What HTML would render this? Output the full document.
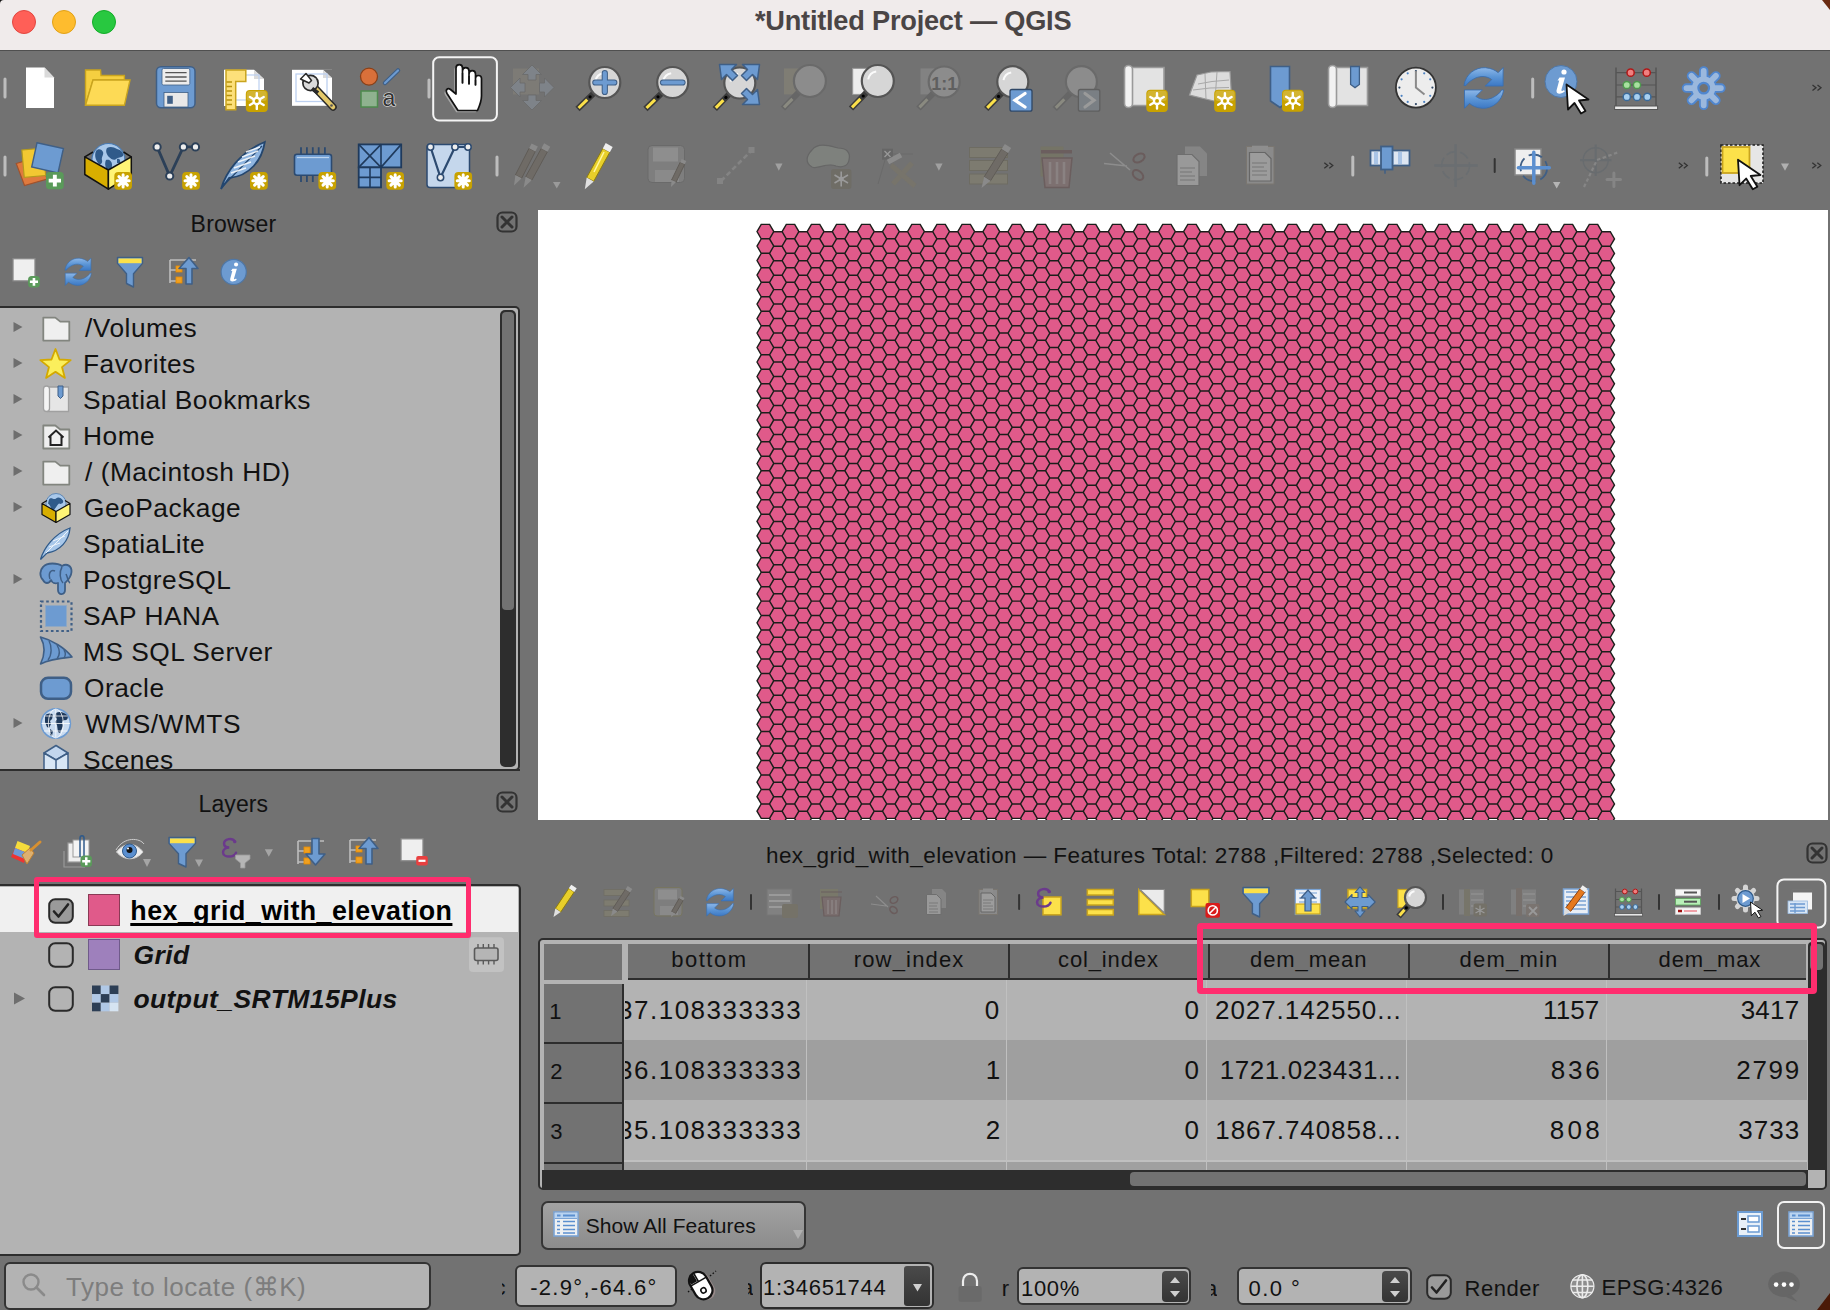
<!DOCTYPE html>
<html><head><meta charset="utf-8"><title>QGIS</title>
<style>
html,body{margin:0;padding:0}
body{width:1830px;height:1310px;position:relative;overflow:hidden;background:#727272;font-family:"Liberation Sans", sans-serif}
.abs{position:absolute}
.t{position:absolute;white-space:pre;line-height:1;font-family:"Liberation Sans", sans-serif}
svg{overflow:visible}
</style></head><body>
<div class="abs" style="left:0px;top:0px;width:1830px;height:50px;background:#F0EBEB"></div>
<div class="abs" style="left:0px;top:50px;width:1830px;height:1px;background:#4F4F4F"></div>
<div class="abs" style="left:12px;top:10px;width:22px;height:22px;border-radius:50%;background:#FF5F57;border:1px solid #E2463F"></div>
<div class="abs" style="left:52px;top:10px;width:22px;height:22px;border-radius:50%;background:#FEBC2E;border:1px solid #E1A116"></div>
<div class="abs" style="left:92px;top:10px;width:22px;height:22px;border-radius:50%;background:#28C840;border:1px solid #12AC28"></div>
<div class="t" style="left:754.90px;top:6.80px;font-size:27.2px;font-weight:bold;font-style:normal;color:#4A4545;letter-spacing:-0.222px;">*Untitled Project — QGIS</div>
<div class="t" style="left:190.60px;top:213.00px;font-size:23px;font-weight:normal;font-style:normal;color:#111;letter-spacing:0.217px;">Browser</div>
<svg class="abs" style="left:496px;top:211px" width="22" height="22" viewBox="0 0 22 22"><rect x="1.5" y="1.5" width="19" height="19" rx="5" fill="none" stroke="#333" stroke-width="2.2"/><path d="M6 6L16 16M16 6L6 16" stroke="#333" stroke-width="3" stroke-linecap="round"/></svg>
<div class="abs" style="left:0px;top:306px;width:520px;height:465px;background:#B3B3B3;border:2px solid #2D2D2D;border-left:none;border-radius:0 5px 5px 0;box-sizing:border-box"></div>
<div class="abs" style="left:500px;top:310px;width:16px;height:457px;background:#2D2D2D;border-radius:5px"></div>
<div class="abs" style="left:502px;top:312px;width:12px;height:298px;background:#727272;border-radius:4px"></div>
<div class="abs" style="left:0;top:308px;width:498px;height:461px;overflow:hidden">
<div class="t" style="left:85.00px;top:6.70px;font-size:26.3px;font-weight:normal;font-style:normal;color:#111;letter-spacing:0.512px;">/Volumes</div>
<svg class="abs" style="left:12px;top:13.199999999999989px" width="12" height="12"><path d="M1.5 1L10.5 6L1.5 11Z" fill="#6E6E6E"/></svg>
<div class="t" style="left:83.00px;top:42.70px;font-size:26.3px;font-weight:normal;font-style:normal;color:#111;letter-spacing:0.512px;">Favorites</div>
<svg class="abs" style="left:12px;top:49.19999999999999px" width="12" height="12"><path d="M1.5 1L10.5 6L1.5 11Z" fill="#6E6E6E"/></svg>
<div class="t" style="left:83.00px;top:78.70px;font-size:26.3px;font-weight:normal;font-style:normal;color:#111;letter-spacing:0.512px;">Spatial Bookmarks</div>
<svg class="abs" style="left:12px;top:85.19999999999999px" width="12" height="12"><path d="M1.5 1L10.5 6L1.5 11Z" fill="#6E6E6E"/></svg>
<div class="t" style="left:83.00px;top:114.70px;font-size:26.3px;font-weight:normal;font-style:normal;color:#111;letter-spacing:0.512px;">Home</div>
<svg class="abs" style="left:12px;top:121.19999999999999px" width="12" height="12"><path d="M1.5 1L10.5 6L1.5 11Z" fill="#6E6E6E"/></svg>
<div class="t" style="left:85.00px;top:150.70px;font-size:26.3px;font-weight:normal;font-style:normal;color:#111;letter-spacing:0.512px;">/ (Macintosh HD)</div>
<svg class="abs" style="left:12px;top:157.2px" width="12" height="12"><path d="M1.5 1L10.5 6L1.5 11Z" fill="#6E6E6E"/></svg>
<div class="t" style="left:84.00px;top:186.70px;font-size:26.3px;font-weight:normal;font-style:normal;color:#111;letter-spacing:0.512px;">GeoPackage</div>
<svg class="abs" style="left:12px;top:193.20000000000005px" width="12" height="12"><path d="M1.5 1L10.5 6L1.5 11Z" fill="#6E6E6E"/></svg>
<div class="t" style="left:83.00px;top:222.70px;font-size:26.3px;font-weight:normal;font-style:normal;color:#111;letter-spacing:0.512px;">SpatiaLite</div>
<div class="t" style="left:83.00px;top:258.70px;font-size:26.3px;font-weight:normal;font-style:normal;color:#111;letter-spacing:0.512px;">PostgreSQL</div>
<svg class="abs" style="left:12px;top:265.20000000000005px" width="12" height="12"><path d="M1.5 1L10.5 6L1.5 11Z" fill="#6E6E6E"/></svg>
<div class="t" style="left:83.00px;top:294.70px;font-size:26.3px;font-weight:normal;font-style:normal;color:#111;letter-spacing:0.512px;">SAP HANA</div>
<div class="t" style="left:83.00px;top:330.70px;font-size:26.3px;font-weight:normal;font-style:normal;color:#111;letter-spacing:0.512px;">MS SQL Server</div>
<div class="t" style="left:84.00px;top:366.70px;font-size:26.3px;font-weight:normal;font-style:normal;color:#111;letter-spacing:0.512px;">Oracle</div>
<div class="t" style="left:85.00px;top:402.70px;font-size:26.3px;font-weight:normal;font-style:normal;color:#111;letter-spacing:0.512px;">WMS/WMTS</div>
<svg class="abs" style="left:12px;top:409.20000000000005px" width="12" height="12"><path d="M1.5 1L10.5 6L1.5 11Z" fill="#6E6E6E"/></svg>
<div class="t" style="left:83.00px;top:438.70px;font-size:26.3px;font-weight:normal;font-style:normal;color:#111;letter-spacing:0.512px;">Scenes</div>
</div>
<div class="abs" style="left:0px;top:769px;width:520px;height:2px;background:#2D2D2D"></div>
<div class="t" style="left:198.60px;top:793.00px;font-size:23px;font-weight:normal;font-style:normal;color:#111;letter-spacing:0.080px;">Layers</div>
<svg class="abs" style="left:496px;top:791px" width="22" height="22" viewBox="0 0 22 22"><rect x="1.5" y="1.5" width="19" height="19" rx="5" fill="none" stroke="#333" stroke-width="2.2"/><path d="M6 6L16 16M16 6L6 16" stroke="#333" stroke-width="3" stroke-linecap="round"/></svg>
<div class="abs" style="left:0px;top:884px;width:521px;height:372px;background:#B3B3B3;border:2px solid #2D2D2D;border-left:none;border-radius:0 5px 5px 0;box-sizing:border-box"></div>
<div class="abs" style="left:0px;top:887px;width:518px;height:45px;background:#F0F0F0"></div>
<svg class="abs" style="left:48px;top:898px" width="26" height="26" viewBox="0 0 26 26"><rect x="1.2" y="1.2" width="23.6" height="23.6" rx="6" fill="#9a9a9a" stroke="#2a2a2a" stroke-width="2"/><path d="M6 13.5L10.5 18.5L20 6.5" fill="none" stroke="#222" stroke-width="2.6" stroke-linecap="round" stroke-linejoin="round"/></svg>
<svg class="abs" style="left:48px;top:942px" width="26" height="26" viewBox="0 0 26 26"><rect x="1.2" y="1.2" width="23.6" height="23.6" rx="6" fill="none" stroke="#2a2a2a" stroke-width="2"/></svg>
<svg class="abs" style="left:48px;top:986px" width="26" height="26" viewBox="0 0 26 26"><rect x="1.2" y="1.2" width="23.6" height="23.6" rx="6" fill="none" stroke="#2a2a2a" stroke-width="2"/></svg>
<div class="abs" style="left:88px;top:894px;width:32px;height:32px;background:#E05A8A;border:1px solid #8a3a55;box-sizing:border-box"></div>
<div class="abs" style="left:88px;top:939px;width:32px;height:31px;background:#9E80BC;border:1px solid #6f5a8a;box-sizing:border-box"></div>
<div class="t" style="left:130.30px;top:897.50px;font-size:26.8px;font-weight:bold;font-style:normal;color:#000;letter-spacing:0.473px;text-decoration:underline;text-underline-offset:3px;text-decoration-thickness:3px;text-decoration-skip-ink:none">hex_grid_with_elevation</div>
<div class="t" style="left:133.40px;top:941.50px;font-size:26.5px;font-weight:bold;font-style:italic;color:#111;letter-spacing:0.433px;">Grid</div>
<div class="t" style="left:133.40px;top:985.50px;font-size:26.5px;font-weight:bold;font-style:italic;color:#111;letter-spacing:0.425px;">output_SRTM15Plus</div>
<svg class="abs" style="left:13px;top:992px" width="13" height="13"><path d="M1 0.5L12 6.5L1 12.5Z" fill="#6E6E6E"/></svg>
<div class="abs" style="left:4px;top:1262px;width:427px;height:48px;background:#B3B3B3;border:2px solid #333;border-radius:6px;box-sizing:border-box"></div>
<svg class="abs" style="left:21px;top:1272px" width="26" height="26" viewBox="0 0 26 26"><circle cx="10" cy="10" r="7.5" fill="none" stroke="#8a8a8a" stroke-width="2.4"/><path d="M15.5 15.5L23 23" stroke="#8a8a8a" stroke-width="2.6" stroke-linecap="round"/></svg>
<div class="t" style="left:66.00px;top:1274.00px;font-size:26px;font-weight:normal;font-style:normal;color:#7D7D7D;letter-spacing:0.556px;">Type to locate (⌘K)</div>
<div class="abs" style="left:538px;top:210px;width:1290px;height:610px;background:#fff"></div>
<svg class="abs" style="left:0;top:0" width="1830" height="1310"><defs><clipPath id="mc"><rect x="538" y="210" width="1290" height="610"/></clipPath></defs><path clip-path="url(#mc)" d="M757 231.6l4.2-7.2h8.4l4.2 7.2l-4.2 7.2h-8.4zM757 246.1l4.2-7.2h8.4l4.2 7.2l-4.2 7.2h-8.4zM757 260.6l4.2-7.2h8.4l4.2 7.2l-4.2 7.2h-8.4zM757 275.1l4.2-7.2h8.4l4.2 7.2l-4.2 7.2h-8.4zM757 289.6l4.2-7.2h8.4l4.2 7.2l-4.2 7.2h-8.4zM757 304.1l4.2-7.2h8.4l4.2 7.2l-4.2 7.2h-8.4zM757 318.6l4.2-7.2h8.4l4.2 7.2l-4.2 7.2h-8.4zM757 333.1l4.2-7.2h8.4l4.2 7.2l-4.2 7.2h-8.4zM757 347.6l4.2-7.2h8.4l4.2 7.2l-4.2 7.2h-8.4zM757 362l4.2-7.2h8.4l4.2 7.2l-4.2 7.2h-8.4zM757 376.5l4.2-7.2h8.4l4.2 7.2l-4.2 7.2h-8.4zM757 391l4.2-7.2h8.4l4.2 7.2l-4.2 7.2h-8.4zM757 405.5l4.2-7.2h8.4l4.2 7.2l-4.2 7.2h-8.4zM757 420l4.2-7.2h8.4l4.2 7.2l-4.2 7.2h-8.4zM757 434.5l4.2-7.2h8.4l4.2 7.2l-4.2 7.2h-8.4zM757 449l4.2-7.2h8.4l4.2 7.2l-4.2 7.2h-8.4zM757 463.5l4.2-7.2h8.4l4.2 7.2l-4.2 7.2h-8.4zM757 478l4.2-7.2h8.4l4.2 7.2l-4.2 7.2h-8.4zM757 492.4l4.2-7.2h8.4l4.2 7.2l-4.2 7.2h-8.4zM757 506.9l4.2-7.2h8.4l4.2 7.2l-4.2 7.2h-8.4zM757 521.4l4.2-7.2h8.4l4.2 7.2l-4.2 7.2h-8.4zM757 535.9l4.2-7.2h8.4l4.2 7.2l-4.2 7.2h-8.4zM757 550.4l4.2-7.2h8.4l4.2 7.2l-4.2 7.2h-8.4zM757 564.9l4.2-7.2h8.4l4.2 7.2l-4.2 7.2h-8.4zM757 579.4l4.2-7.2h8.4l4.2 7.2l-4.2 7.2h-8.4zM757 593.9l4.2-7.2h8.4l4.2 7.2l-4.2 7.2h-8.4zM757 608.3l4.2-7.2h8.4l4.2 7.2l-4.2 7.2h-8.4zM757 622.8l4.2-7.2h8.4l4.2 7.2l-4.2 7.2h-8.4zM757 637.3l4.2-7.2h8.4l4.2 7.2l-4.2 7.2h-8.4zM757 651.8l4.2-7.2h8.4l4.2 7.2l-4.2 7.2h-8.4zM757 666.3l4.2-7.2h8.4l4.2 7.2l-4.2 7.2h-8.4zM757 680.8l4.2-7.2h8.4l4.2 7.2l-4.2 7.2h-8.4zM757 695.3l4.2-7.2h8.4l4.2 7.2l-4.2 7.2h-8.4zM757 709.8l4.2-7.2h8.4l4.2 7.2l-4.2 7.2h-8.4zM757 724.3l4.2-7.2h8.4l4.2 7.2l-4.2 7.2h-8.4zM757 738.7l4.2-7.2h8.4l4.2 7.2l-4.2 7.2h-8.4zM757 753.2l4.2-7.2h8.4l4.2 7.2l-4.2 7.2h-8.4zM757 767.7l4.2-7.2h8.4l4.2 7.2l-4.2 7.2h-8.4zM757 782.2l4.2-7.2h8.4l4.2 7.2l-4.2 7.2h-8.4zM757 796.7l4.2-7.2h8.4l4.2 7.2l-4.2 7.2h-8.4zM757 811.2l4.2-7.2h8.4l4.2 7.2l-4.2 7.2h-8.4zM769.5 238.9l4.2-7.2h8.4l4.2 7.2l-4.2 7.2h-8.4zM769.5 253.4l4.2-7.2h8.4l4.2 7.2l-4.2 7.2h-8.4zM769.5 267.9l4.2-7.2h8.4l4.2 7.2l-4.2 7.2h-8.4zM769.5 282.4l4.2-7.2h8.4l4.2 7.2l-4.2 7.2h-8.4zM769.5 296.8l4.2-7.2h8.4l4.2 7.2l-4.2 7.2h-8.4zM769.5 311.3l4.2-7.2h8.4l4.2 7.2l-4.2 7.2h-8.4zM769.5 325.8l4.2-7.2h8.4l4.2 7.2l-4.2 7.2h-8.4zM769.5 340.3l4.2-7.2h8.4l4.2 7.2l-4.2 7.2h-8.4zM769.5 354.8l4.2-7.2h8.4l4.2 7.2l-4.2 7.2h-8.4zM769.5 369.3l4.2-7.2h8.4l4.2 7.2l-4.2 7.2h-8.4zM769.5 383.8l4.2-7.2h8.4l4.2 7.2l-4.2 7.2h-8.4zM769.5 398.3l4.2-7.2h8.4l4.2 7.2l-4.2 7.2h-8.4zM769.5 412.8l4.2-7.2h8.4l4.2 7.2l-4.2 7.2h-8.4zM769.5 427.2l4.2-7.2h8.4l4.2 7.2l-4.2 7.2h-8.4zM769.5 441.7l4.2-7.2h8.4l4.2 7.2l-4.2 7.2h-8.4zM769.5 456.2l4.2-7.2h8.4l4.2 7.2l-4.2 7.2h-8.4zM769.5 470.7l4.2-7.2h8.4l4.2 7.2l-4.2 7.2h-8.4zM769.5 485.2l4.2-7.2h8.4l4.2 7.2l-4.2 7.2h-8.4zM769.5 499.7l4.2-7.2h8.4l4.2 7.2l-4.2 7.2h-8.4zM769.5 514.2l4.2-7.2h8.4l4.2 7.2l-4.2 7.2h-8.4zM769.5 528.7l4.2-7.2h8.4l4.2 7.2l-4.2 7.2h-8.4zM769.5 543.1l4.2-7.2h8.4l4.2 7.2l-4.2 7.2h-8.4zM769.5 557.6l4.2-7.2h8.4l4.2 7.2l-4.2 7.2h-8.4zM769.5 572.1l4.2-7.2h8.4l4.2 7.2l-4.2 7.2h-8.4zM769.5 586.6l4.2-7.2h8.4l4.2 7.2l-4.2 7.2h-8.4zM769.5 601.1l4.2-7.2h8.4l4.2 7.2l-4.2 7.2h-8.4zM769.5 615.6l4.2-7.2h8.4l4.2 7.2l-4.2 7.2h-8.4zM769.5 630.1l4.2-7.2h8.4l4.2 7.2l-4.2 7.2h-8.4zM769.5 644.6l4.2-7.2h8.4l4.2 7.2l-4.2 7.2h-8.4zM769.5 659.1l4.2-7.2h8.4l4.2 7.2l-4.2 7.2h-8.4zM769.5 673.5l4.2-7.2h8.4l4.2 7.2l-4.2 7.2h-8.4zM769.5 688l4.2-7.2h8.4l4.2 7.2l-4.2 7.2h-8.4zM769.5 702.5l4.2-7.2h8.4l4.2 7.2l-4.2 7.2h-8.4zM769.5 717l4.2-7.2h8.4l4.2 7.2l-4.2 7.2h-8.4zM769.5 731.5l4.2-7.2h8.4l4.2 7.2l-4.2 7.2h-8.4zM769.5 746l4.2-7.2h8.4l4.2 7.2l-4.2 7.2h-8.4zM769.5 760.5l4.2-7.2h8.4l4.2 7.2l-4.2 7.2h-8.4zM769.5 775l4.2-7.2h8.4l4.2 7.2l-4.2 7.2h-8.4zM769.5 789.5l4.2-7.2h8.4l4.2 7.2l-4.2 7.2h-8.4zM769.5 803.9l4.2-7.2h8.4l4.2 7.2l-4.2 7.2h-8.4zM769.5 818.4l4.2-7.2h8.4l4.2 7.2l-4.2 7.2h-8.4zM782.1 231.6l4.2-7.2h8.4l4.2 7.2l-4.2 7.2h-8.4zM782.1 246.1l4.2-7.2h8.4l4.2 7.2l-4.2 7.2h-8.4zM782.1 260.6l4.2-7.2h8.4l4.2 7.2l-4.2 7.2h-8.4zM782.1 275.1l4.2-7.2h8.4l4.2 7.2l-4.2 7.2h-8.4zM782.1 289.6l4.2-7.2h8.4l4.2 7.2l-4.2 7.2h-8.4zM782.1 304.1l4.2-7.2h8.4l4.2 7.2l-4.2 7.2h-8.4zM782.1 318.6l4.2-7.2h8.4l4.2 7.2l-4.2 7.2h-8.4zM782.1 333.1l4.2-7.2h8.4l4.2 7.2l-4.2 7.2h-8.4zM782.1 347.6l4.2-7.2h8.4l4.2 7.2l-4.2 7.2h-8.4zM782.1 362l4.2-7.2h8.4l4.2 7.2l-4.2 7.2h-8.4zM782.1 376.5l4.2-7.2h8.4l4.2 7.2l-4.2 7.2h-8.4zM782.1 391l4.2-7.2h8.4l4.2 7.2l-4.2 7.2h-8.4zM782.1 405.5l4.2-7.2h8.4l4.2 7.2l-4.2 7.2h-8.4zM782.1 420l4.2-7.2h8.4l4.2 7.2l-4.2 7.2h-8.4zM782.1 434.5l4.2-7.2h8.4l4.2 7.2l-4.2 7.2h-8.4zM782.1 449l4.2-7.2h8.4l4.2 7.2l-4.2 7.2h-8.4zM782.1 463.5l4.2-7.2h8.4l4.2 7.2l-4.2 7.2h-8.4zM782.1 478l4.2-7.2h8.4l4.2 7.2l-4.2 7.2h-8.4zM782.1 492.4l4.2-7.2h8.4l4.2 7.2l-4.2 7.2h-8.4zM782.1 506.9l4.2-7.2h8.4l4.2 7.2l-4.2 7.2h-8.4zM782.1 521.4l4.2-7.2h8.4l4.2 7.2l-4.2 7.2h-8.4zM782.1 535.9l4.2-7.2h8.4l4.2 7.2l-4.2 7.2h-8.4zM782.1 550.4l4.2-7.2h8.4l4.2 7.2l-4.2 7.2h-8.4zM782.1 564.9l4.2-7.2h8.4l4.2 7.2l-4.2 7.2h-8.4zM782.1 579.4l4.2-7.2h8.4l4.2 7.2l-4.2 7.2h-8.4zM782.1 593.9l4.2-7.2h8.4l4.2 7.2l-4.2 7.2h-8.4zM782.1 608.3l4.2-7.2h8.4l4.2 7.2l-4.2 7.2h-8.4zM782.1 622.8l4.2-7.2h8.4l4.2 7.2l-4.2 7.2h-8.4zM782.1 637.3l4.2-7.2h8.4l4.2 7.2l-4.2 7.2h-8.4zM782.1 651.8l4.2-7.2h8.4l4.2 7.2l-4.2 7.2h-8.4zM782.1 666.3l4.2-7.2h8.4l4.2 7.2l-4.2 7.2h-8.4zM782.1 680.8l4.2-7.2h8.4l4.2 7.2l-4.2 7.2h-8.4zM782.1 695.3l4.2-7.2h8.4l4.2 7.2l-4.2 7.2h-8.4zM782.1 709.8l4.2-7.2h8.4l4.2 7.2l-4.2 7.2h-8.4zM782.1 724.3l4.2-7.2h8.4l4.2 7.2l-4.2 7.2h-8.4zM782.1 738.7l4.2-7.2h8.4l4.2 7.2l-4.2 7.2h-8.4zM782.1 753.2l4.2-7.2h8.4l4.2 7.2l-4.2 7.2h-8.4zM782.1 767.7l4.2-7.2h8.4l4.2 7.2l-4.2 7.2h-8.4zM782.1 782.2l4.2-7.2h8.4l4.2 7.2l-4.2 7.2h-8.4zM782.1 796.7l4.2-7.2h8.4l4.2 7.2l-4.2 7.2h-8.4zM782.1 811.2l4.2-7.2h8.4l4.2 7.2l-4.2 7.2h-8.4zM794.6 238.9l4.2-7.2h8.4l4.2 7.2l-4.2 7.2h-8.4zM794.6 253.4l4.2-7.2h8.4l4.2 7.2l-4.2 7.2h-8.4zM794.6 267.9l4.2-7.2h8.4l4.2 7.2l-4.2 7.2h-8.4zM794.6 282.4l4.2-7.2h8.4l4.2 7.2l-4.2 7.2h-8.4zM794.6 296.8l4.2-7.2h8.4l4.2 7.2l-4.2 7.2h-8.4zM794.6 311.3l4.2-7.2h8.4l4.2 7.2l-4.2 7.2h-8.4zM794.6 325.8l4.2-7.2h8.4l4.2 7.2l-4.2 7.2h-8.4zM794.6 340.3l4.2-7.2h8.4l4.2 7.2l-4.2 7.2h-8.4zM794.6 354.8l4.2-7.2h8.4l4.2 7.2l-4.2 7.2h-8.4zM794.6 369.3l4.2-7.2h8.4l4.2 7.2l-4.2 7.2h-8.4zM794.6 383.8l4.2-7.2h8.4l4.2 7.2l-4.2 7.2h-8.4zM794.6 398.3l4.2-7.2h8.4l4.2 7.2l-4.2 7.2h-8.4zM794.6 412.8l4.2-7.2h8.4l4.2 7.2l-4.2 7.2h-8.4zM794.6 427.2l4.2-7.2h8.4l4.2 7.2l-4.2 7.2h-8.4zM794.6 441.7l4.2-7.2h8.4l4.2 7.2l-4.2 7.2h-8.4zM794.6 456.2l4.2-7.2h8.4l4.2 7.2l-4.2 7.2h-8.4zM794.6 470.7l4.2-7.2h8.4l4.2 7.2l-4.2 7.2h-8.4zM794.6 485.2l4.2-7.2h8.4l4.2 7.2l-4.2 7.2h-8.4zM794.6 499.7l4.2-7.2h8.4l4.2 7.2l-4.2 7.2h-8.4zM794.6 514.2l4.2-7.2h8.4l4.2 7.2l-4.2 7.2h-8.4zM794.6 528.7l4.2-7.2h8.4l4.2 7.2l-4.2 7.2h-8.4zM794.6 543.1l4.2-7.2h8.4l4.2 7.2l-4.2 7.2h-8.4zM794.6 557.6l4.2-7.2h8.4l4.2 7.2l-4.2 7.2h-8.4zM794.6 572.1l4.2-7.2h8.4l4.2 7.2l-4.2 7.2h-8.4zM794.6 586.6l4.2-7.2h8.4l4.2 7.2l-4.2 7.2h-8.4zM794.6 601.1l4.2-7.2h8.4l4.2 7.2l-4.2 7.2h-8.4zM794.6 615.6l4.2-7.2h8.4l4.2 7.2l-4.2 7.2h-8.4zM794.6 630.1l4.2-7.2h8.4l4.2 7.2l-4.2 7.2h-8.4zM794.6 644.6l4.2-7.2h8.4l4.2 7.2l-4.2 7.2h-8.4zM794.6 659.1l4.2-7.2h8.4l4.2 7.2l-4.2 7.2h-8.4zM794.6 673.5l4.2-7.2h8.4l4.2 7.2l-4.2 7.2h-8.4zM794.6 688l4.2-7.2h8.4l4.2 7.2l-4.2 7.2h-8.4zM794.6 702.5l4.2-7.2h8.4l4.2 7.2l-4.2 7.2h-8.4zM794.6 717l4.2-7.2h8.4l4.2 7.2l-4.2 7.2h-8.4zM794.6 731.5l4.2-7.2h8.4l4.2 7.2l-4.2 7.2h-8.4zM794.6 746l4.2-7.2h8.4l4.2 7.2l-4.2 7.2h-8.4zM794.6 760.5l4.2-7.2h8.4l4.2 7.2l-4.2 7.2h-8.4zM794.6 775l4.2-7.2h8.4l4.2 7.2l-4.2 7.2h-8.4zM794.6 789.5l4.2-7.2h8.4l4.2 7.2l-4.2 7.2h-8.4zM794.6 803.9l4.2-7.2h8.4l4.2 7.2l-4.2 7.2h-8.4zM794.6 818.4l4.2-7.2h8.4l4.2 7.2l-4.2 7.2h-8.4zM807.2 231.6l4.2-7.2h8.4l4.2 7.2l-4.2 7.2h-8.4zM807.2 246.1l4.2-7.2h8.4l4.2 7.2l-4.2 7.2h-8.4zM807.2 260.6l4.2-7.2h8.4l4.2 7.2l-4.2 7.2h-8.4zM807.2 275.1l4.2-7.2h8.4l4.2 7.2l-4.2 7.2h-8.4zM807.2 289.6l4.2-7.2h8.4l4.2 7.2l-4.2 7.2h-8.4zM807.2 304.1l4.2-7.2h8.4l4.2 7.2l-4.2 7.2h-8.4zM807.2 318.6l4.2-7.2h8.4l4.2 7.2l-4.2 7.2h-8.4zM807.2 333.1l4.2-7.2h8.4l4.2 7.2l-4.2 7.2h-8.4zM807.2 347.6l4.2-7.2h8.4l4.2 7.2l-4.2 7.2h-8.4zM807.2 362l4.2-7.2h8.4l4.2 7.2l-4.2 7.2h-8.4zM807.2 376.5l4.2-7.2h8.4l4.2 7.2l-4.2 7.2h-8.4zM807.2 391l4.2-7.2h8.4l4.2 7.2l-4.2 7.2h-8.4zM807.2 405.5l4.2-7.2h8.4l4.2 7.2l-4.2 7.2h-8.4zM807.2 420l4.2-7.2h8.4l4.2 7.2l-4.2 7.2h-8.4zM807.2 434.5l4.2-7.2h8.4l4.2 7.2l-4.2 7.2h-8.4zM807.2 449l4.2-7.2h8.4l4.2 7.2l-4.2 7.2h-8.4zM807.2 463.5l4.2-7.2h8.4l4.2 7.2l-4.2 7.2h-8.4zM807.2 478l4.2-7.2h8.4l4.2 7.2l-4.2 7.2h-8.4zM807.2 492.4l4.2-7.2h8.4l4.2 7.2l-4.2 7.2h-8.4zM807.2 506.9l4.2-7.2h8.4l4.2 7.2l-4.2 7.2h-8.4zM807.2 521.4l4.2-7.2h8.4l4.2 7.2l-4.2 7.2h-8.4zM807.2 535.9l4.2-7.2h8.4l4.2 7.2l-4.2 7.2h-8.4zM807.2 550.4l4.2-7.2h8.4l4.2 7.2l-4.2 7.2h-8.4zM807.2 564.9l4.2-7.2h8.4l4.2 7.2l-4.2 7.2h-8.4zM807.2 579.4l4.2-7.2h8.4l4.2 7.2l-4.2 7.2h-8.4zM807.2 593.9l4.2-7.2h8.4l4.2 7.2l-4.2 7.2h-8.4zM807.2 608.3l4.2-7.2h8.4l4.2 7.2l-4.2 7.2h-8.4zM807.2 622.8l4.2-7.2h8.4l4.2 7.2l-4.2 7.2h-8.4zM807.2 637.3l4.2-7.2h8.4l4.2 7.2l-4.2 7.2h-8.4zM807.2 651.8l4.2-7.2h8.4l4.2 7.2l-4.2 7.2h-8.4zM807.2 666.3l4.2-7.2h8.4l4.2 7.2l-4.2 7.2h-8.4zM807.2 680.8l4.2-7.2h8.4l4.2 7.2l-4.2 7.2h-8.4zM807.2 695.3l4.2-7.2h8.4l4.2 7.2l-4.2 7.2h-8.4zM807.2 709.8l4.2-7.2h8.4l4.2 7.2l-4.2 7.2h-8.4zM807.2 724.3l4.2-7.2h8.4l4.2 7.2l-4.2 7.2h-8.4zM807.2 738.7l4.2-7.2h8.4l4.2 7.2l-4.2 7.2h-8.4zM807.2 753.2l4.2-7.2h8.4l4.2 7.2l-4.2 7.2h-8.4zM807.2 767.7l4.2-7.2h8.4l4.2 7.2l-4.2 7.2h-8.4zM807.2 782.2l4.2-7.2h8.4l4.2 7.2l-4.2 7.2h-8.4zM807.2 796.7l4.2-7.2h8.4l4.2 7.2l-4.2 7.2h-8.4zM807.2 811.2l4.2-7.2h8.4l4.2 7.2l-4.2 7.2h-8.4zM819.7 238.9l4.2-7.2h8.4l4.2 7.2l-4.2 7.2h-8.4zM819.7 253.4l4.2-7.2h8.4l4.2 7.2l-4.2 7.2h-8.4zM819.7 267.9l4.2-7.2h8.4l4.2 7.2l-4.2 7.2h-8.4zM819.7 282.4l4.2-7.2h8.4l4.2 7.2l-4.2 7.2h-8.4zM819.7 296.8l4.2-7.2h8.4l4.2 7.2l-4.2 7.2h-8.4zM819.7 311.3l4.2-7.2h8.4l4.2 7.2l-4.2 7.2h-8.4zM819.7 325.8l4.2-7.2h8.4l4.2 7.2l-4.2 7.2h-8.4zM819.7 340.3l4.2-7.2h8.4l4.2 7.2l-4.2 7.2h-8.4zM819.7 354.8l4.2-7.2h8.4l4.2 7.2l-4.2 7.2h-8.4zM819.7 369.3l4.2-7.2h8.4l4.2 7.2l-4.2 7.2h-8.4zM819.7 383.8l4.2-7.2h8.4l4.2 7.2l-4.2 7.2h-8.4zM819.7 398.3l4.2-7.2h8.4l4.2 7.2l-4.2 7.2h-8.4zM819.7 412.8l4.2-7.2h8.4l4.2 7.2l-4.2 7.2h-8.4zM819.7 427.2l4.2-7.2h8.4l4.2 7.2l-4.2 7.2h-8.4zM819.7 441.7l4.2-7.2h8.4l4.2 7.2l-4.2 7.2h-8.4zM819.7 456.2l4.2-7.2h8.4l4.2 7.2l-4.2 7.2h-8.4zM819.7 470.7l4.2-7.2h8.4l4.2 7.2l-4.2 7.2h-8.4zM819.7 485.2l4.2-7.2h8.4l4.2 7.2l-4.2 7.2h-8.4zM819.7 499.7l4.2-7.2h8.4l4.2 7.2l-4.2 7.2h-8.4zM819.7 514.2l4.2-7.2h8.4l4.2 7.2l-4.2 7.2h-8.4zM819.7 528.7l4.2-7.2h8.4l4.2 7.2l-4.2 7.2h-8.4zM819.7 543.1l4.2-7.2h8.4l4.2 7.2l-4.2 7.2h-8.4zM819.7 557.6l4.2-7.2h8.4l4.2 7.2l-4.2 7.2h-8.4zM819.7 572.1l4.2-7.2h8.4l4.2 7.2l-4.2 7.2h-8.4zM819.7 586.6l4.2-7.2h8.4l4.2 7.2l-4.2 7.2h-8.4zM819.7 601.1l4.2-7.2h8.4l4.2 7.2l-4.2 7.2h-8.4zM819.7 615.6l4.2-7.2h8.4l4.2 7.2l-4.2 7.2h-8.4zM819.7 630.1l4.2-7.2h8.4l4.2 7.2l-4.2 7.2h-8.4zM819.7 644.6l4.2-7.2h8.4l4.2 7.2l-4.2 7.2h-8.4zM819.7 659.1l4.2-7.2h8.4l4.2 7.2l-4.2 7.2h-8.4zM819.7 673.5l4.2-7.2h8.4l4.2 7.2l-4.2 7.2h-8.4zM819.7 688l4.2-7.2h8.4l4.2 7.2l-4.2 7.2h-8.4zM819.7 702.5l4.2-7.2h8.4l4.2 7.2l-4.2 7.2h-8.4zM819.7 717l4.2-7.2h8.4l4.2 7.2l-4.2 7.2h-8.4zM819.7 731.5l4.2-7.2h8.4l4.2 7.2l-4.2 7.2h-8.4zM819.7 746l4.2-7.2h8.4l4.2 7.2l-4.2 7.2h-8.4zM819.7 760.5l4.2-7.2h8.4l4.2 7.2l-4.2 7.2h-8.4zM819.7 775l4.2-7.2h8.4l4.2 7.2l-4.2 7.2h-8.4zM819.7 789.5l4.2-7.2h8.4l4.2 7.2l-4.2 7.2h-8.4zM819.7 803.9l4.2-7.2h8.4l4.2 7.2l-4.2 7.2h-8.4zM819.7 818.4l4.2-7.2h8.4l4.2 7.2l-4.2 7.2h-8.4zM832.3 231.6l4.2-7.2h8.4l4.2 7.2l-4.2 7.2h-8.4zM832.3 246.1l4.2-7.2h8.4l4.2 7.2l-4.2 7.2h-8.4zM832.3 260.6l4.2-7.2h8.4l4.2 7.2l-4.2 7.2h-8.4zM832.3 275.1l4.2-7.2h8.4l4.2 7.2l-4.2 7.2h-8.4zM832.3 289.6l4.2-7.2h8.4l4.2 7.2l-4.2 7.2h-8.4zM832.3 304.1l4.2-7.2h8.4l4.2 7.2l-4.2 7.2h-8.4zM832.3 318.6l4.2-7.2h8.4l4.2 7.2l-4.2 7.2h-8.4zM832.3 333.1l4.2-7.2h8.4l4.2 7.2l-4.2 7.2h-8.4zM832.3 347.6l4.2-7.2h8.4l4.2 7.2l-4.2 7.2h-8.4zM832.3 362l4.2-7.2h8.4l4.2 7.2l-4.2 7.2h-8.4zM832.3 376.5l4.2-7.2h8.4l4.2 7.2l-4.2 7.2h-8.4zM832.3 391l4.2-7.2h8.4l4.2 7.2l-4.2 7.2h-8.4zM832.3 405.5l4.2-7.2h8.4l4.2 7.2l-4.2 7.2h-8.4zM832.3 420l4.2-7.2h8.4l4.2 7.2l-4.2 7.2h-8.4zM832.3 434.5l4.2-7.2h8.4l4.2 7.2l-4.2 7.2h-8.4zM832.3 449l4.2-7.2h8.4l4.2 7.2l-4.2 7.2h-8.4zM832.3 463.5l4.2-7.2h8.4l4.2 7.2l-4.2 7.2h-8.4zM832.3 478l4.2-7.2h8.4l4.2 7.2l-4.2 7.2h-8.4zM832.3 492.4l4.2-7.2h8.4l4.2 7.2l-4.2 7.2h-8.4zM832.3 506.9l4.2-7.2h8.4l4.2 7.2l-4.2 7.2h-8.4zM832.3 521.4l4.2-7.2h8.4l4.2 7.2l-4.2 7.2h-8.4zM832.3 535.9l4.2-7.2h8.4l4.2 7.2l-4.2 7.2h-8.4zM832.3 550.4l4.2-7.2h8.4l4.2 7.2l-4.2 7.2h-8.4zM832.3 564.9l4.2-7.2h8.4l4.2 7.2l-4.2 7.2h-8.4zM832.3 579.4l4.2-7.2h8.4l4.2 7.2l-4.2 7.2h-8.4zM832.3 593.9l4.2-7.2h8.4l4.2 7.2l-4.2 7.2h-8.4zM832.3 608.3l4.2-7.2h8.4l4.2 7.2l-4.2 7.2h-8.4zM832.3 622.8l4.2-7.2h8.4l4.2 7.2l-4.2 7.2h-8.4zM832.3 637.3l4.2-7.2h8.4l4.2 7.2l-4.2 7.2h-8.4zM832.3 651.8l4.2-7.2h8.4l4.2 7.2l-4.2 7.2h-8.4zM832.3 666.3l4.2-7.2h8.4l4.2 7.2l-4.2 7.2h-8.4zM832.3 680.8l4.2-7.2h8.4l4.2 7.2l-4.2 7.2h-8.4zM832.3 695.3l4.2-7.2h8.4l4.2 7.2l-4.2 7.2h-8.4zM832.3 709.8l4.2-7.2h8.4l4.2 7.2l-4.2 7.2h-8.4zM832.3 724.3l4.2-7.2h8.4l4.2 7.2l-4.2 7.2h-8.4zM832.3 738.7l4.2-7.2h8.4l4.2 7.2l-4.2 7.2h-8.4zM832.3 753.2l4.2-7.2h8.4l4.2 7.2l-4.2 7.2h-8.4zM832.3 767.7l4.2-7.2h8.4l4.2 7.2l-4.2 7.2h-8.4zM832.3 782.2l4.2-7.2h8.4l4.2 7.2l-4.2 7.2h-8.4zM832.3 796.7l4.2-7.2h8.4l4.2 7.2l-4.2 7.2h-8.4zM832.3 811.2l4.2-7.2h8.4l4.2 7.2l-4.2 7.2h-8.4zM844.8 238.9l4.2-7.2h8.4l4.2 7.2l-4.2 7.2h-8.4zM844.8 253.4l4.2-7.2h8.4l4.2 7.2l-4.2 7.2h-8.4zM844.8 267.9l4.2-7.2h8.4l4.2 7.2l-4.2 7.2h-8.4zM844.8 282.4l4.2-7.2h8.4l4.2 7.2l-4.2 7.2h-8.4zM844.8 296.8l4.2-7.2h8.4l4.2 7.2l-4.2 7.2h-8.4zM844.8 311.3l4.2-7.2h8.4l4.2 7.2l-4.2 7.2h-8.4zM844.8 325.8l4.2-7.2h8.4l4.2 7.2l-4.2 7.2h-8.4zM844.8 340.3l4.2-7.2h8.4l4.2 7.2l-4.2 7.2h-8.4zM844.8 354.8l4.2-7.2h8.4l4.2 7.2l-4.2 7.2h-8.4zM844.8 369.3l4.2-7.2h8.4l4.2 7.2l-4.2 7.2h-8.4zM844.8 383.8l4.2-7.2h8.4l4.2 7.2l-4.2 7.2h-8.4zM844.8 398.3l4.2-7.2h8.4l4.2 7.2l-4.2 7.2h-8.4zM844.8 412.8l4.2-7.2h8.4l4.2 7.2l-4.2 7.2h-8.4zM844.8 427.2l4.2-7.2h8.4l4.2 7.2l-4.2 7.2h-8.4zM844.8 441.7l4.2-7.2h8.4l4.2 7.2l-4.2 7.2h-8.4zM844.8 456.2l4.2-7.2h8.4l4.2 7.2l-4.2 7.2h-8.4zM844.8 470.7l4.2-7.2h8.4l4.2 7.2l-4.2 7.2h-8.4zM844.8 485.2l4.2-7.2h8.4l4.2 7.2l-4.2 7.2h-8.4zM844.8 499.7l4.2-7.2h8.4l4.2 7.2l-4.2 7.2h-8.4zM844.8 514.2l4.2-7.2h8.4l4.2 7.2l-4.2 7.2h-8.4zM844.8 528.7l4.2-7.2h8.4l4.2 7.2l-4.2 7.2h-8.4zM844.8 543.1l4.2-7.2h8.4l4.2 7.2l-4.2 7.2h-8.4zM844.8 557.6l4.2-7.2h8.4l4.2 7.2l-4.2 7.2h-8.4zM844.8 572.1l4.2-7.2h8.4l4.2 7.2l-4.2 7.2h-8.4zM844.8 586.6l4.2-7.2h8.4l4.2 7.2l-4.2 7.2h-8.4zM844.8 601.1l4.2-7.2h8.4l4.2 7.2l-4.2 7.2h-8.4zM844.8 615.6l4.2-7.2h8.4l4.2 7.2l-4.2 7.2h-8.4zM844.8 630.1l4.2-7.2h8.4l4.2 7.2l-4.2 7.2h-8.4zM844.8 644.6l4.2-7.2h8.4l4.2 7.2l-4.2 7.2h-8.4zM844.8 659.1l4.2-7.2h8.4l4.2 7.2l-4.2 7.2h-8.4zM844.8 673.5l4.2-7.2h8.4l4.2 7.2l-4.2 7.2h-8.4zM844.8 688l4.2-7.2h8.4l4.2 7.2l-4.2 7.2h-8.4zM844.8 702.5l4.2-7.2h8.4l4.2 7.2l-4.2 7.2h-8.4zM844.8 717l4.2-7.2h8.4l4.2 7.2l-4.2 7.2h-8.4zM844.8 731.5l4.2-7.2h8.4l4.2 7.2l-4.2 7.2h-8.4zM844.8 746l4.2-7.2h8.4l4.2 7.2l-4.2 7.2h-8.4zM844.8 760.5l4.2-7.2h8.4l4.2 7.2l-4.2 7.2h-8.4zM844.8 775l4.2-7.2h8.4l4.2 7.2l-4.2 7.2h-8.4zM844.8 789.5l4.2-7.2h8.4l4.2 7.2l-4.2 7.2h-8.4zM844.8 803.9l4.2-7.2h8.4l4.2 7.2l-4.2 7.2h-8.4zM844.8 818.4l4.2-7.2h8.4l4.2 7.2l-4.2 7.2h-8.4zM857.4 231.6l4.2-7.2h8.4l4.2 7.2l-4.2 7.2h-8.4zM857.4 246.1l4.2-7.2h8.4l4.2 7.2l-4.2 7.2h-8.4zM857.4 260.6l4.2-7.2h8.4l4.2 7.2l-4.2 7.2h-8.4zM857.4 275.1l4.2-7.2h8.4l4.2 7.2l-4.2 7.2h-8.4zM857.4 289.6l4.2-7.2h8.4l4.2 7.2l-4.2 7.2h-8.4zM857.4 304.1l4.2-7.2h8.4l4.2 7.2l-4.2 7.2h-8.4zM857.4 318.6l4.2-7.2h8.4l4.2 7.2l-4.2 7.2h-8.4zM857.4 333.1l4.2-7.2h8.4l4.2 7.2l-4.2 7.2h-8.4zM857.4 347.6l4.2-7.2h8.4l4.2 7.2l-4.2 7.2h-8.4zM857.4 362l4.2-7.2h8.4l4.2 7.2l-4.2 7.2h-8.4zM857.4 376.5l4.2-7.2h8.4l4.2 7.2l-4.2 7.2h-8.4zM857.4 391l4.2-7.2h8.4l4.2 7.2l-4.2 7.2h-8.4zM857.4 405.5l4.2-7.2h8.4l4.2 7.2l-4.2 7.2h-8.4zM857.4 420l4.2-7.2h8.4l4.2 7.2l-4.2 7.2h-8.4zM857.4 434.5l4.2-7.2h8.4l4.2 7.2l-4.2 7.2h-8.4zM857.4 449l4.2-7.2h8.4l4.2 7.2l-4.2 7.2h-8.4zM857.4 463.5l4.2-7.2h8.4l4.2 7.2l-4.2 7.2h-8.4zM857.4 478l4.2-7.2h8.4l4.2 7.2l-4.2 7.2h-8.4zM857.4 492.4l4.2-7.2h8.4l4.2 7.2l-4.2 7.2h-8.4zM857.4 506.9l4.2-7.2h8.4l4.2 7.2l-4.2 7.2h-8.4zM857.4 521.4l4.2-7.2h8.4l4.2 7.2l-4.2 7.2h-8.4zM857.4 535.9l4.2-7.2h8.4l4.2 7.2l-4.2 7.2h-8.4zM857.4 550.4l4.2-7.2h8.4l4.2 7.2l-4.2 7.2h-8.4zM857.4 564.9l4.2-7.2h8.4l4.2 7.2l-4.2 7.2h-8.4zM857.4 579.4l4.2-7.2h8.4l4.2 7.2l-4.2 7.2h-8.4zM857.4 593.9l4.2-7.2h8.4l4.2 7.2l-4.2 7.2h-8.4zM857.4 608.3l4.2-7.2h8.4l4.2 7.2l-4.2 7.2h-8.4zM857.4 622.8l4.2-7.2h8.4l4.2 7.2l-4.2 7.2h-8.4zM857.4 637.3l4.2-7.2h8.4l4.2 7.2l-4.2 7.2h-8.4zM857.4 651.8l4.2-7.2h8.4l4.2 7.2l-4.2 7.2h-8.4zM857.4 666.3l4.2-7.2h8.4l4.2 7.2l-4.2 7.2h-8.4zM857.4 680.8l4.2-7.2h8.4l4.2 7.2l-4.2 7.2h-8.4zM857.4 695.3l4.2-7.2h8.4l4.2 7.2l-4.2 7.2h-8.4zM857.4 709.8l4.2-7.2h8.4l4.2 7.2l-4.2 7.2h-8.4zM857.4 724.3l4.2-7.2h8.4l4.2 7.2l-4.2 7.2h-8.4zM857.4 738.7l4.2-7.2h8.4l4.2 7.2l-4.2 7.2h-8.4zM857.4 753.2l4.2-7.2h8.4l4.2 7.2l-4.2 7.2h-8.4zM857.4 767.7l4.2-7.2h8.4l4.2 7.2l-4.2 7.2h-8.4zM857.4 782.2l4.2-7.2h8.4l4.2 7.2l-4.2 7.2h-8.4zM857.4 796.7l4.2-7.2h8.4l4.2 7.2l-4.2 7.2h-8.4zM857.4 811.2l4.2-7.2h8.4l4.2 7.2l-4.2 7.2h-8.4zM869.9 238.9l4.2-7.2h8.4l4.2 7.2l-4.2 7.2h-8.4zM869.9 253.4l4.2-7.2h8.4l4.2 7.2l-4.2 7.2h-8.4zM869.9 267.9l4.2-7.2h8.4l4.2 7.2l-4.2 7.2h-8.4zM869.9 282.4l4.2-7.2h8.4l4.2 7.2l-4.2 7.2h-8.4zM869.9 296.8l4.2-7.2h8.4l4.2 7.2l-4.2 7.2h-8.4zM869.9 311.3l4.2-7.2h8.4l4.2 7.2l-4.2 7.2h-8.4zM869.9 325.8l4.2-7.2h8.4l4.2 7.2l-4.2 7.2h-8.4zM869.9 340.3l4.2-7.2h8.4l4.2 7.2l-4.2 7.2h-8.4zM869.9 354.8l4.2-7.2h8.4l4.2 7.2l-4.2 7.2h-8.4zM869.9 369.3l4.2-7.2h8.4l4.2 7.2l-4.2 7.2h-8.4zM869.9 383.8l4.2-7.2h8.4l4.2 7.2l-4.2 7.2h-8.4zM869.9 398.3l4.2-7.2h8.4l4.2 7.2l-4.2 7.2h-8.4zM869.9 412.8l4.2-7.2h8.4l4.2 7.2l-4.2 7.2h-8.4zM869.9 427.2l4.2-7.2h8.4l4.2 7.2l-4.2 7.2h-8.4zM869.9 441.7l4.2-7.2h8.4l4.2 7.2l-4.2 7.2h-8.4zM869.9 456.2l4.2-7.2h8.4l4.2 7.2l-4.2 7.2h-8.4zM869.9 470.7l4.2-7.2h8.4l4.2 7.2l-4.2 7.2h-8.4zM869.9 485.2l4.2-7.2h8.4l4.2 7.2l-4.2 7.2h-8.4zM869.9 499.7l4.2-7.2h8.4l4.2 7.2l-4.2 7.2h-8.4zM869.9 514.2l4.2-7.2h8.4l4.2 7.2l-4.2 7.2h-8.4zM869.9 528.7l4.2-7.2h8.4l4.2 7.2l-4.2 7.2h-8.4zM869.9 543.1l4.2-7.2h8.4l4.2 7.2l-4.2 7.2h-8.4zM869.9 557.6l4.2-7.2h8.4l4.2 7.2l-4.2 7.2h-8.4zM869.9 572.1l4.2-7.2h8.4l4.2 7.2l-4.2 7.2h-8.4zM869.9 586.6l4.2-7.2h8.4l4.2 7.2l-4.2 7.2h-8.4zM869.9 601.1l4.2-7.2h8.4l4.2 7.2l-4.2 7.2h-8.4zM869.9 615.6l4.2-7.2h8.4l4.2 7.2l-4.2 7.2h-8.4zM869.9 630.1l4.2-7.2h8.4l4.2 7.2l-4.2 7.2h-8.4zM869.9 644.6l4.2-7.2h8.4l4.2 7.2l-4.2 7.2h-8.4zM869.9 659.1l4.2-7.2h8.4l4.2 7.2l-4.2 7.2h-8.4zM869.9 673.5l4.2-7.2h8.4l4.2 7.2l-4.2 7.2h-8.4zM869.9 688l4.2-7.2h8.4l4.2 7.2l-4.2 7.2h-8.4zM869.9 702.5l4.2-7.2h8.4l4.2 7.2l-4.2 7.2h-8.4zM869.9 717l4.2-7.2h8.4l4.2 7.2l-4.2 7.2h-8.4zM869.9 731.5l4.2-7.2h8.4l4.2 7.2l-4.2 7.2h-8.4zM869.9 746l4.2-7.2h8.4l4.2 7.2l-4.2 7.2h-8.4zM869.9 760.5l4.2-7.2h8.4l4.2 7.2l-4.2 7.2h-8.4zM869.9 775l4.2-7.2h8.4l4.2 7.2l-4.2 7.2h-8.4zM869.9 789.5l4.2-7.2h8.4l4.2 7.2l-4.2 7.2h-8.4zM869.9 803.9l4.2-7.2h8.4l4.2 7.2l-4.2 7.2h-8.4zM869.9 818.4l4.2-7.2h8.4l4.2 7.2l-4.2 7.2h-8.4zM882.5 231.6l4.2-7.2h8.4l4.2 7.2l-4.2 7.2h-8.4zM882.5 246.1l4.2-7.2h8.4l4.2 7.2l-4.2 7.2h-8.4zM882.5 260.6l4.2-7.2h8.4l4.2 7.2l-4.2 7.2h-8.4zM882.5 275.1l4.2-7.2h8.4l4.2 7.2l-4.2 7.2h-8.4zM882.5 289.6l4.2-7.2h8.4l4.2 7.2l-4.2 7.2h-8.4zM882.5 304.1l4.2-7.2h8.4l4.2 7.2l-4.2 7.2h-8.4zM882.5 318.6l4.2-7.2h8.4l4.2 7.2l-4.2 7.2h-8.4zM882.5 333.1l4.2-7.2h8.4l4.2 7.2l-4.2 7.2h-8.4zM882.5 347.6l4.2-7.2h8.4l4.2 7.2l-4.2 7.2h-8.4zM882.5 362l4.2-7.2h8.4l4.2 7.2l-4.2 7.2h-8.4zM882.5 376.5l4.2-7.2h8.4l4.2 7.2l-4.2 7.2h-8.4zM882.5 391l4.2-7.2h8.4l4.2 7.2l-4.2 7.2h-8.4zM882.5 405.5l4.2-7.2h8.4l4.2 7.2l-4.2 7.2h-8.4zM882.5 420l4.2-7.2h8.4l4.2 7.2l-4.2 7.2h-8.4zM882.5 434.5l4.2-7.2h8.4l4.2 7.2l-4.2 7.2h-8.4zM882.5 449l4.2-7.2h8.4l4.2 7.2l-4.2 7.2h-8.4zM882.5 463.5l4.2-7.2h8.4l4.2 7.2l-4.2 7.2h-8.4zM882.5 478l4.2-7.2h8.4l4.2 7.2l-4.2 7.2h-8.4zM882.5 492.4l4.2-7.2h8.4l4.2 7.2l-4.2 7.2h-8.4zM882.5 506.9l4.2-7.2h8.4l4.2 7.2l-4.2 7.2h-8.4zM882.5 521.4l4.2-7.2h8.4l4.2 7.2l-4.2 7.2h-8.4zM882.5 535.9l4.2-7.2h8.4l4.2 7.2l-4.2 7.2h-8.4zM882.5 550.4l4.2-7.2h8.4l4.2 7.2l-4.2 7.2h-8.4zM882.5 564.9l4.2-7.2h8.4l4.2 7.2l-4.2 7.2h-8.4zM882.5 579.4l4.2-7.2h8.4l4.2 7.2l-4.2 7.2h-8.4zM882.5 593.9l4.2-7.2h8.4l4.2 7.2l-4.2 7.2h-8.4zM882.5 608.3l4.2-7.2h8.4l4.2 7.2l-4.2 7.2h-8.4zM882.5 622.8l4.2-7.2h8.4l4.2 7.2l-4.2 7.2h-8.4zM882.5 637.3l4.2-7.2h8.4l4.2 7.2l-4.2 7.2h-8.4zM882.5 651.8l4.2-7.2h8.4l4.2 7.2l-4.2 7.2h-8.4zM882.5 666.3l4.2-7.2h8.4l4.2 7.2l-4.2 7.2h-8.4zM882.5 680.8l4.2-7.2h8.4l4.2 7.2l-4.2 7.2h-8.4zM882.5 695.3l4.2-7.2h8.4l4.2 7.2l-4.2 7.2h-8.4zM882.5 709.8l4.2-7.2h8.4l4.2 7.2l-4.2 7.2h-8.4zM882.5 724.3l4.2-7.2h8.4l4.2 7.2l-4.2 7.2h-8.4zM882.5 738.7l4.2-7.2h8.4l4.2 7.2l-4.2 7.2h-8.4zM882.5 753.2l4.2-7.2h8.4l4.2 7.2l-4.2 7.2h-8.4zM882.5 767.7l4.2-7.2h8.4l4.2 7.2l-4.2 7.2h-8.4zM882.5 782.2l4.2-7.2h8.4l4.2 7.2l-4.2 7.2h-8.4zM882.5 796.7l4.2-7.2h8.4l4.2 7.2l-4.2 7.2h-8.4zM882.5 811.2l4.2-7.2h8.4l4.2 7.2l-4.2 7.2h-8.4zM895 238.9l4.2-7.2h8.4l4.2 7.2l-4.2 7.2h-8.4zM895 253.4l4.2-7.2h8.4l4.2 7.2l-4.2 7.2h-8.4zM895 267.9l4.2-7.2h8.4l4.2 7.2l-4.2 7.2h-8.4zM895 282.4l4.2-7.2h8.4l4.2 7.2l-4.2 7.2h-8.4zM895 296.8l4.2-7.2h8.4l4.2 7.2l-4.2 7.2h-8.4zM895 311.3l4.2-7.2h8.4l4.2 7.2l-4.2 7.2h-8.4zM895 325.8l4.2-7.2h8.4l4.2 7.2l-4.2 7.2h-8.4zM895 340.3l4.2-7.2h8.4l4.2 7.2l-4.2 7.2h-8.4zM895 354.8l4.2-7.2h8.4l4.2 7.2l-4.2 7.2h-8.4zM895 369.3l4.2-7.2h8.4l4.2 7.2l-4.2 7.2h-8.4zM895 383.8l4.2-7.2h8.4l4.2 7.2l-4.2 7.2h-8.4zM895 398.3l4.2-7.2h8.4l4.2 7.2l-4.2 7.2h-8.4zM895 412.8l4.2-7.2h8.4l4.2 7.2l-4.2 7.2h-8.4zM895 427.2l4.2-7.2h8.4l4.2 7.2l-4.2 7.2h-8.4zM895 441.7l4.2-7.2h8.4l4.2 7.2l-4.2 7.2h-8.4zM895 456.2l4.2-7.2h8.4l4.2 7.2l-4.2 7.2h-8.4zM895 470.7l4.2-7.2h8.4l4.2 7.2l-4.2 7.2h-8.4zM895 485.2l4.2-7.2h8.4l4.2 7.2l-4.2 7.2h-8.4zM895 499.7l4.2-7.2h8.4l4.2 7.2l-4.2 7.2h-8.4zM895 514.2l4.2-7.2h8.4l4.2 7.2l-4.2 7.2h-8.4zM895 528.7l4.2-7.2h8.4l4.2 7.2l-4.2 7.2h-8.4zM895 543.1l4.2-7.2h8.4l4.2 7.2l-4.2 7.2h-8.4zM895 557.6l4.2-7.2h8.4l4.2 7.2l-4.2 7.2h-8.4zM895 572.1l4.2-7.2h8.4l4.2 7.2l-4.2 7.2h-8.4zM895 586.6l4.2-7.2h8.4l4.2 7.2l-4.2 7.2h-8.4zM895 601.1l4.2-7.2h8.4l4.2 7.2l-4.2 7.2h-8.4zM895 615.6l4.2-7.2h8.4l4.2 7.2l-4.2 7.2h-8.4zM895 630.1l4.2-7.2h8.4l4.2 7.2l-4.2 7.2h-8.4zM895 644.6l4.2-7.2h8.4l4.2 7.2l-4.2 7.2h-8.4zM895 659.1l4.2-7.2h8.4l4.2 7.2l-4.2 7.2h-8.4zM895 673.5l4.2-7.2h8.4l4.2 7.2l-4.2 7.2h-8.4zM895 688l4.2-7.2h8.4l4.2 7.2l-4.2 7.2h-8.4zM895 702.5l4.2-7.2h8.4l4.2 7.2l-4.2 7.2h-8.4zM895 717l4.2-7.2h8.4l4.2 7.2l-4.2 7.2h-8.4zM895 731.5l4.2-7.2h8.4l4.2 7.2l-4.2 7.2h-8.4zM895 746l4.2-7.2h8.4l4.2 7.2l-4.2 7.2h-8.4zM895 760.5l4.2-7.2h8.4l4.2 7.2l-4.2 7.2h-8.4zM895 775l4.2-7.2h8.4l4.2 7.2l-4.2 7.2h-8.4zM895 789.5l4.2-7.2h8.4l4.2 7.2l-4.2 7.2h-8.4zM895 803.9l4.2-7.2h8.4l4.2 7.2l-4.2 7.2h-8.4zM895 818.4l4.2-7.2h8.4l4.2 7.2l-4.2 7.2h-8.4zM907.6 231.6l4.2-7.2h8.4l4.2 7.2l-4.2 7.2h-8.4zM907.6 246.1l4.2-7.2h8.4l4.2 7.2l-4.2 7.2h-8.4zM907.6 260.6l4.2-7.2h8.4l4.2 7.2l-4.2 7.2h-8.4zM907.6 275.1l4.2-7.2h8.4l4.2 7.2l-4.2 7.2h-8.4zM907.6 289.6l4.2-7.2h8.4l4.2 7.2l-4.2 7.2h-8.4zM907.6 304.1l4.2-7.2h8.4l4.2 7.2l-4.2 7.2h-8.4zM907.6 318.6l4.2-7.2h8.4l4.2 7.2l-4.2 7.2h-8.4zM907.6 333.1l4.2-7.2h8.4l4.2 7.2l-4.2 7.2h-8.4zM907.6 347.6l4.2-7.2h8.4l4.2 7.2l-4.2 7.2h-8.4zM907.6 362l4.2-7.2h8.4l4.2 7.2l-4.2 7.2h-8.4zM907.6 376.5l4.2-7.2h8.4l4.2 7.2l-4.2 7.2h-8.4zM907.6 391l4.2-7.2h8.4l4.2 7.2l-4.2 7.2h-8.4zM907.6 405.5l4.2-7.2h8.4l4.2 7.2l-4.2 7.2h-8.4zM907.6 420l4.2-7.2h8.4l4.2 7.2l-4.2 7.2h-8.4zM907.6 434.5l4.2-7.2h8.4l4.2 7.2l-4.2 7.2h-8.4zM907.6 449l4.2-7.2h8.4l4.2 7.2l-4.2 7.2h-8.4zM907.6 463.5l4.2-7.2h8.4l4.2 7.2l-4.2 7.2h-8.4zM907.6 478l4.2-7.2h8.4l4.2 7.2l-4.2 7.2h-8.4zM907.6 492.4l4.2-7.2h8.4l4.2 7.2l-4.2 7.2h-8.4zM907.6 506.9l4.2-7.2h8.4l4.2 7.2l-4.2 7.2h-8.4zM907.6 521.4l4.2-7.2h8.4l4.2 7.2l-4.2 7.2h-8.4zM907.6 535.9l4.2-7.2h8.4l4.2 7.2l-4.2 7.2h-8.4zM907.6 550.4l4.2-7.2h8.4l4.2 7.2l-4.2 7.2h-8.4zM907.6 564.9l4.2-7.2h8.4l4.2 7.2l-4.2 7.2h-8.4zM907.6 579.4l4.2-7.2h8.4l4.2 7.2l-4.2 7.2h-8.4zM907.6 593.9l4.2-7.2h8.4l4.2 7.2l-4.2 7.2h-8.4zM907.6 608.3l4.2-7.2h8.4l4.2 7.2l-4.2 7.2h-8.4zM907.6 622.8l4.2-7.2h8.4l4.2 7.2l-4.2 7.2h-8.4zM907.6 637.3l4.2-7.2h8.4l4.2 7.2l-4.2 7.2h-8.4zM907.6 651.8l4.2-7.2h8.4l4.2 7.2l-4.2 7.2h-8.4zM907.6 666.3l4.2-7.2h8.4l4.2 7.2l-4.2 7.2h-8.4zM907.6 680.8l4.2-7.2h8.4l4.2 7.2l-4.2 7.2h-8.4zM907.6 695.3l4.2-7.2h8.4l4.2 7.2l-4.2 7.2h-8.4zM907.6 709.8l4.2-7.2h8.4l4.2 7.2l-4.2 7.2h-8.4zM907.6 724.3l4.2-7.2h8.4l4.2 7.2l-4.2 7.2h-8.4zM907.6 738.7l4.2-7.2h8.4l4.2 7.2l-4.2 7.2h-8.4zM907.6 753.2l4.2-7.2h8.4l4.2 7.2l-4.2 7.2h-8.4zM907.6 767.7l4.2-7.2h8.4l4.2 7.2l-4.2 7.2h-8.4zM907.6 782.2l4.2-7.2h8.4l4.2 7.2l-4.2 7.2h-8.4zM907.6 796.7l4.2-7.2h8.4l4.2 7.2l-4.2 7.2h-8.4zM907.6 811.2l4.2-7.2h8.4l4.2 7.2l-4.2 7.2h-8.4zM920.1 238.9l4.2-7.2h8.4l4.2 7.2l-4.2 7.2h-8.4zM920.1 253.4l4.2-7.2h8.4l4.2 7.2l-4.2 7.2h-8.4zM920.1 267.9l4.2-7.2h8.4l4.2 7.2l-4.2 7.2h-8.4zM920.1 282.4l4.2-7.2h8.4l4.2 7.2l-4.2 7.2h-8.4zM920.1 296.8l4.2-7.2h8.4l4.2 7.2l-4.2 7.2h-8.4zM920.1 311.3l4.2-7.2h8.4l4.2 7.2l-4.2 7.2h-8.4zM920.1 325.8l4.2-7.2h8.4l4.2 7.2l-4.2 7.2h-8.4zM920.1 340.3l4.2-7.2h8.4l4.2 7.2l-4.2 7.2h-8.4zM920.1 354.8l4.2-7.2h8.4l4.2 7.2l-4.2 7.2h-8.4zM920.1 369.3l4.2-7.2h8.4l4.2 7.2l-4.2 7.2h-8.4zM920.1 383.8l4.2-7.2h8.4l4.2 7.2l-4.2 7.2h-8.4zM920.1 398.3l4.2-7.2h8.4l4.2 7.2l-4.2 7.2h-8.4zM920.1 412.8l4.2-7.2h8.4l4.2 7.2l-4.2 7.2h-8.4zM920.1 427.2l4.2-7.2h8.4l4.2 7.2l-4.2 7.2h-8.4zM920.1 441.7l4.2-7.2h8.4l4.2 7.2l-4.2 7.2h-8.4zM920.1 456.2l4.2-7.2h8.4l4.2 7.2l-4.2 7.2h-8.4zM920.1 470.7l4.2-7.2h8.4l4.2 7.2l-4.2 7.2h-8.4zM920.1 485.2l4.2-7.2h8.4l4.2 7.2l-4.2 7.2h-8.4zM920.1 499.7l4.2-7.2h8.4l4.2 7.2l-4.2 7.2h-8.4zM920.1 514.2l4.2-7.2h8.4l4.2 7.2l-4.2 7.2h-8.4zM920.1 528.7l4.2-7.2h8.4l4.2 7.2l-4.2 7.2h-8.4zM920.1 543.1l4.2-7.2h8.4l4.2 7.2l-4.2 7.2h-8.4zM920.1 557.6l4.2-7.2h8.4l4.2 7.2l-4.2 7.2h-8.4zM920.1 572.1l4.2-7.2h8.4l4.2 7.2l-4.2 7.2h-8.4zM920.1 586.6l4.2-7.2h8.4l4.2 7.2l-4.2 7.2h-8.4zM920.1 601.1l4.2-7.2h8.4l4.2 7.2l-4.2 7.2h-8.4zM920.1 615.6l4.2-7.2h8.4l4.2 7.2l-4.2 7.2h-8.4zM920.1 630.1l4.2-7.2h8.4l4.2 7.2l-4.2 7.2h-8.4zM920.1 644.6l4.2-7.2h8.4l4.2 7.2l-4.2 7.2h-8.4zM920.1 659.1l4.2-7.2h8.4l4.2 7.2l-4.2 7.2h-8.4zM920.1 673.5l4.2-7.2h8.4l4.2 7.2l-4.2 7.2h-8.4zM920.1 688l4.2-7.2h8.4l4.2 7.2l-4.2 7.2h-8.4zM920.1 702.5l4.2-7.2h8.4l4.2 7.2l-4.2 7.2h-8.4zM920.1 717l4.2-7.2h8.4l4.2 7.2l-4.2 7.2h-8.4zM920.1 731.5l4.2-7.2h8.4l4.2 7.2l-4.2 7.2h-8.4zM920.1 746l4.2-7.2h8.4l4.2 7.2l-4.2 7.2h-8.4zM920.1 760.5l4.2-7.2h8.4l4.2 7.2l-4.2 7.2h-8.4zM920.1 775l4.2-7.2h8.4l4.2 7.2l-4.2 7.2h-8.4zM920.1 789.5l4.2-7.2h8.4l4.2 7.2l-4.2 7.2h-8.4zM920.1 803.9l4.2-7.2h8.4l4.2 7.2l-4.2 7.2h-8.4zM920.1 818.4l4.2-7.2h8.4l4.2 7.2l-4.2 7.2h-8.4zM932.7 231.6l4.2-7.2h8.4l4.2 7.2l-4.2 7.2h-8.4zM932.7 246.1l4.2-7.2h8.4l4.2 7.2l-4.2 7.2h-8.4zM932.7 260.6l4.2-7.2h8.4l4.2 7.2l-4.2 7.2h-8.4zM932.7 275.1l4.2-7.2h8.4l4.2 7.2l-4.2 7.2h-8.4zM932.7 289.6l4.2-7.2h8.4l4.2 7.2l-4.2 7.2h-8.4zM932.7 304.1l4.2-7.2h8.4l4.2 7.2l-4.2 7.2h-8.4zM932.7 318.6l4.2-7.2h8.4l4.2 7.2l-4.2 7.2h-8.4zM932.7 333.1l4.2-7.2h8.4l4.2 7.2l-4.2 7.2h-8.4zM932.7 347.6l4.2-7.2h8.4l4.2 7.2l-4.2 7.2h-8.4zM932.7 362l4.2-7.2h8.4l4.2 7.2l-4.2 7.2h-8.4zM932.7 376.5l4.2-7.2h8.4l4.2 7.2l-4.2 7.2h-8.4zM932.7 391l4.2-7.2h8.4l4.2 7.2l-4.2 7.2h-8.4zM932.7 405.5l4.2-7.2h8.4l4.2 7.2l-4.2 7.2h-8.4zM932.7 420l4.2-7.2h8.4l4.2 7.2l-4.2 7.2h-8.4zM932.7 434.5l4.2-7.2h8.4l4.2 7.2l-4.2 7.2h-8.4zM932.7 449l4.2-7.2h8.4l4.2 7.2l-4.2 7.2h-8.4zM932.7 463.5l4.2-7.2h8.4l4.2 7.2l-4.2 7.2h-8.4zM932.7 478l4.2-7.2h8.4l4.2 7.2l-4.2 7.2h-8.4zM932.7 492.4l4.2-7.2h8.4l4.2 7.2l-4.2 7.2h-8.4zM932.7 506.9l4.2-7.2h8.4l4.2 7.2l-4.2 7.2h-8.4zM932.7 521.4l4.2-7.2h8.4l4.2 7.2l-4.2 7.2h-8.4zM932.7 535.9l4.2-7.2h8.4l4.2 7.2l-4.2 7.2h-8.4zM932.7 550.4l4.2-7.2h8.4l4.2 7.2l-4.2 7.2h-8.4zM932.7 564.9l4.2-7.2h8.4l4.2 7.2l-4.2 7.2h-8.4zM932.7 579.4l4.2-7.2h8.4l4.2 7.2l-4.2 7.2h-8.4zM932.7 593.9l4.2-7.2h8.4l4.2 7.2l-4.2 7.2h-8.4zM932.7 608.3l4.2-7.2h8.4l4.2 7.2l-4.2 7.2h-8.4zM932.7 622.8l4.2-7.2h8.4l4.2 7.2l-4.2 7.2h-8.4zM932.7 637.3l4.2-7.2h8.4l4.2 7.2l-4.2 7.2h-8.4zM932.7 651.8l4.2-7.2h8.4l4.2 7.2l-4.2 7.2h-8.4zM932.7 666.3l4.2-7.2h8.4l4.2 7.2l-4.2 7.2h-8.4zM932.7 680.8l4.2-7.2h8.4l4.2 7.2l-4.2 7.2h-8.4zM932.7 695.3l4.2-7.2h8.4l4.2 7.2l-4.2 7.2h-8.4zM932.7 709.8l4.2-7.2h8.4l4.2 7.2l-4.2 7.2h-8.4zM932.7 724.3l4.2-7.2h8.4l4.2 7.2l-4.2 7.2h-8.4zM932.7 738.7l4.2-7.2h8.4l4.2 7.2l-4.2 7.2h-8.4zM932.7 753.2l4.2-7.2h8.4l4.2 7.2l-4.2 7.2h-8.4zM932.7 767.7l4.2-7.2h8.4l4.2 7.2l-4.2 7.2h-8.4zM932.7 782.2l4.2-7.2h8.4l4.2 7.2l-4.2 7.2h-8.4zM932.7 796.7l4.2-7.2h8.4l4.2 7.2l-4.2 7.2h-8.4zM932.7 811.2l4.2-7.2h8.4l4.2 7.2l-4.2 7.2h-8.4zM945.2 238.9l4.2-7.2h8.4l4.2 7.2l-4.2 7.2h-8.4zM945.2 253.4l4.2-7.2h8.4l4.2 7.2l-4.2 7.2h-8.4zM945.2 267.9l4.2-7.2h8.4l4.2 7.2l-4.2 7.2h-8.4zM945.2 282.4l4.2-7.2h8.4l4.2 7.2l-4.2 7.2h-8.4zM945.2 296.8l4.2-7.2h8.4l4.2 7.2l-4.2 7.2h-8.4zM945.2 311.3l4.2-7.2h8.4l4.2 7.2l-4.2 7.2h-8.4zM945.2 325.8l4.2-7.2h8.4l4.2 7.2l-4.2 7.2h-8.4zM945.2 340.3l4.2-7.2h8.4l4.2 7.2l-4.2 7.2h-8.4zM945.2 354.8l4.2-7.2h8.4l4.2 7.2l-4.2 7.2h-8.4zM945.2 369.3l4.2-7.2h8.4l4.2 7.2l-4.2 7.2h-8.4zM945.2 383.8l4.2-7.2h8.4l4.2 7.2l-4.2 7.2h-8.4zM945.2 398.3l4.2-7.2h8.4l4.2 7.2l-4.2 7.2h-8.4zM945.2 412.8l4.2-7.2h8.4l4.2 7.2l-4.2 7.2h-8.4zM945.2 427.2l4.2-7.2h8.4l4.2 7.2l-4.2 7.2h-8.4zM945.2 441.7l4.2-7.2h8.4l4.2 7.2l-4.2 7.2h-8.4zM945.2 456.2l4.2-7.2h8.4l4.2 7.2l-4.2 7.2h-8.4zM945.2 470.7l4.2-7.2h8.4l4.2 7.2l-4.2 7.2h-8.4zM945.2 485.2l4.2-7.2h8.4l4.2 7.2l-4.2 7.2h-8.4zM945.2 499.7l4.2-7.2h8.4l4.2 7.2l-4.2 7.2h-8.4zM945.2 514.2l4.2-7.2h8.4l4.2 7.2l-4.2 7.2h-8.4zM945.2 528.7l4.2-7.2h8.4l4.2 7.2l-4.2 7.2h-8.4zM945.2 543.1l4.2-7.2h8.4l4.2 7.2l-4.2 7.2h-8.4zM945.2 557.6l4.2-7.2h8.4l4.2 7.2l-4.2 7.2h-8.4zM945.2 572.1l4.2-7.2h8.4l4.2 7.2l-4.2 7.2h-8.4zM945.2 586.6l4.2-7.2h8.4l4.2 7.2l-4.2 7.2h-8.4zM945.2 601.1l4.2-7.2h8.4l4.2 7.2l-4.2 7.2h-8.4zM945.2 615.6l4.2-7.2h8.4l4.2 7.2l-4.2 7.2h-8.4zM945.2 630.1l4.2-7.2h8.4l4.2 7.2l-4.2 7.2h-8.4zM945.2 644.6l4.2-7.2h8.4l4.2 7.2l-4.2 7.2h-8.4zM945.2 659.1l4.2-7.2h8.4l4.2 7.2l-4.2 7.2h-8.4zM945.2 673.5l4.2-7.2h8.4l4.2 7.2l-4.2 7.2h-8.4zM945.2 688l4.2-7.2h8.4l4.2 7.2l-4.2 7.2h-8.4zM945.2 702.5l4.2-7.2h8.4l4.2 7.2l-4.2 7.2h-8.4zM945.2 717l4.2-7.2h8.4l4.2 7.2l-4.2 7.2h-8.4zM945.2 731.5l4.2-7.2h8.4l4.2 7.2l-4.2 7.2h-8.4zM945.2 746l4.2-7.2h8.4l4.2 7.2l-4.2 7.2h-8.4zM945.2 760.5l4.2-7.2h8.4l4.2 7.2l-4.2 7.2h-8.4zM945.2 775l4.2-7.2h8.4l4.2 7.2l-4.2 7.2h-8.4zM945.2 789.5l4.2-7.2h8.4l4.2 7.2l-4.2 7.2h-8.4zM945.2 803.9l4.2-7.2h8.4l4.2 7.2l-4.2 7.2h-8.4zM945.2 818.4l4.2-7.2h8.4l4.2 7.2l-4.2 7.2h-8.4zM957.8 231.6l4.2-7.2h8.4l4.2 7.2l-4.2 7.2h-8.4zM957.8 246.1l4.2-7.2h8.4l4.2 7.2l-4.2 7.2h-8.4zM957.8 260.6l4.2-7.2h8.4l4.2 7.2l-4.2 7.2h-8.4zM957.8 275.1l4.2-7.2h8.4l4.2 7.2l-4.2 7.2h-8.4zM957.8 289.6l4.2-7.2h8.4l4.2 7.2l-4.2 7.2h-8.4zM957.8 304.1l4.2-7.2h8.4l4.2 7.2l-4.2 7.2h-8.4zM957.8 318.6l4.2-7.2h8.4l4.2 7.2l-4.2 7.2h-8.4zM957.8 333.1l4.2-7.2h8.4l4.2 7.2l-4.2 7.2h-8.4zM957.8 347.6l4.2-7.2h8.4l4.2 7.2l-4.2 7.2h-8.4zM957.8 362l4.2-7.2h8.4l4.2 7.2l-4.2 7.2h-8.4zM957.8 376.5l4.2-7.2h8.4l4.2 7.2l-4.2 7.2h-8.4zM957.8 391l4.2-7.2h8.4l4.2 7.2l-4.2 7.2h-8.4zM957.8 405.5l4.2-7.2h8.4l4.2 7.2l-4.2 7.2h-8.4zM957.8 420l4.2-7.2h8.4l4.2 7.2l-4.2 7.2h-8.4zM957.8 434.5l4.2-7.2h8.4l4.2 7.2l-4.2 7.2h-8.4zM957.8 449l4.2-7.2h8.4l4.2 7.2l-4.2 7.2h-8.4zM957.8 463.5l4.2-7.2h8.4l4.2 7.2l-4.2 7.2h-8.4zM957.8 478l4.2-7.2h8.4l4.2 7.2l-4.2 7.2h-8.4zM957.8 492.4l4.2-7.2h8.4l4.2 7.2l-4.2 7.2h-8.4zM957.8 506.9l4.2-7.2h8.4l4.2 7.2l-4.2 7.2h-8.4zM957.8 521.4l4.2-7.2h8.4l4.2 7.2l-4.2 7.2h-8.4zM957.8 535.9l4.2-7.2h8.4l4.2 7.2l-4.2 7.2h-8.4zM957.8 550.4l4.2-7.2h8.4l4.2 7.2l-4.2 7.2h-8.4zM957.8 564.9l4.2-7.2h8.4l4.2 7.2l-4.2 7.2h-8.4zM957.8 579.4l4.2-7.2h8.4l4.2 7.2l-4.2 7.2h-8.4zM957.8 593.9l4.2-7.2h8.4l4.2 7.2l-4.2 7.2h-8.4zM957.8 608.3l4.2-7.2h8.4l4.2 7.2l-4.2 7.2h-8.4zM957.8 622.8l4.2-7.2h8.4l4.2 7.2l-4.2 7.2h-8.4zM957.8 637.3l4.2-7.2h8.4l4.2 7.2l-4.2 7.2h-8.4zM957.8 651.8l4.2-7.2h8.4l4.2 7.2l-4.2 7.2h-8.4zM957.8 666.3l4.2-7.2h8.4l4.2 7.2l-4.2 7.2h-8.4zM957.8 680.8l4.2-7.2h8.4l4.2 7.2l-4.2 7.2h-8.4zM957.8 695.3l4.2-7.2h8.4l4.2 7.2l-4.2 7.2h-8.4zM957.8 709.8l4.2-7.2h8.4l4.2 7.2l-4.2 7.2h-8.4zM957.8 724.3l4.2-7.2h8.4l4.2 7.2l-4.2 7.2h-8.4zM957.8 738.7l4.2-7.2h8.4l4.2 7.2l-4.2 7.2h-8.4zM957.8 753.2l4.2-7.2h8.4l4.2 7.2l-4.2 7.2h-8.4zM957.8 767.7l4.2-7.2h8.4l4.2 7.2l-4.2 7.2h-8.4zM957.8 782.2l4.2-7.2h8.4l4.2 7.2l-4.2 7.2h-8.4zM957.8 796.7l4.2-7.2h8.4l4.2 7.2l-4.2 7.2h-8.4zM957.8 811.2l4.2-7.2h8.4l4.2 7.2l-4.2 7.2h-8.4zM970.3 238.9l4.2-7.2h8.4l4.2 7.2l-4.2 7.2h-8.4zM970.3 253.4l4.2-7.2h8.4l4.2 7.2l-4.2 7.2h-8.4zM970.3 267.9l4.2-7.2h8.4l4.2 7.2l-4.2 7.2h-8.4zM970.3 282.4l4.2-7.2h8.4l4.2 7.2l-4.2 7.2h-8.4zM970.3 296.8l4.2-7.2h8.4l4.2 7.2l-4.2 7.2h-8.4zM970.3 311.3l4.2-7.2h8.4l4.2 7.2l-4.2 7.2h-8.4zM970.3 325.8l4.2-7.2h8.4l4.2 7.2l-4.2 7.2h-8.4zM970.3 340.3l4.2-7.2h8.4l4.2 7.2l-4.2 7.2h-8.4zM970.3 354.8l4.2-7.2h8.4l4.2 7.2l-4.2 7.2h-8.4zM970.3 369.3l4.2-7.2h8.4l4.2 7.2l-4.2 7.2h-8.4zM970.3 383.8l4.2-7.2h8.4l4.2 7.2l-4.2 7.2h-8.4zM970.3 398.3l4.2-7.2h8.4l4.2 7.2l-4.2 7.2h-8.4zM970.3 412.8l4.2-7.2h8.4l4.2 7.2l-4.2 7.2h-8.4zM970.3 427.2l4.2-7.2h8.4l4.2 7.2l-4.2 7.2h-8.4zM970.3 441.7l4.2-7.2h8.4l4.2 7.2l-4.2 7.2h-8.4zM970.3 456.2l4.2-7.2h8.4l4.2 7.2l-4.2 7.2h-8.4zM970.3 470.7l4.2-7.2h8.4l4.2 7.2l-4.2 7.2h-8.4zM970.3 485.2l4.2-7.2h8.4l4.2 7.2l-4.2 7.2h-8.4zM970.3 499.7l4.2-7.2h8.4l4.2 7.2l-4.2 7.2h-8.4zM970.3 514.2l4.2-7.2h8.4l4.2 7.2l-4.2 7.2h-8.4zM970.3 528.7l4.2-7.2h8.4l4.2 7.2l-4.2 7.2h-8.4zM970.3 543.1l4.2-7.2h8.4l4.2 7.2l-4.2 7.2h-8.4zM970.3 557.6l4.2-7.2h8.4l4.2 7.2l-4.2 7.2h-8.4zM970.3 572.1l4.2-7.2h8.4l4.2 7.2l-4.2 7.2h-8.4zM970.3 586.6l4.2-7.2h8.4l4.2 7.2l-4.2 7.2h-8.4zM970.3 601.1l4.2-7.2h8.4l4.2 7.2l-4.2 7.2h-8.4zM970.3 615.6l4.2-7.2h8.4l4.2 7.2l-4.2 7.2h-8.4zM970.3 630.1l4.2-7.2h8.4l4.2 7.2l-4.2 7.2h-8.4zM970.3 644.6l4.2-7.2h8.4l4.2 7.2l-4.2 7.2h-8.4zM970.3 659.1l4.2-7.2h8.4l4.2 7.2l-4.2 7.2h-8.4zM970.3 673.5l4.2-7.2h8.4l4.2 7.2l-4.2 7.2h-8.4zM970.3 688l4.2-7.2h8.4l4.2 7.2l-4.2 7.2h-8.4zM970.3 702.5l4.2-7.2h8.4l4.2 7.2l-4.2 7.2h-8.4zM970.3 717l4.2-7.2h8.4l4.2 7.2l-4.2 7.2h-8.4zM970.3 731.5l4.2-7.2h8.4l4.2 7.2l-4.2 7.2h-8.4zM970.3 746l4.2-7.2h8.4l4.2 7.2l-4.2 7.2h-8.4zM970.3 760.5l4.2-7.2h8.4l4.2 7.2l-4.2 7.2h-8.4zM970.3 775l4.2-7.2h8.4l4.2 7.2l-4.2 7.2h-8.4zM970.3 789.5l4.2-7.2h8.4l4.2 7.2l-4.2 7.2h-8.4zM970.3 803.9l4.2-7.2h8.4l4.2 7.2l-4.2 7.2h-8.4zM970.3 818.4l4.2-7.2h8.4l4.2 7.2l-4.2 7.2h-8.4zM982.9 231.6l4.2-7.2h8.4l4.2 7.2l-4.2 7.2h-8.4zM982.9 246.1l4.2-7.2h8.4l4.2 7.2l-4.2 7.2h-8.4zM982.9 260.6l4.2-7.2h8.4l4.2 7.2l-4.2 7.2h-8.4zM982.9 275.1l4.2-7.2h8.4l4.2 7.2l-4.2 7.2h-8.4zM982.9 289.6l4.2-7.2h8.4l4.2 7.2l-4.2 7.2h-8.4zM982.9 304.1l4.2-7.2h8.4l4.2 7.2l-4.2 7.2h-8.4zM982.9 318.6l4.2-7.2h8.4l4.2 7.2l-4.2 7.2h-8.4zM982.9 333.1l4.2-7.2h8.4l4.2 7.2l-4.2 7.2h-8.4zM982.9 347.6l4.2-7.2h8.4l4.2 7.2l-4.2 7.2h-8.4zM982.9 362l4.2-7.2h8.4l4.2 7.2l-4.2 7.2h-8.4zM982.9 376.5l4.2-7.2h8.4l4.2 7.2l-4.2 7.2h-8.4zM982.9 391l4.2-7.2h8.4l4.2 7.2l-4.2 7.2h-8.4zM982.9 405.5l4.2-7.2h8.4l4.2 7.2l-4.2 7.2h-8.4zM982.9 420l4.2-7.2h8.4l4.2 7.2l-4.2 7.2h-8.4zM982.9 434.5l4.2-7.2h8.4l4.2 7.2l-4.2 7.2h-8.4zM982.9 449l4.2-7.2h8.4l4.2 7.2l-4.2 7.2h-8.4zM982.9 463.5l4.2-7.2h8.4l4.2 7.2l-4.2 7.2h-8.4zM982.9 478l4.2-7.2h8.4l4.2 7.2l-4.2 7.2h-8.4zM982.9 492.4l4.2-7.2h8.4l4.2 7.2l-4.2 7.2h-8.4zM982.9 506.9l4.2-7.2h8.4l4.2 7.2l-4.2 7.2h-8.4zM982.9 521.4l4.2-7.2h8.4l4.2 7.2l-4.2 7.2h-8.4zM982.9 535.9l4.2-7.2h8.4l4.2 7.2l-4.2 7.2h-8.4zM982.9 550.4l4.2-7.2h8.4l4.2 7.2l-4.2 7.2h-8.4zM982.9 564.9l4.2-7.2h8.4l4.2 7.2l-4.2 7.2h-8.4zM982.9 579.4l4.2-7.2h8.4l4.2 7.2l-4.2 7.2h-8.4zM982.9 593.9l4.2-7.2h8.4l4.2 7.2l-4.2 7.2h-8.4zM982.9 608.3l4.2-7.2h8.4l4.2 7.2l-4.2 7.2h-8.4zM982.9 622.8l4.2-7.2h8.4l4.2 7.2l-4.2 7.2h-8.4zM982.9 637.3l4.2-7.2h8.4l4.2 7.2l-4.2 7.2h-8.4zM982.9 651.8l4.2-7.2h8.4l4.2 7.2l-4.2 7.2h-8.4zM982.9 666.3l4.2-7.2h8.4l4.2 7.2l-4.2 7.2h-8.4zM982.9 680.8l4.2-7.2h8.4l4.2 7.2l-4.2 7.2h-8.4zM982.9 695.3l4.2-7.2h8.4l4.2 7.2l-4.2 7.2h-8.4zM982.9 709.8l4.2-7.2h8.4l4.2 7.2l-4.2 7.2h-8.4zM982.9 724.3l4.2-7.2h8.4l4.2 7.2l-4.2 7.2h-8.4zM982.9 738.7l4.2-7.2h8.4l4.2 7.2l-4.2 7.2h-8.4zM982.9 753.2l4.2-7.2h8.4l4.2 7.2l-4.2 7.2h-8.4zM982.9 767.7l4.2-7.2h8.4l4.2 7.2l-4.2 7.2h-8.4zM982.9 782.2l4.2-7.2h8.4l4.2 7.2l-4.2 7.2h-8.4zM982.9 796.7l4.2-7.2h8.4l4.2 7.2l-4.2 7.2h-8.4zM982.9 811.2l4.2-7.2h8.4l4.2 7.2l-4.2 7.2h-8.4zM995.4 238.9l4.2-7.2h8.4l4.2 7.2l-4.2 7.2h-8.4zM995.4 253.4l4.2-7.2h8.4l4.2 7.2l-4.2 7.2h-8.4zM995.4 267.9l4.2-7.2h8.4l4.2 7.2l-4.2 7.2h-8.4zM995.4 282.4l4.2-7.2h8.4l4.2 7.2l-4.2 7.2h-8.4zM995.4 296.8l4.2-7.2h8.4l4.2 7.2l-4.2 7.2h-8.4zM995.4 311.3l4.2-7.2h8.4l4.2 7.2l-4.2 7.2h-8.4zM995.4 325.8l4.2-7.2h8.4l4.2 7.2l-4.2 7.2h-8.4zM995.4 340.3l4.2-7.2h8.4l4.2 7.2l-4.2 7.2h-8.4zM995.4 354.8l4.2-7.2h8.4l4.2 7.2l-4.2 7.2h-8.4zM995.4 369.3l4.2-7.2h8.4l4.2 7.2l-4.2 7.2h-8.4zM995.4 383.8l4.2-7.2h8.4l4.2 7.2l-4.2 7.2h-8.4zM995.4 398.3l4.2-7.2h8.4l4.2 7.2l-4.2 7.2h-8.4zM995.4 412.8l4.2-7.2h8.4l4.2 7.2l-4.2 7.2h-8.4zM995.4 427.2l4.2-7.2h8.4l4.2 7.2l-4.2 7.2h-8.4zM995.4 441.7l4.2-7.2h8.4l4.2 7.2l-4.2 7.2h-8.4zM995.4 456.2l4.2-7.2h8.4l4.2 7.2l-4.2 7.2h-8.4zM995.4 470.7l4.2-7.2h8.4l4.2 7.2l-4.2 7.2h-8.4zM995.4 485.2l4.2-7.2h8.4l4.2 7.2l-4.2 7.2h-8.4zM995.4 499.7l4.2-7.2h8.4l4.2 7.2l-4.2 7.2h-8.4zM995.4 514.2l4.2-7.2h8.4l4.2 7.2l-4.2 7.2h-8.4zM995.4 528.7l4.2-7.2h8.4l4.2 7.2l-4.2 7.2h-8.4zM995.4 543.1l4.2-7.2h8.4l4.2 7.2l-4.2 7.2h-8.4zM995.4 557.6l4.2-7.2h8.4l4.2 7.2l-4.2 7.2h-8.4zM995.4 572.1l4.2-7.2h8.4l4.2 7.2l-4.2 7.2h-8.4zM995.4 586.6l4.2-7.2h8.4l4.2 7.2l-4.2 7.2h-8.4zM995.4 601.1l4.2-7.2h8.4l4.2 7.2l-4.2 7.2h-8.4zM995.4 615.6l4.2-7.2h8.4l4.2 7.2l-4.2 7.2h-8.4zM995.4 630.1l4.2-7.2h8.4l4.2 7.2l-4.2 7.2h-8.4zM995.4 644.6l4.2-7.2h8.4l4.2 7.2l-4.2 7.2h-8.4zM995.4 659.1l4.2-7.2h8.4l4.2 7.2l-4.2 7.2h-8.4zM995.4 673.5l4.2-7.2h8.4l4.2 7.2l-4.2 7.2h-8.4zM995.4 688l4.2-7.2h8.4l4.2 7.2l-4.2 7.2h-8.4zM995.4 702.5l4.2-7.2h8.4l4.2 7.2l-4.2 7.2h-8.4zM995.4 717l4.2-7.2h8.4l4.2 7.2l-4.2 7.2h-8.4zM995.4 731.5l4.2-7.2h8.4l4.2 7.2l-4.2 7.2h-8.4zM995.4 746l4.2-7.2h8.4l4.2 7.2l-4.2 7.2h-8.4zM995.4 760.5l4.2-7.2h8.4l4.2 7.2l-4.2 7.2h-8.4zM995.4 775l4.2-7.2h8.4l4.2 7.2l-4.2 7.2h-8.4zM995.4 789.5l4.2-7.2h8.4l4.2 7.2l-4.2 7.2h-8.4zM995.4 803.9l4.2-7.2h8.4l4.2 7.2l-4.2 7.2h-8.4zM995.4 818.4l4.2-7.2h8.4l4.2 7.2l-4.2 7.2h-8.4zM1008 231.6l4.2-7.2h8.4l4.2 7.2l-4.2 7.2h-8.4zM1008 246.1l4.2-7.2h8.4l4.2 7.2l-4.2 7.2h-8.4zM1008 260.6l4.2-7.2h8.4l4.2 7.2l-4.2 7.2h-8.4zM1008 275.1l4.2-7.2h8.4l4.2 7.2l-4.2 7.2h-8.4zM1008 289.6l4.2-7.2h8.4l4.2 7.2l-4.2 7.2h-8.4zM1008 304.1l4.2-7.2h8.4l4.2 7.2l-4.2 7.2h-8.4zM1008 318.6l4.2-7.2h8.4l4.2 7.2l-4.2 7.2h-8.4zM1008 333.1l4.2-7.2h8.4l4.2 7.2l-4.2 7.2h-8.4zM1008 347.6l4.2-7.2h8.4l4.2 7.2l-4.2 7.2h-8.4zM1008 362l4.2-7.2h8.4l4.2 7.2l-4.2 7.2h-8.4zM1008 376.5l4.2-7.2h8.4l4.2 7.2l-4.2 7.2h-8.4zM1008 391l4.2-7.2h8.4l4.2 7.2l-4.2 7.2h-8.4zM1008 405.5l4.2-7.2h8.4l4.2 7.2l-4.2 7.2h-8.4zM1008 420l4.2-7.2h8.4l4.2 7.2l-4.2 7.2h-8.4zM1008 434.5l4.2-7.2h8.4l4.2 7.2l-4.2 7.2h-8.4zM1008 449l4.2-7.2h8.4l4.2 7.2l-4.2 7.2h-8.4zM1008 463.5l4.2-7.2h8.4l4.2 7.2l-4.2 7.2h-8.4zM1008 478l4.2-7.2h8.4l4.2 7.2l-4.2 7.2h-8.4zM1008 492.4l4.2-7.2h8.4l4.2 7.2l-4.2 7.2h-8.4zM1008 506.9l4.2-7.2h8.4l4.2 7.2l-4.2 7.2h-8.4zM1008 521.4l4.2-7.2h8.4l4.2 7.2l-4.2 7.2h-8.4zM1008 535.9l4.2-7.2h8.4l4.2 7.2l-4.2 7.2h-8.4zM1008 550.4l4.2-7.2h8.4l4.2 7.2l-4.2 7.2h-8.4zM1008 564.9l4.2-7.2h8.4l4.2 7.2l-4.2 7.2h-8.4zM1008 579.4l4.2-7.2h8.4l4.2 7.2l-4.2 7.2h-8.4zM1008 593.9l4.2-7.2h8.4l4.2 7.2l-4.2 7.2h-8.4zM1008 608.3l4.2-7.2h8.4l4.2 7.2l-4.2 7.2h-8.4zM1008 622.8l4.2-7.2h8.4l4.2 7.2l-4.2 7.2h-8.4zM1008 637.3l4.2-7.2h8.4l4.2 7.2l-4.2 7.2h-8.4zM1008 651.8l4.2-7.2h8.4l4.2 7.2l-4.2 7.2h-8.4zM1008 666.3l4.2-7.2h8.4l4.2 7.2l-4.2 7.2h-8.4zM1008 680.8l4.2-7.2h8.4l4.2 7.2l-4.2 7.2h-8.4zM1008 695.3l4.2-7.2h8.4l4.2 7.2l-4.2 7.2h-8.4zM1008 709.8l4.2-7.2h8.4l4.2 7.2l-4.2 7.2h-8.4zM1008 724.3l4.2-7.2h8.4l4.2 7.2l-4.2 7.2h-8.4zM1008 738.7l4.2-7.2h8.4l4.2 7.2l-4.2 7.2h-8.4zM1008 753.2l4.2-7.2h8.4l4.2 7.2l-4.2 7.2h-8.4zM1008 767.7l4.2-7.2h8.4l4.2 7.2l-4.2 7.2h-8.4zM1008 782.2l4.2-7.2h8.4l4.2 7.2l-4.2 7.2h-8.4zM1008 796.7l4.2-7.2h8.4l4.2 7.2l-4.2 7.2h-8.4zM1008 811.2l4.2-7.2h8.4l4.2 7.2l-4.2 7.2h-8.4zM1020.5 238.9l4.2-7.2h8.4l4.2 7.2l-4.2 7.2h-8.4zM1020.5 253.4l4.2-7.2h8.4l4.2 7.2l-4.2 7.2h-8.4zM1020.5 267.9l4.2-7.2h8.4l4.2 7.2l-4.2 7.2h-8.4zM1020.5 282.4l4.2-7.2h8.4l4.2 7.2l-4.2 7.2h-8.4zM1020.5 296.8l4.2-7.2h8.4l4.2 7.2l-4.2 7.2h-8.4zM1020.5 311.3l4.2-7.2h8.4l4.2 7.2l-4.2 7.2h-8.4zM1020.5 325.8l4.2-7.2h8.4l4.2 7.2l-4.2 7.2h-8.4zM1020.5 340.3l4.2-7.2h8.4l4.2 7.2l-4.2 7.2h-8.4zM1020.5 354.8l4.2-7.2h8.4l4.2 7.2l-4.2 7.2h-8.4zM1020.5 369.3l4.2-7.2h8.4l4.2 7.2l-4.2 7.2h-8.4zM1020.5 383.8l4.2-7.2h8.4l4.2 7.2l-4.2 7.2h-8.4zM1020.5 398.3l4.2-7.2h8.4l4.2 7.2l-4.2 7.2h-8.4zM1020.5 412.8l4.2-7.2h8.4l4.2 7.2l-4.2 7.2h-8.4zM1020.5 427.2l4.2-7.2h8.4l4.2 7.2l-4.2 7.2h-8.4zM1020.5 441.7l4.2-7.2h8.4l4.2 7.2l-4.2 7.2h-8.4zM1020.5 456.2l4.2-7.2h8.4l4.2 7.2l-4.2 7.2h-8.4zM1020.5 470.7l4.2-7.2h8.4l4.2 7.2l-4.2 7.2h-8.4zM1020.5 485.2l4.2-7.2h8.4l4.2 7.2l-4.2 7.2h-8.4zM1020.5 499.7l4.2-7.2h8.4l4.2 7.2l-4.2 7.2h-8.4zM1020.5 514.2l4.2-7.2h8.4l4.2 7.2l-4.2 7.2h-8.4zM1020.5 528.7l4.2-7.2h8.4l4.2 7.2l-4.2 7.2h-8.4zM1020.5 543.1l4.2-7.2h8.4l4.2 7.2l-4.2 7.2h-8.4zM1020.5 557.6l4.2-7.2h8.4l4.2 7.2l-4.2 7.2h-8.4zM1020.5 572.1l4.2-7.2h8.4l4.2 7.2l-4.2 7.2h-8.4zM1020.5 586.6l4.2-7.2h8.4l4.2 7.2l-4.2 7.2h-8.4zM1020.5 601.1l4.2-7.2h8.4l4.2 7.2l-4.2 7.2h-8.4zM1020.5 615.6l4.2-7.2h8.4l4.2 7.2l-4.2 7.2h-8.4zM1020.5 630.1l4.2-7.2h8.4l4.2 7.2l-4.2 7.2h-8.4zM1020.5 644.6l4.2-7.2h8.4l4.2 7.2l-4.2 7.2h-8.4zM1020.5 659.1l4.2-7.2h8.4l4.2 7.2l-4.2 7.2h-8.4zM1020.5 673.5l4.2-7.2h8.4l4.2 7.2l-4.2 7.2h-8.4zM1020.5 688l4.2-7.2h8.4l4.2 7.2l-4.2 7.2h-8.4zM1020.5 702.5l4.2-7.2h8.4l4.2 7.2l-4.2 7.2h-8.4zM1020.5 717l4.2-7.2h8.4l4.2 7.2l-4.2 7.2h-8.4zM1020.5 731.5l4.2-7.2h8.4l4.2 7.2l-4.2 7.2h-8.4zM1020.5 746l4.2-7.2h8.4l4.2 7.2l-4.2 7.2h-8.4zM1020.5 760.5l4.2-7.2h8.4l4.2 7.2l-4.2 7.2h-8.4zM1020.5 775l4.2-7.2h8.4l4.2 7.2l-4.2 7.2h-8.4zM1020.5 789.5l4.2-7.2h8.4l4.2 7.2l-4.2 7.2h-8.4zM1020.5 803.9l4.2-7.2h8.4l4.2 7.2l-4.2 7.2h-8.4zM1020.5 818.4l4.2-7.2h8.4l4.2 7.2l-4.2 7.2h-8.4zM1033 231.6l4.2-7.2h8.4l4.2 7.2l-4.2 7.2h-8.4zM1033 246.1l4.2-7.2h8.4l4.2 7.2l-4.2 7.2h-8.4zM1033 260.6l4.2-7.2h8.4l4.2 7.2l-4.2 7.2h-8.4zM1033 275.1l4.2-7.2h8.4l4.2 7.2l-4.2 7.2h-8.4zM1033 289.6l4.2-7.2h8.4l4.2 7.2l-4.2 7.2h-8.4zM1033 304.1l4.2-7.2h8.4l4.2 7.2l-4.2 7.2h-8.4zM1033 318.6l4.2-7.2h8.4l4.2 7.2l-4.2 7.2h-8.4zM1033 333.1l4.2-7.2h8.4l4.2 7.2l-4.2 7.2h-8.4zM1033 347.6l4.2-7.2h8.4l4.2 7.2l-4.2 7.2h-8.4zM1033 362l4.2-7.2h8.4l4.2 7.2l-4.2 7.2h-8.4zM1033 376.5l4.2-7.2h8.4l4.2 7.2l-4.2 7.2h-8.4zM1033 391l4.2-7.2h8.4l4.2 7.2l-4.2 7.2h-8.4zM1033 405.5l4.2-7.2h8.4l4.2 7.2l-4.2 7.2h-8.4zM1033 420l4.2-7.2h8.4l4.2 7.2l-4.2 7.2h-8.4zM1033 434.5l4.2-7.2h8.4l4.2 7.2l-4.2 7.2h-8.4zM1033 449l4.2-7.2h8.4l4.2 7.2l-4.2 7.2h-8.4zM1033 463.5l4.2-7.2h8.4l4.2 7.2l-4.2 7.2h-8.4zM1033 478l4.2-7.2h8.4l4.2 7.2l-4.2 7.2h-8.4zM1033 492.4l4.2-7.2h8.4l4.2 7.2l-4.2 7.2h-8.4zM1033 506.9l4.2-7.2h8.4l4.2 7.2l-4.2 7.2h-8.4zM1033 521.4l4.2-7.2h8.4l4.2 7.2l-4.2 7.2h-8.4zM1033 535.9l4.2-7.2h8.4l4.2 7.2l-4.2 7.2h-8.4zM1033 550.4l4.2-7.2h8.4l4.2 7.2l-4.2 7.2h-8.4zM1033 564.9l4.2-7.2h8.4l4.2 7.2l-4.2 7.2h-8.4zM1033 579.4l4.2-7.2h8.4l4.2 7.2l-4.2 7.2h-8.4zM1033 593.9l4.2-7.2h8.4l4.2 7.2l-4.2 7.2h-8.4zM1033 608.3l4.2-7.2h8.4l4.2 7.2l-4.2 7.2h-8.4zM1033 622.8l4.2-7.2h8.4l4.2 7.2l-4.2 7.2h-8.4zM1033 637.3l4.2-7.2h8.4l4.2 7.2l-4.2 7.2h-8.4zM1033 651.8l4.2-7.2h8.4l4.2 7.2l-4.2 7.2h-8.4zM1033 666.3l4.2-7.2h8.4l4.2 7.2l-4.2 7.2h-8.4zM1033 680.8l4.2-7.2h8.4l4.2 7.2l-4.2 7.2h-8.4zM1033 695.3l4.2-7.2h8.4l4.2 7.2l-4.2 7.2h-8.4zM1033 709.8l4.2-7.2h8.4l4.2 7.2l-4.2 7.2h-8.4zM1033 724.3l4.2-7.2h8.4l4.2 7.2l-4.2 7.2h-8.4zM1033 738.7l4.2-7.2h8.4l4.2 7.2l-4.2 7.2h-8.4zM1033 753.2l4.2-7.2h8.4l4.2 7.2l-4.2 7.2h-8.4zM1033 767.7l4.2-7.2h8.4l4.2 7.2l-4.2 7.2h-8.4zM1033 782.2l4.2-7.2h8.4l4.2 7.2l-4.2 7.2h-8.4zM1033 796.7l4.2-7.2h8.4l4.2 7.2l-4.2 7.2h-8.4zM1033 811.2l4.2-7.2h8.4l4.2 7.2l-4.2 7.2h-8.4zM1045.6 238.9l4.2-7.2h8.4l4.2 7.2l-4.2 7.2h-8.4zM1045.6 253.4l4.2-7.2h8.4l4.2 7.2l-4.2 7.2h-8.4zM1045.6 267.9l4.2-7.2h8.4l4.2 7.2l-4.2 7.2h-8.4zM1045.6 282.4l4.2-7.2h8.4l4.2 7.2l-4.2 7.2h-8.4zM1045.6 296.8l4.2-7.2h8.4l4.2 7.2l-4.2 7.2h-8.4zM1045.6 311.3l4.2-7.2h8.4l4.2 7.2l-4.2 7.2h-8.4zM1045.6 325.8l4.2-7.2h8.4l4.2 7.2l-4.2 7.2h-8.4zM1045.6 340.3l4.2-7.2h8.4l4.2 7.2l-4.2 7.2h-8.4zM1045.6 354.8l4.2-7.2h8.4l4.2 7.2l-4.2 7.2h-8.4zM1045.6 369.3l4.2-7.2h8.4l4.2 7.2l-4.2 7.2h-8.4zM1045.6 383.8l4.2-7.2h8.4l4.2 7.2l-4.2 7.2h-8.4zM1045.6 398.3l4.2-7.2h8.4l4.2 7.2l-4.2 7.2h-8.4zM1045.6 412.8l4.2-7.2h8.4l4.2 7.2l-4.2 7.2h-8.4zM1045.6 427.2l4.2-7.2h8.4l4.2 7.2l-4.2 7.2h-8.4zM1045.6 441.7l4.2-7.2h8.4l4.2 7.2l-4.2 7.2h-8.4zM1045.6 456.2l4.2-7.2h8.4l4.2 7.2l-4.2 7.2h-8.4zM1045.6 470.7l4.2-7.2h8.4l4.2 7.2l-4.2 7.2h-8.4zM1045.6 485.2l4.2-7.2h8.4l4.2 7.2l-4.2 7.2h-8.4zM1045.6 499.7l4.2-7.2h8.4l4.2 7.2l-4.2 7.2h-8.4zM1045.6 514.2l4.2-7.2h8.4l4.2 7.2l-4.2 7.2h-8.4zM1045.6 528.7l4.2-7.2h8.4l4.2 7.2l-4.2 7.2h-8.4zM1045.6 543.1l4.2-7.2h8.4l4.2 7.2l-4.2 7.2h-8.4zM1045.6 557.6l4.2-7.2h8.4l4.2 7.2l-4.2 7.2h-8.4zM1045.6 572.1l4.2-7.2h8.4l4.2 7.2l-4.2 7.2h-8.4zM1045.6 586.6l4.2-7.2h8.4l4.2 7.2l-4.2 7.2h-8.4zM1045.6 601.1l4.2-7.2h8.4l4.2 7.2l-4.2 7.2h-8.4zM1045.6 615.6l4.2-7.2h8.4l4.2 7.2l-4.2 7.2h-8.4zM1045.6 630.1l4.2-7.2h8.4l4.2 7.2l-4.2 7.2h-8.4zM1045.6 644.6l4.2-7.2h8.4l4.2 7.2l-4.2 7.2h-8.4zM1045.6 659.1l4.2-7.2h8.4l4.2 7.2l-4.2 7.2h-8.4zM1045.6 673.5l4.2-7.2h8.4l4.2 7.2l-4.2 7.2h-8.4zM1045.6 688l4.2-7.2h8.4l4.2 7.2l-4.2 7.2h-8.4zM1045.6 702.5l4.2-7.2h8.4l4.2 7.2l-4.2 7.2h-8.4zM1045.6 717l4.2-7.2h8.4l4.2 7.2l-4.2 7.2h-8.4zM1045.6 731.5l4.2-7.2h8.4l4.2 7.2l-4.2 7.2h-8.4zM1045.6 746l4.2-7.2h8.4l4.2 7.2l-4.2 7.2h-8.4zM1045.6 760.5l4.2-7.2h8.4l4.2 7.2l-4.2 7.2h-8.4zM1045.6 775l4.2-7.2h8.4l4.2 7.2l-4.2 7.2h-8.4zM1045.6 789.5l4.2-7.2h8.4l4.2 7.2l-4.2 7.2h-8.4zM1045.6 803.9l4.2-7.2h8.4l4.2 7.2l-4.2 7.2h-8.4zM1045.6 818.4l4.2-7.2h8.4l4.2 7.2l-4.2 7.2h-8.4zM1058.1 231.6l4.2-7.2h8.4l4.2 7.2l-4.2 7.2h-8.4zM1058.1 246.1l4.2-7.2h8.4l4.2 7.2l-4.2 7.2h-8.4zM1058.1 260.6l4.2-7.2h8.4l4.2 7.2l-4.2 7.2h-8.4zM1058.1 275.1l4.2-7.2h8.4l4.2 7.2l-4.2 7.2h-8.4zM1058.1 289.6l4.2-7.2h8.4l4.2 7.2l-4.2 7.2h-8.4zM1058.1 304.1l4.2-7.2h8.4l4.2 7.2l-4.2 7.2h-8.4zM1058.1 318.6l4.2-7.2h8.4l4.2 7.2l-4.2 7.2h-8.4zM1058.1 333.1l4.2-7.2h8.4l4.2 7.2l-4.2 7.2h-8.4zM1058.1 347.6l4.2-7.2h8.4l4.2 7.2l-4.2 7.2h-8.4zM1058.1 362l4.2-7.2h8.4l4.2 7.2l-4.2 7.2h-8.4zM1058.1 376.5l4.2-7.2h8.4l4.2 7.2l-4.2 7.2h-8.4zM1058.1 391l4.2-7.2h8.4l4.2 7.2l-4.2 7.2h-8.4zM1058.1 405.5l4.2-7.2h8.4l4.2 7.2l-4.2 7.2h-8.4zM1058.1 420l4.2-7.2h8.4l4.2 7.2l-4.2 7.2h-8.4zM1058.1 434.5l4.2-7.2h8.4l4.2 7.2l-4.2 7.2h-8.4zM1058.1 449l4.2-7.2h8.4l4.2 7.2l-4.2 7.2h-8.4zM1058.1 463.5l4.2-7.2h8.4l4.2 7.2l-4.2 7.2h-8.4zM1058.1 478l4.2-7.2h8.4l4.2 7.2l-4.2 7.2h-8.4zM1058.1 492.4l4.2-7.2h8.4l4.2 7.2l-4.2 7.2h-8.4zM1058.1 506.9l4.2-7.2h8.4l4.2 7.2l-4.2 7.2h-8.4zM1058.1 521.4l4.2-7.2h8.4l4.2 7.2l-4.2 7.2h-8.4zM1058.1 535.9l4.2-7.2h8.4l4.2 7.2l-4.2 7.2h-8.4zM1058.1 550.4l4.2-7.2h8.4l4.2 7.2l-4.2 7.2h-8.4zM1058.1 564.9l4.2-7.2h8.4l4.2 7.2l-4.2 7.2h-8.4zM1058.1 579.4l4.2-7.2h8.4l4.2 7.2l-4.2 7.2h-8.4zM1058.1 593.9l4.2-7.2h8.4l4.2 7.2l-4.2 7.2h-8.4zM1058.1 608.3l4.2-7.2h8.4l4.2 7.2l-4.2 7.2h-8.4zM1058.1 622.8l4.2-7.2h8.4l4.2 7.2l-4.2 7.2h-8.4zM1058.1 637.3l4.2-7.2h8.4l4.2 7.2l-4.2 7.2h-8.4zM1058.1 651.8l4.2-7.2h8.4l4.2 7.2l-4.2 7.2h-8.4zM1058.1 666.3l4.2-7.2h8.4l4.2 7.2l-4.2 7.2h-8.4zM1058.1 680.8l4.2-7.2h8.4l4.2 7.2l-4.2 7.2h-8.4zM1058.1 695.3l4.2-7.2h8.4l4.2 7.2l-4.2 7.2h-8.4zM1058.1 709.8l4.2-7.2h8.4l4.2 7.2l-4.2 7.2h-8.4zM1058.1 724.3l4.2-7.2h8.4l4.2 7.2l-4.2 7.2h-8.4zM1058.1 738.7l4.2-7.2h8.4l4.2 7.2l-4.2 7.2h-8.4zM1058.1 753.2l4.2-7.2h8.4l4.2 7.2l-4.2 7.2h-8.4zM1058.1 767.7l4.2-7.2h8.4l4.2 7.2l-4.2 7.2h-8.4zM1058.1 782.2l4.2-7.2h8.4l4.2 7.2l-4.2 7.2h-8.4zM1058.1 796.7l4.2-7.2h8.4l4.2 7.2l-4.2 7.2h-8.4zM1058.1 811.2l4.2-7.2h8.4l4.2 7.2l-4.2 7.2h-8.4zM1070.7 238.9l4.2-7.2h8.4l4.2 7.2l-4.2 7.2h-8.4zM1070.7 253.4l4.2-7.2h8.4l4.2 7.2l-4.2 7.2h-8.4zM1070.7 267.9l4.2-7.2h8.4l4.2 7.2l-4.2 7.2h-8.4zM1070.7 282.4l4.2-7.2h8.4l4.2 7.2l-4.2 7.2h-8.4zM1070.7 296.8l4.2-7.2h8.4l4.2 7.2l-4.2 7.2h-8.4zM1070.7 311.3l4.2-7.2h8.4l4.2 7.2l-4.2 7.2h-8.4zM1070.7 325.8l4.2-7.2h8.4l4.2 7.2l-4.2 7.2h-8.4zM1070.7 340.3l4.2-7.2h8.4l4.2 7.2l-4.2 7.2h-8.4zM1070.7 354.8l4.2-7.2h8.4l4.2 7.2l-4.2 7.2h-8.4zM1070.7 369.3l4.2-7.2h8.4l4.2 7.2l-4.2 7.2h-8.4zM1070.7 383.8l4.2-7.2h8.4l4.2 7.2l-4.2 7.2h-8.4zM1070.7 398.3l4.2-7.2h8.4l4.2 7.2l-4.2 7.2h-8.4zM1070.7 412.8l4.2-7.2h8.4l4.2 7.2l-4.2 7.2h-8.4zM1070.7 427.2l4.2-7.2h8.4l4.2 7.2l-4.2 7.2h-8.4zM1070.7 441.7l4.2-7.2h8.4l4.2 7.2l-4.2 7.2h-8.4zM1070.7 456.2l4.2-7.2h8.4l4.2 7.2l-4.2 7.2h-8.4zM1070.7 470.7l4.2-7.2h8.4l4.2 7.2l-4.2 7.2h-8.4zM1070.7 485.2l4.2-7.2h8.4l4.2 7.2l-4.2 7.2h-8.4zM1070.7 499.7l4.2-7.2h8.4l4.2 7.2l-4.2 7.2h-8.4zM1070.7 514.2l4.2-7.2h8.4l4.2 7.2l-4.2 7.2h-8.4zM1070.7 528.7l4.2-7.2h8.4l4.2 7.2l-4.2 7.2h-8.4zM1070.7 543.1l4.2-7.2h8.4l4.2 7.2l-4.2 7.2h-8.4zM1070.7 557.6l4.2-7.2h8.4l4.2 7.2l-4.2 7.2h-8.4zM1070.7 572.1l4.2-7.2h8.4l4.2 7.2l-4.2 7.2h-8.4zM1070.7 586.6l4.2-7.2h8.4l4.2 7.2l-4.2 7.2h-8.4zM1070.7 601.1l4.2-7.2h8.4l4.2 7.2l-4.2 7.2h-8.4zM1070.7 615.6l4.2-7.2h8.4l4.2 7.2l-4.2 7.2h-8.4zM1070.7 630.1l4.2-7.2h8.4l4.2 7.2l-4.2 7.2h-8.4zM1070.7 644.6l4.2-7.2h8.4l4.2 7.2l-4.2 7.2h-8.4zM1070.7 659.1l4.2-7.2h8.4l4.2 7.2l-4.2 7.2h-8.4zM1070.7 673.5l4.2-7.2h8.4l4.2 7.2l-4.2 7.2h-8.4zM1070.7 688l4.2-7.2h8.4l4.2 7.2l-4.2 7.2h-8.4zM1070.7 702.5l4.2-7.2h8.4l4.2 7.2l-4.2 7.2h-8.4zM1070.7 717l4.2-7.2h8.4l4.2 7.2l-4.2 7.2h-8.4zM1070.7 731.5l4.2-7.2h8.4l4.2 7.2l-4.2 7.2h-8.4zM1070.7 746l4.2-7.2h8.4l4.2 7.2l-4.2 7.2h-8.4zM1070.7 760.5l4.2-7.2h8.4l4.2 7.2l-4.2 7.2h-8.4zM1070.7 775l4.2-7.2h8.4l4.2 7.2l-4.2 7.2h-8.4zM1070.7 789.5l4.2-7.2h8.4l4.2 7.2l-4.2 7.2h-8.4zM1070.7 803.9l4.2-7.2h8.4l4.2 7.2l-4.2 7.2h-8.4zM1070.7 818.4l4.2-7.2h8.4l4.2 7.2l-4.2 7.2h-8.4zM1083.2 231.6l4.2-7.2h8.4l4.2 7.2l-4.2 7.2h-8.4zM1083.2 246.1l4.2-7.2h8.4l4.2 7.2l-4.2 7.2h-8.4zM1083.2 260.6l4.2-7.2h8.4l4.2 7.2l-4.2 7.2h-8.4zM1083.2 275.1l4.2-7.2h8.4l4.2 7.2l-4.2 7.2h-8.4zM1083.2 289.6l4.2-7.2h8.4l4.2 7.2l-4.2 7.2h-8.4zM1083.2 304.1l4.2-7.2h8.4l4.2 7.2l-4.2 7.2h-8.4zM1083.2 318.6l4.2-7.2h8.4l4.2 7.2l-4.2 7.2h-8.4zM1083.2 333.1l4.2-7.2h8.4l4.2 7.2l-4.2 7.2h-8.4zM1083.2 347.6l4.2-7.2h8.4l4.2 7.2l-4.2 7.2h-8.4zM1083.2 362l4.2-7.2h8.4l4.2 7.2l-4.2 7.2h-8.4zM1083.2 376.5l4.2-7.2h8.4l4.2 7.2l-4.2 7.2h-8.4zM1083.2 391l4.2-7.2h8.4l4.2 7.2l-4.2 7.2h-8.4zM1083.2 405.5l4.2-7.2h8.4l4.2 7.2l-4.2 7.2h-8.4zM1083.2 420l4.2-7.2h8.4l4.2 7.2l-4.2 7.2h-8.4zM1083.2 434.5l4.2-7.2h8.4l4.2 7.2l-4.2 7.2h-8.4zM1083.2 449l4.2-7.2h8.4l4.2 7.2l-4.2 7.2h-8.4zM1083.2 463.5l4.2-7.2h8.4l4.2 7.2l-4.2 7.2h-8.4zM1083.2 478l4.2-7.2h8.4l4.2 7.2l-4.2 7.2h-8.4zM1083.2 492.4l4.2-7.2h8.4l4.2 7.2l-4.2 7.2h-8.4zM1083.2 506.9l4.2-7.2h8.4l4.2 7.2l-4.2 7.2h-8.4zM1083.2 521.4l4.2-7.2h8.4l4.2 7.2l-4.2 7.2h-8.4zM1083.2 535.9l4.2-7.2h8.4l4.2 7.2l-4.2 7.2h-8.4zM1083.2 550.4l4.2-7.2h8.4l4.2 7.2l-4.2 7.2h-8.4zM1083.2 564.9l4.2-7.2h8.4l4.2 7.2l-4.2 7.2h-8.4zM1083.2 579.4l4.2-7.2h8.4l4.2 7.2l-4.2 7.2h-8.4zM1083.2 593.9l4.2-7.2h8.4l4.2 7.2l-4.2 7.2h-8.4zM1083.2 608.3l4.2-7.2h8.4l4.2 7.2l-4.2 7.2h-8.4zM1083.2 622.8l4.2-7.2h8.4l4.2 7.2l-4.2 7.2h-8.4zM1083.2 637.3l4.2-7.2h8.4l4.2 7.2l-4.2 7.2h-8.4zM1083.2 651.8l4.2-7.2h8.4l4.2 7.2l-4.2 7.2h-8.4zM1083.2 666.3l4.2-7.2h8.4l4.2 7.2l-4.2 7.2h-8.4zM1083.2 680.8l4.2-7.2h8.4l4.2 7.2l-4.2 7.2h-8.4zM1083.2 695.3l4.2-7.2h8.4l4.2 7.2l-4.2 7.2h-8.4zM1083.2 709.8l4.2-7.2h8.4l4.2 7.2l-4.2 7.2h-8.4zM1083.2 724.3l4.2-7.2h8.4l4.2 7.2l-4.2 7.2h-8.4zM1083.2 738.7l4.2-7.2h8.4l4.2 7.2l-4.2 7.2h-8.4zM1083.2 753.2l4.2-7.2h8.4l4.2 7.2l-4.2 7.2h-8.4zM1083.2 767.7l4.2-7.2h8.4l4.2 7.2l-4.2 7.2h-8.4zM1083.2 782.2l4.2-7.2h8.4l4.2 7.2l-4.2 7.2h-8.4zM1083.2 796.7l4.2-7.2h8.4l4.2 7.2l-4.2 7.2h-8.4zM1083.2 811.2l4.2-7.2h8.4l4.2 7.2l-4.2 7.2h-8.4zM1095.8 238.9l4.2-7.2h8.4l4.2 7.2l-4.2 7.2h-8.4zM1095.8 253.4l4.2-7.2h8.4l4.2 7.2l-4.2 7.2h-8.4zM1095.8 267.9l4.2-7.2h8.4l4.2 7.2l-4.2 7.2h-8.4zM1095.8 282.4l4.2-7.2h8.4l4.2 7.2l-4.2 7.2h-8.4zM1095.8 296.8l4.2-7.2h8.4l4.2 7.2l-4.2 7.2h-8.4zM1095.8 311.3l4.2-7.2h8.4l4.2 7.2l-4.2 7.2h-8.4zM1095.8 325.8l4.2-7.2h8.4l4.2 7.2l-4.2 7.2h-8.4zM1095.8 340.3l4.2-7.2h8.4l4.2 7.2l-4.2 7.2h-8.4zM1095.8 354.8l4.2-7.2h8.4l4.2 7.2l-4.2 7.2h-8.4zM1095.8 369.3l4.2-7.2h8.4l4.2 7.2l-4.2 7.2h-8.4zM1095.8 383.8l4.2-7.2h8.4l4.2 7.2l-4.2 7.2h-8.4zM1095.8 398.3l4.2-7.2h8.4l4.2 7.2l-4.2 7.2h-8.4zM1095.8 412.8l4.2-7.2h8.4l4.2 7.2l-4.2 7.2h-8.4zM1095.8 427.2l4.2-7.2h8.4l4.2 7.2l-4.2 7.2h-8.4zM1095.8 441.7l4.2-7.2h8.4l4.2 7.2l-4.2 7.2h-8.4zM1095.8 456.2l4.2-7.2h8.4l4.2 7.2l-4.2 7.2h-8.4zM1095.8 470.7l4.2-7.2h8.4l4.2 7.2l-4.2 7.2h-8.4zM1095.8 485.2l4.2-7.2h8.4l4.2 7.2l-4.2 7.2h-8.4zM1095.8 499.7l4.2-7.2h8.4l4.2 7.2l-4.2 7.2h-8.4zM1095.8 514.2l4.2-7.2h8.4l4.2 7.2l-4.2 7.2h-8.4zM1095.8 528.7l4.2-7.2h8.4l4.2 7.2l-4.2 7.2h-8.4zM1095.8 543.1l4.2-7.2h8.4l4.2 7.2l-4.2 7.2h-8.4zM1095.8 557.6l4.2-7.2h8.4l4.2 7.2l-4.2 7.2h-8.4zM1095.8 572.1l4.2-7.2h8.4l4.2 7.2l-4.2 7.2h-8.4zM1095.8 586.6l4.2-7.2h8.4l4.2 7.2l-4.2 7.2h-8.4zM1095.8 601.1l4.2-7.2h8.4l4.2 7.2l-4.2 7.2h-8.4zM1095.8 615.6l4.2-7.2h8.4l4.2 7.2l-4.2 7.2h-8.4zM1095.8 630.1l4.2-7.2h8.4l4.2 7.2l-4.2 7.2h-8.4zM1095.8 644.6l4.2-7.2h8.4l4.2 7.2l-4.2 7.2h-8.4zM1095.8 659.1l4.2-7.2h8.4l4.2 7.2l-4.2 7.2h-8.4zM1095.8 673.5l4.2-7.2h8.4l4.2 7.2l-4.2 7.2h-8.4zM1095.8 688l4.2-7.2h8.4l4.2 7.2l-4.2 7.2h-8.4zM1095.8 702.5l4.2-7.2h8.4l4.2 7.2l-4.2 7.2h-8.4zM1095.8 717l4.2-7.2h8.4l4.2 7.2l-4.2 7.2h-8.4zM1095.8 731.5l4.2-7.2h8.4l4.2 7.2l-4.2 7.2h-8.4zM1095.8 746l4.2-7.2h8.4l4.2 7.2l-4.2 7.2h-8.4zM1095.8 760.5l4.2-7.2h8.4l4.2 7.2l-4.2 7.2h-8.4zM1095.8 775l4.2-7.2h8.4l4.2 7.2l-4.2 7.2h-8.4zM1095.8 789.5l4.2-7.2h8.4l4.2 7.2l-4.2 7.2h-8.4zM1095.8 803.9l4.2-7.2h8.4l4.2 7.2l-4.2 7.2h-8.4zM1095.8 818.4l4.2-7.2h8.4l4.2 7.2l-4.2 7.2h-8.4zM1108.3 231.6l4.2-7.2h8.4l4.2 7.2l-4.2 7.2h-8.4zM1108.3 246.1l4.2-7.2h8.4l4.2 7.2l-4.2 7.2h-8.4zM1108.3 260.6l4.2-7.2h8.4l4.2 7.2l-4.2 7.2h-8.4zM1108.3 275.1l4.2-7.2h8.4l4.2 7.2l-4.2 7.2h-8.4zM1108.3 289.6l4.2-7.2h8.4l4.2 7.2l-4.2 7.2h-8.4zM1108.3 304.1l4.2-7.2h8.4l4.2 7.2l-4.2 7.2h-8.4zM1108.3 318.6l4.2-7.2h8.4l4.2 7.2l-4.2 7.2h-8.4zM1108.3 333.1l4.2-7.2h8.4l4.2 7.2l-4.2 7.2h-8.4zM1108.3 347.6l4.2-7.2h8.4l4.2 7.2l-4.2 7.2h-8.4zM1108.3 362l4.2-7.2h8.4l4.2 7.2l-4.2 7.2h-8.4zM1108.3 376.5l4.2-7.2h8.4l4.2 7.2l-4.2 7.2h-8.4zM1108.3 391l4.2-7.2h8.4l4.2 7.2l-4.2 7.2h-8.4zM1108.3 405.5l4.2-7.2h8.4l4.2 7.2l-4.2 7.2h-8.4zM1108.3 420l4.2-7.2h8.4l4.2 7.2l-4.2 7.2h-8.4zM1108.3 434.5l4.2-7.2h8.4l4.2 7.2l-4.2 7.2h-8.4zM1108.3 449l4.2-7.2h8.4l4.2 7.2l-4.2 7.2h-8.4zM1108.3 463.5l4.2-7.2h8.4l4.2 7.2l-4.2 7.2h-8.4zM1108.3 478l4.2-7.2h8.4l4.2 7.2l-4.2 7.2h-8.4zM1108.3 492.4l4.2-7.2h8.4l4.2 7.2l-4.2 7.2h-8.4zM1108.3 506.9l4.2-7.2h8.4l4.2 7.2l-4.2 7.2h-8.4zM1108.3 521.4l4.2-7.2h8.4l4.2 7.2l-4.2 7.2h-8.4zM1108.3 535.9l4.2-7.2h8.4l4.2 7.2l-4.2 7.2h-8.4zM1108.3 550.4l4.2-7.2h8.4l4.2 7.2l-4.2 7.2h-8.4zM1108.3 564.9l4.2-7.2h8.4l4.2 7.2l-4.2 7.2h-8.4zM1108.3 579.4l4.2-7.2h8.4l4.2 7.2l-4.2 7.2h-8.4zM1108.3 593.9l4.2-7.2h8.4l4.2 7.2l-4.2 7.2h-8.4zM1108.3 608.3l4.2-7.2h8.4l4.2 7.2l-4.2 7.2h-8.4zM1108.3 622.8l4.2-7.2h8.4l4.2 7.2l-4.2 7.2h-8.4zM1108.3 637.3l4.2-7.2h8.4l4.2 7.2l-4.2 7.2h-8.4zM1108.3 651.8l4.2-7.2h8.4l4.2 7.2l-4.2 7.2h-8.4zM1108.3 666.3l4.2-7.2h8.4l4.2 7.2l-4.2 7.2h-8.4zM1108.3 680.8l4.2-7.2h8.4l4.2 7.2l-4.2 7.2h-8.4zM1108.3 695.3l4.2-7.2h8.4l4.2 7.2l-4.2 7.2h-8.4zM1108.3 709.8l4.2-7.2h8.4l4.2 7.2l-4.2 7.2h-8.4zM1108.3 724.3l4.2-7.2h8.4l4.2 7.2l-4.2 7.2h-8.4zM1108.3 738.7l4.2-7.2h8.4l4.2 7.2l-4.2 7.2h-8.4zM1108.3 753.2l4.2-7.2h8.4l4.2 7.2l-4.2 7.2h-8.4zM1108.3 767.7l4.2-7.2h8.4l4.2 7.2l-4.2 7.2h-8.4zM1108.3 782.2l4.2-7.2h8.4l4.2 7.2l-4.2 7.2h-8.4zM1108.3 796.7l4.2-7.2h8.4l4.2 7.2l-4.2 7.2h-8.4zM1108.3 811.2l4.2-7.2h8.4l4.2 7.2l-4.2 7.2h-8.4zM1120.9 238.9l4.2-7.2h8.4l4.2 7.2l-4.2 7.2h-8.4zM1120.9 253.4l4.2-7.2h8.4l4.2 7.2l-4.2 7.2h-8.4zM1120.9 267.9l4.2-7.2h8.4l4.2 7.2l-4.2 7.2h-8.4zM1120.9 282.4l4.2-7.2h8.4l4.2 7.2l-4.2 7.2h-8.4zM1120.9 296.8l4.2-7.2h8.4l4.2 7.2l-4.2 7.2h-8.4zM1120.9 311.3l4.2-7.2h8.4l4.2 7.2l-4.2 7.2h-8.4zM1120.9 325.8l4.2-7.2h8.4l4.2 7.2l-4.2 7.2h-8.4zM1120.9 340.3l4.2-7.2h8.4l4.2 7.2l-4.2 7.2h-8.4zM1120.9 354.8l4.2-7.2h8.4l4.2 7.2l-4.2 7.2h-8.4zM1120.9 369.3l4.2-7.2h8.4l4.2 7.2l-4.2 7.2h-8.4zM1120.9 383.8l4.2-7.2h8.4l4.2 7.2l-4.2 7.2h-8.4zM1120.9 398.3l4.2-7.2h8.4l4.2 7.2l-4.2 7.2h-8.4zM1120.9 412.8l4.2-7.2h8.4l4.2 7.2l-4.2 7.2h-8.4zM1120.9 427.2l4.2-7.2h8.4l4.2 7.2l-4.2 7.2h-8.4zM1120.9 441.7l4.2-7.2h8.4l4.2 7.2l-4.2 7.2h-8.4zM1120.9 456.2l4.2-7.2h8.4l4.2 7.2l-4.2 7.2h-8.4zM1120.9 470.7l4.2-7.2h8.4l4.2 7.2l-4.2 7.2h-8.4zM1120.9 485.2l4.2-7.2h8.4l4.2 7.2l-4.2 7.2h-8.4zM1120.9 499.7l4.2-7.2h8.4l4.2 7.2l-4.2 7.2h-8.4zM1120.9 514.2l4.2-7.2h8.4l4.2 7.2l-4.2 7.2h-8.4zM1120.9 528.7l4.2-7.2h8.4l4.2 7.2l-4.2 7.2h-8.4zM1120.9 543.1l4.2-7.2h8.4l4.2 7.2l-4.2 7.2h-8.4zM1120.9 557.6l4.2-7.2h8.4l4.2 7.2l-4.2 7.2h-8.4zM1120.9 572.1l4.2-7.2h8.4l4.2 7.2l-4.2 7.2h-8.4zM1120.9 586.6l4.2-7.2h8.4l4.2 7.2l-4.2 7.2h-8.4zM1120.9 601.1l4.2-7.2h8.4l4.2 7.2l-4.2 7.2h-8.4zM1120.9 615.6l4.2-7.2h8.4l4.2 7.2l-4.2 7.2h-8.4zM1120.9 630.1l4.2-7.2h8.4l4.2 7.2l-4.2 7.2h-8.4zM1120.9 644.6l4.2-7.2h8.4l4.2 7.2l-4.2 7.2h-8.4zM1120.9 659.1l4.2-7.2h8.4l4.2 7.2l-4.2 7.2h-8.4zM1120.9 673.5l4.2-7.2h8.4l4.2 7.2l-4.2 7.2h-8.4zM1120.9 688l4.2-7.2h8.4l4.2 7.2l-4.2 7.2h-8.4zM1120.9 702.5l4.2-7.2h8.4l4.2 7.2l-4.2 7.2h-8.4zM1120.9 717l4.2-7.2h8.4l4.2 7.2l-4.2 7.2h-8.4zM1120.9 731.5l4.2-7.2h8.4l4.2 7.2l-4.2 7.2h-8.4zM1120.9 746l4.2-7.2h8.4l4.2 7.2l-4.2 7.2h-8.4zM1120.9 760.5l4.2-7.2h8.4l4.2 7.2l-4.2 7.2h-8.4zM1120.9 775l4.2-7.2h8.4l4.2 7.2l-4.2 7.2h-8.4zM1120.9 789.5l4.2-7.2h8.4l4.2 7.2l-4.2 7.2h-8.4zM1120.9 803.9l4.2-7.2h8.4l4.2 7.2l-4.2 7.2h-8.4zM1120.9 818.4l4.2-7.2h8.4l4.2 7.2l-4.2 7.2h-8.4zM1133.4 231.6l4.2-7.2h8.4l4.2 7.2l-4.2 7.2h-8.4zM1133.4 246.1l4.2-7.2h8.4l4.2 7.2l-4.2 7.2h-8.4zM1133.4 260.6l4.2-7.2h8.4l4.2 7.2l-4.2 7.2h-8.4zM1133.4 275.1l4.2-7.2h8.4l4.2 7.2l-4.2 7.2h-8.4zM1133.4 289.6l4.2-7.2h8.4l4.2 7.2l-4.2 7.2h-8.4zM1133.4 304.1l4.2-7.2h8.4l4.2 7.2l-4.2 7.2h-8.4zM1133.4 318.6l4.2-7.2h8.4l4.2 7.2l-4.2 7.2h-8.4zM1133.4 333.1l4.2-7.2h8.4l4.2 7.2l-4.2 7.2h-8.4zM1133.4 347.6l4.2-7.2h8.4l4.2 7.2l-4.2 7.2h-8.4zM1133.4 362l4.2-7.2h8.4l4.2 7.2l-4.2 7.2h-8.4zM1133.4 376.5l4.2-7.2h8.4l4.2 7.2l-4.2 7.2h-8.4zM1133.4 391l4.2-7.2h8.4l4.2 7.2l-4.2 7.2h-8.4zM1133.4 405.5l4.2-7.2h8.4l4.2 7.2l-4.2 7.2h-8.4zM1133.4 420l4.2-7.2h8.4l4.2 7.2l-4.2 7.2h-8.4zM1133.4 434.5l4.2-7.2h8.4l4.2 7.2l-4.2 7.2h-8.4zM1133.4 449l4.2-7.2h8.4l4.2 7.2l-4.2 7.2h-8.4zM1133.4 463.5l4.2-7.2h8.4l4.2 7.2l-4.2 7.2h-8.4zM1133.4 478l4.2-7.2h8.4l4.2 7.2l-4.2 7.2h-8.4zM1133.4 492.4l4.2-7.2h8.4l4.2 7.2l-4.2 7.2h-8.4zM1133.4 506.9l4.2-7.2h8.4l4.2 7.2l-4.2 7.2h-8.4zM1133.4 521.4l4.2-7.2h8.4l4.2 7.2l-4.2 7.2h-8.4zM1133.4 535.9l4.2-7.2h8.4l4.2 7.2l-4.2 7.2h-8.4zM1133.4 550.4l4.2-7.2h8.4l4.2 7.2l-4.2 7.2h-8.4zM1133.4 564.9l4.2-7.2h8.4l4.2 7.2l-4.2 7.2h-8.4zM1133.4 579.4l4.2-7.2h8.4l4.2 7.2l-4.2 7.2h-8.4zM1133.4 593.9l4.2-7.2h8.4l4.2 7.2l-4.2 7.2h-8.4zM1133.4 608.3l4.2-7.2h8.4l4.2 7.2l-4.2 7.2h-8.4zM1133.4 622.8l4.2-7.2h8.4l4.2 7.2l-4.2 7.2h-8.4zM1133.4 637.3l4.2-7.2h8.4l4.2 7.2l-4.2 7.2h-8.4zM1133.4 651.8l4.2-7.2h8.4l4.2 7.2l-4.2 7.2h-8.4zM1133.4 666.3l4.2-7.2h8.4l4.2 7.2l-4.2 7.2h-8.4zM1133.4 680.8l4.2-7.2h8.4l4.2 7.2l-4.2 7.2h-8.4zM1133.4 695.3l4.2-7.2h8.4l4.2 7.2l-4.2 7.2h-8.4zM1133.4 709.8l4.2-7.2h8.4l4.2 7.2l-4.2 7.2h-8.4zM1133.4 724.3l4.2-7.2h8.4l4.2 7.2l-4.2 7.2h-8.4zM1133.4 738.7l4.2-7.2h8.4l4.2 7.2l-4.2 7.2h-8.4zM1133.4 753.2l4.2-7.2h8.4l4.2 7.2l-4.2 7.2h-8.4zM1133.4 767.7l4.2-7.2h8.4l4.2 7.2l-4.2 7.2h-8.4zM1133.4 782.2l4.2-7.2h8.4l4.2 7.2l-4.2 7.2h-8.4zM1133.4 796.7l4.2-7.2h8.4l4.2 7.2l-4.2 7.2h-8.4zM1133.4 811.2l4.2-7.2h8.4l4.2 7.2l-4.2 7.2h-8.4zM1146 238.9l4.2-7.2h8.4l4.2 7.2l-4.2 7.2h-8.4zM1146 253.4l4.2-7.2h8.4l4.2 7.2l-4.2 7.2h-8.4zM1146 267.9l4.2-7.2h8.4l4.2 7.2l-4.2 7.2h-8.4zM1146 282.4l4.2-7.2h8.4l4.2 7.2l-4.2 7.2h-8.4zM1146 296.8l4.2-7.2h8.4l4.2 7.2l-4.2 7.2h-8.4zM1146 311.3l4.2-7.2h8.4l4.2 7.2l-4.2 7.2h-8.4zM1146 325.8l4.2-7.2h8.4l4.2 7.2l-4.2 7.2h-8.4zM1146 340.3l4.2-7.2h8.4l4.2 7.2l-4.2 7.2h-8.4zM1146 354.8l4.2-7.2h8.4l4.2 7.2l-4.2 7.2h-8.4zM1146 369.3l4.2-7.2h8.4l4.2 7.2l-4.2 7.2h-8.4zM1146 383.8l4.2-7.2h8.4l4.2 7.2l-4.2 7.2h-8.4zM1146 398.3l4.2-7.2h8.4l4.2 7.2l-4.2 7.2h-8.4zM1146 412.8l4.2-7.2h8.4l4.2 7.2l-4.2 7.2h-8.4zM1146 427.2l4.2-7.2h8.4l4.2 7.2l-4.2 7.2h-8.4zM1146 441.7l4.2-7.2h8.4l4.2 7.2l-4.2 7.2h-8.4zM1146 456.2l4.2-7.2h8.4l4.2 7.2l-4.2 7.2h-8.4zM1146 470.7l4.2-7.2h8.4l4.2 7.2l-4.2 7.2h-8.4zM1146 485.2l4.2-7.2h8.4l4.2 7.2l-4.2 7.2h-8.4zM1146 499.7l4.2-7.2h8.4l4.2 7.2l-4.2 7.2h-8.4zM1146 514.2l4.2-7.2h8.4l4.2 7.2l-4.2 7.2h-8.4zM1146 528.7l4.2-7.2h8.4l4.2 7.2l-4.2 7.2h-8.4zM1146 543.1l4.2-7.2h8.4l4.2 7.2l-4.2 7.2h-8.4zM1146 557.6l4.2-7.2h8.4l4.2 7.2l-4.2 7.2h-8.4zM1146 572.1l4.2-7.2h8.4l4.2 7.2l-4.2 7.2h-8.4zM1146 586.6l4.2-7.2h8.4l4.2 7.2l-4.2 7.2h-8.4zM1146 601.1l4.2-7.2h8.4l4.2 7.2l-4.2 7.2h-8.4zM1146 615.6l4.2-7.2h8.4l4.2 7.2l-4.2 7.2h-8.4zM1146 630.1l4.2-7.2h8.4l4.2 7.2l-4.2 7.2h-8.4zM1146 644.6l4.2-7.2h8.4l4.2 7.2l-4.2 7.2h-8.4zM1146 659.1l4.2-7.2h8.4l4.2 7.2l-4.2 7.2h-8.4zM1146 673.5l4.2-7.2h8.4l4.2 7.2l-4.2 7.2h-8.4zM1146 688l4.2-7.2h8.4l4.2 7.2l-4.2 7.2h-8.4zM1146 702.5l4.2-7.2h8.4l4.2 7.2l-4.2 7.2h-8.4zM1146 717l4.2-7.2h8.4l4.2 7.2l-4.2 7.2h-8.4zM1146 731.5l4.2-7.2h8.4l4.2 7.2l-4.2 7.2h-8.4zM1146 746l4.2-7.2h8.4l4.2 7.2l-4.2 7.2h-8.4zM1146 760.5l4.2-7.2h8.4l4.2 7.2l-4.2 7.2h-8.4zM1146 775l4.2-7.2h8.4l4.2 7.2l-4.2 7.2h-8.4zM1146 789.5l4.2-7.2h8.4l4.2 7.2l-4.2 7.2h-8.4zM1146 803.9l4.2-7.2h8.4l4.2 7.2l-4.2 7.2h-8.4zM1146 818.4l4.2-7.2h8.4l4.2 7.2l-4.2 7.2h-8.4zM1158.5 231.6l4.2-7.2h8.4l4.2 7.2l-4.2 7.2h-8.4zM1158.5 246.1l4.2-7.2h8.4l4.2 7.2l-4.2 7.2h-8.4zM1158.5 260.6l4.2-7.2h8.4l4.2 7.2l-4.2 7.2h-8.4zM1158.5 275.1l4.2-7.2h8.4l4.2 7.2l-4.2 7.2h-8.4zM1158.5 289.6l4.2-7.2h8.4l4.2 7.2l-4.2 7.2h-8.4zM1158.5 304.1l4.2-7.2h8.4l4.2 7.2l-4.2 7.2h-8.4zM1158.5 318.6l4.2-7.2h8.4l4.2 7.2l-4.2 7.2h-8.4zM1158.5 333.1l4.2-7.2h8.4l4.2 7.2l-4.2 7.2h-8.4zM1158.5 347.6l4.2-7.2h8.4l4.2 7.2l-4.2 7.2h-8.4zM1158.5 362l4.2-7.2h8.4l4.2 7.2l-4.2 7.2h-8.4zM1158.5 376.5l4.2-7.2h8.4l4.2 7.2l-4.2 7.2h-8.4zM1158.5 391l4.2-7.2h8.4l4.2 7.2l-4.2 7.2h-8.4zM1158.5 405.5l4.2-7.2h8.4l4.2 7.2l-4.2 7.2h-8.4zM1158.5 420l4.2-7.2h8.4l4.2 7.2l-4.2 7.2h-8.4zM1158.5 434.5l4.2-7.2h8.4l4.2 7.2l-4.2 7.2h-8.4zM1158.5 449l4.2-7.2h8.4l4.2 7.2l-4.2 7.2h-8.4zM1158.5 463.5l4.2-7.2h8.4l4.2 7.2l-4.2 7.2h-8.4zM1158.5 478l4.2-7.2h8.4l4.2 7.2l-4.2 7.2h-8.4zM1158.5 492.4l4.2-7.2h8.4l4.2 7.2l-4.2 7.2h-8.4zM1158.5 506.9l4.2-7.2h8.4l4.2 7.2l-4.2 7.2h-8.4zM1158.5 521.4l4.2-7.2h8.4l4.2 7.2l-4.2 7.2h-8.4zM1158.5 535.9l4.2-7.2h8.4l4.2 7.2l-4.2 7.2h-8.4zM1158.5 550.4l4.2-7.2h8.4l4.2 7.2l-4.2 7.2h-8.4zM1158.5 564.9l4.2-7.2h8.4l4.2 7.2l-4.2 7.2h-8.4zM1158.5 579.4l4.2-7.2h8.4l4.2 7.2l-4.2 7.2h-8.4zM1158.5 593.9l4.2-7.2h8.4l4.2 7.2l-4.2 7.2h-8.4zM1158.5 608.3l4.2-7.2h8.4l4.2 7.2l-4.2 7.2h-8.4zM1158.5 622.8l4.2-7.2h8.4l4.2 7.2l-4.2 7.2h-8.4zM1158.5 637.3l4.2-7.2h8.4l4.2 7.2l-4.2 7.2h-8.4zM1158.5 651.8l4.2-7.2h8.4l4.2 7.2l-4.2 7.2h-8.4zM1158.5 666.3l4.2-7.2h8.4l4.2 7.2l-4.2 7.2h-8.4zM1158.5 680.8l4.2-7.2h8.4l4.2 7.2l-4.2 7.2h-8.4zM1158.5 695.3l4.2-7.2h8.4l4.2 7.2l-4.2 7.2h-8.4zM1158.5 709.8l4.2-7.2h8.4l4.2 7.2l-4.2 7.2h-8.4zM1158.5 724.3l4.2-7.2h8.4l4.2 7.2l-4.2 7.2h-8.4zM1158.5 738.7l4.2-7.2h8.4l4.2 7.2l-4.2 7.2h-8.4zM1158.5 753.2l4.2-7.2h8.4l4.2 7.2l-4.2 7.2h-8.4zM1158.5 767.7l4.2-7.2h8.4l4.2 7.2l-4.2 7.2h-8.4zM1158.5 782.2l4.2-7.2h8.4l4.2 7.2l-4.2 7.2h-8.4zM1158.5 796.7l4.2-7.2h8.4l4.2 7.2l-4.2 7.2h-8.4zM1158.5 811.2l4.2-7.2h8.4l4.2 7.2l-4.2 7.2h-8.4zM1171.1 238.9l4.2-7.2h8.4l4.2 7.2l-4.2 7.2h-8.4zM1171.1 253.4l4.2-7.2h8.4l4.2 7.2l-4.2 7.2h-8.4zM1171.1 267.9l4.2-7.2h8.4l4.2 7.2l-4.2 7.2h-8.4zM1171.1 282.4l4.2-7.2h8.4l4.2 7.2l-4.2 7.2h-8.4zM1171.1 296.8l4.2-7.2h8.4l4.2 7.2l-4.2 7.2h-8.4zM1171.1 311.3l4.2-7.2h8.4l4.2 7.2l-4.2 7.2h-8.4zM1171.1 325.8l4.2-7.2h8.4l4.2 7.2l-4.2 7.2h-8.4zM1171.1 340.3l4.2-7.2h8.4l4.2 7.2l-4.2 7.2h-8.4zM1171.1 354.8l4.2-7.2h8.4l4.2 7.2l-4.2 7.2h-8.4zM1171.1 369.3l4.2-7.2h8.4l4.2 7.2l-4.2 7.2h-8.4zM1171.1 383.8l4.2-7.2h8.4l4.2 7.2l-4.2 7.2h-8.4zM1171.1 398.3l4.2-7.2h8.4l4.2 7.2l-4.2 7.2h-8.4zM1171.1 412.8l4.2-7.2h8.4l4.2 7.2l-4.2 7.2h-8.4zM1171.1 427.2l4.2-7.2h8.4l4.2 7.2l-4.2 7.2h-8.4zM1171.1 441.7l4.2-7.2h8.4l4.2 7.2l-4.2 7.2h-8.4zM1171.1 456.2l4.2-7.2h8.4l4.2 7.2l-4.2 7.2h-8.4zM1171.1 470.7l4.2-7.2h8.4l4.2 7.2l-4.2 7.2h-8.4zM1171.1 485.2l4.2-7.2h8.4l4.2 7.2l-4.2 7.2h-8.4zM1171.1 499.7l4.2-7.2h8.4l4.2 7.2l-4.2 7.2h-8.4zM1171.1 514.2l4.2-7.2h8.4l4.2 7.2l-4.2 7.2h-8.4zM1171.1 528.7l4.2-7.2h8.4l4.2 7.2l-4.2 7.2h-8.4zM1171.1 543.1l4.2-7.2h8.4l4.2 7.2l-4.2 7.2h-8.4zM1171.1 557.6l4.2-7.2h8.4l4.2 7.2l-4.2 7.2h-8.4zM1171.1 572.1l4.2-7.2h8.4l4.2 7.2l-4.2 7.2h-8.4zM1171.1 586.6l4.2-7.2h8.4l4.2 7.2l-4.2 7.2h-8.4zM1171.1 601.1l4.2-7.2h8.4l4.2 7.2l-4.2 7.2h-8.4zM1171.1 615.6l4.2-7.2h8.4l4.2 7.2l-4.2 7.2h-8.4zM1171.1 630.1l4.2-7.2h8.4l4.2 7.2l-4.2 7.2h-8.4zM1171.1 644.6l4.2-7.2h8.4l4.2 7.2l-4.2 7.2h-8.4zM1171.1 659.1l4.2-7.2h8.4l4.2 7.2l-4.2 7.2h-8.4zM1171.1 673.5l4.2-7.2h8.4l4.2 7.2l-4.2 7.2h-8.4zM1171.1 688l4.2-7.2h8.4l4.2 7.2l-4.2 7.2h-8.4zM1171.1 702.5l4.2-7.2h8.4l4.2 7.2l-4.2 7.2h-8.4zM1171.1 717l4.2-7.2h8.4l4.2 7.2l-4.2 7.2h-8.4zM1171.1 731.5l4.2-7.2h8.4l4.2 7.2l-4.2 7.2h-8.4zM1171.1 746l4.2-7.2h8.4l4.2 7.2l-4.2 7.2h-8.4zM1171.1 760.5l4.2-7.2h8.4l4.2 7.2l-4.2 7.2h-8.4zM1171.1 775l4.2-7.2h8.4l4.2 7.2l-4.2 7.2h-8.4zM1171.1 789.5l4.2-7.2h8.4l4.2 7.2l-4.2 7.2h-8.4zM1171.1 803.9l4.2-7.2h8.4l4.2 7.2l-4.2 7.2h-8.4zM1171.1 818.4l4.2-7.2h8.4l4.2 7.2l-4.2 7.2h-8.4zM1183.6 231.6l4.2-7.2h8.4l4.2 7.2l-4.2 7.2h-8.4zM1183.6 246.1l4.2-7.2h8.4l4.2 7.2l-4.2 7.2h-8.4zM1183.6 260.6l4.2-7.2h8.4l4.2 7.2l-4.2 7.2h-8.4zM1183.6 275.1l4.2-7.2h8.4l4.2 7.2l-4.2 7.2h-8.4zM1183.6 289.6l4.2-7.2h8.4l4.2 7.2l-4.2 7.2h-8.4zM1183.6 304.1l4.2-7.2h8.4l4.2 7.2l-4.2 7.2h-8.4zM1183.6 318.6l4.2-7.2h8.4l4.2 7.2l-4.2 7.2h-8.4zM1183.6 333.1l4.2-7.2h8.4l4.2 7.2l-4.2 7.2h-8.4zM1183.6 347.6l4.2-7.2h8.4l4.2 7.2l-4.2 7.2h-8.4zM1183.6 362l4.2-7.2h8.4l4.2 7.2l-4.2 7.2h-8.4zM1183.6 376.5l4.2-7.2h8.4l4.2 7.2l-4.2 7.2h-8.4zM1183.6 391l4.2-7.2h8.4l4.2 7.2l-4.2 7.2h-8.4zM1183.6 405.5l4.2-7.2h8.4l4.2 7.2l-4.2 7.2h-8.4zM1183.6 420l4.2-7.2h8.4l4.2 7.2l-4.2 7.2h-8.4zM1183.6 434.5l4.2-7.2h8.4l4.2 7.2l-4.2 7.2h-8.4zM1183.6 449l4.2-7.2h8.4l4.2 7.2l-4.2 7.2h-8.4zM1183.6 463.5l4.2-7.2h8.4l4.2 7.2l-4.2 7.2h-8.4zM1183.6 478l4.2-7.2h8.4l4.2 7.2l-4.2 7.2h-8.4zM1183.6 492.4l4.2-7.2h8.4l4.2 7.2l-4.2 7.2h-8.4zM1183.6 506.9l4.2-7.2h8.4l4.2 7.2l-4.2 7.2h-8.4zM1183.6 521.4l4.2-7.2h8.4l4.2 7.2l-4.2 7.2h-8.4zM1183.6 535.9l4.2-7.2h8.4l4.2 7.2l-4.2 7.2h-8.4zM1183.6 550.4l4.2-7.2h8.4l4.2 7.2l-4.2 7.2h-8.4zM1183.6 564.9l4.2-7.2h8.4l4.2 7.2l-4.2 7.2h-8.4zM1183.6 579.4l4.2-7.2h8.4l4.2 7.2l-4.2 7.2h-8.4zM1183.6 593.9l4.2-7.2h8.4l4.2 7.2l-4.2 7.2h-8.4zM1183.6 608.3l4.2-7.2h8.4l4.2 7.2l-4.2 7.2h-8.4zM1183.6 622.8l4.2-7.2h8.4l4.2 7.2l-4.2 7.2h-8.4zM1183.6 637.3l4.2-7.2h8.4l4.2 7.2l-4.2 7.2h-8.4zM1183.6 651.8l4.2-7.2h8.4l4.2 7.2l-4.2 7.2h-8.4zM1183.6 666.3l4.2-7.2h8.4l4.2 7.2l-4.2 7.2h-8.4zM1183.6 680.8l4.2-7.2h8.4l4.2 7.2l-4.2 7.2h-8.4zM1183.6 695.3l4.2-7.2h8.4l4.2 7.2l-4.2 7.2h-8.4zM1183.6 709.8l4.2-7.2h8.4l4.2 7.2l-4.2 7.2h-8.4zM1183.6 724.3l4.2-7.2h8.4l4.2 7.2l-4.2 7.2h-8.4zM1183.6 738.7l4.2-7.2h8.4l4.2 7.2l-4.2 7.2h-8.4zM1183.6 753.2l4.2-7.2h8.4l4.2 7.2l-4.2 7.2h-8.4zM1183.6 767.7l4.2-7.2h8.4l4.2 7.2l-4.2 7.2h-8.4zM1183.6 782.2l4.2-7.2h8.4l4.2 7.2l-4.2 7.2h-8.4zM1183.6 796.7l4.2-7.2h8.4l4.2 7.2l-4.2 7.2h-8.4zM1183.6 811.2l4.2-7.2h8.4l4.2 7.2l-4.2 7.2h-8.4zM1196.2 238.9l4.2-7.2h8.4l4.2 7.2l-4.2 7.2h-8.4zM1196.2 253.4l4.2-7.2h8.4l4.2 7.2l-4.2 7.2h-8.4zM1196.2 267.9l4.2-7.2h8.4l4.2 7.2l-4.2 7.2h-8.4zM1196.2 282.4l4.2-7.2h8.4l4.2 7.2l-4.2 7.2h-8.4zM1196.2 296.8l4.2-7.2h8.4l4.2 7.2l-4.2 7.2h-8.4zM1196.2 311.3l4.2-7.2h8.4l4.2 7.2l-4.2 7.2h-8.4zM1196.2 325.8l4.2-7.2h8.4l4.2 7.2l-4.2 7.2h-8.4zM1196.2 340.3l4.2-7.2h8.4l4.2 7.2l-4.2 7.2h-8.4zM1196.2 354.8l4.2-7.2h8.4l4.2 7.2l-4.2 7.2h-8.4zM1196.2 369.3l4.2-7.2h8.4l4.2 7.2l-4.2 7.2h-8.4zM1196.2 383.8l4.2-7.2h8.4l4.2 7.2l-4.2 7.2h-8.4zM1196.2 398.3l4.2-7.2h8.4l4.2 7.2l-4.2 7.2h-8.4zM1196.2 412.8l4.2-7.2h8.4l4.2 7.2l-4.2 7.2h-8.4zM1196.2 427.2l4.2-7.2h8.4l4.2 7.2l-4.2 7.2h-8.4zM1196.2 441.7l4.2-7.2h8.4l4.2 7.2l-4.2 7.2h-8.4zM1196.2 456.2l4.2-7.2h8.4l4.2 7.2l-4.2 7.2h-8.4zM1196.2 470.7l4.2-7.2h8.4l4.2 7.2l-4.2 7.2h-8.4zM1196.2 485.2l4.2-7.2h8.4l4.2 7.2l-4.2 7.2h-8.4zM1196.2 499.7l4.2-7.2h8.4l4.2 7.2l-4.2 7.2h-8.4zM1196.2 514.2l4.2-7.2h8.4l4.2 7.2l-4.2 7.2h-8.4zM1196.2 528.7l4.2-7.2h8.4l4.2 7.2l-4.2 7.2h-8.4zM1196.2 543.1l4.2-7.2h8.4l4.2 7.2l-4.2 7.2h-8.4zM1196.2 557.6l4.2-7.2h8.4l4.2 7.2l-4.2 7.2h-8.4zM1196.2 572.1l4.2-7.2h8.4l4.2 7.2l-4.2 7.2h-8.4zM1196.2 586.6l4.2-7.2h8.4l4.2 7.2l-4.2 7.2h-8.4zM1196.2 601.1l4.2-7.2h8.4l4.2 7.2l-4.2 7.2h-8.4zM1196.2 615.6l4.2-7.2h8.4l4.2 7.2l-4.2 7.2h-8.4zM1196.2 630.1l4.2-7.2h8.4l4.2 7.2l-4.2 7.2h-8.4zM1196.2 644.6l4.2-7.2h8.4l4.2 7.2l-4.2 7.2h-8.4zM1196.2 659.1l4.2-7.2h8.4l4.2 7.2l-4.2 7.2h-8.4zM1196.2 673.5l4.2-7.2h8.4l4.2 7.2l-4.2 7.2h-8.4zM1196.2 688l4.2-7.2h8.4l4.2 7.2l-4.2 7.2h-8.4zM1196.2 702.5l4.2-7.2h8.4l4.2 7.2l-4.2 7.2h-8.4zM1196.2 717l4.2-7.2h8.4l4.2 7.2l-4.2 7.2h-8.4zM1196.2 731.5l4.2-7.2h8.4l4.2 7.2l-4.2 7.2h-8.4zM1196.2 746l4.2-7.2h8.4l4.2 7.2l-4.2 7.2h-8.4zM1196.2 760.5l4.2-7.2h8.4l4.2 7.2l-4.2 7.2h-8.4zM1196.2 775l4.2-7.2h8.4l4.2 7.2l-4.2 7.2h-8.4zM1196.2 789.5l4.2-7.2h8.4l4.2 7.2l-4.2 7.2h-8.4zM1196.2 803.9l4.2-7.2h8.4l4.2 7.2l-4.2 7.2h-8.4zM1196.2 818.4l4.2-7.2h8.4l4.2 7.2l-4.2 7.2h-8.4zM1208.7 231.6l4.2-7.2h8.4l4.2 7.2l-4.2 7.2h-8.4zM1208.7 246.1l4.2-7.2h8.4l4.2 7.2l-4.2 7.2h-8.4zM1208.7 260.6l4.2-7.2h8.4l4.2 7.2l-4.2 7.2h-8.4zM1208.7 275.1l4.2-7.2h8.4l4.2 7.2l-4.2 7.2h-8.4zM1208.7 289.6l4.2-7.2h8.4l4.2 7.2l-4.2 7.2h-8.4zM1208.7 304.1l4.2-7.2h8.4l4.2 7.2l-4.2 7.2h-8.4zM1208.7 318.6l4.2-7.2h8.4l4.2 7.2l-4.2 7.2h-8.4zM1208.7 333.1l4.2-7.2h8.4l4.2 7.2l-4.2 7.2h-8.4zM1208.7 347.6l4.2-7.2h8.4l4.2 7.2l-4.2 7.2h-8.4zM1208.7 362l4.2-7.2h8.4l4.2 7.2l-4.2 7.2h-8.4zM1208.7 376.5l4.2-7.2h8.4l4.2 7.2l-4.2 7.2h-8.4zM1208.7 391l4.2-7.2h8.4l4.2 7.2l-4.2 7.2h-8.4zM1208.7 405.5l4.2-7.2h8.4l4.2 7.2l-4.2 7.2h-8.4zM1208.7 420l4.2-7.2h8.4l4.2 7.2l-4.2 7.2h-8.4zM1208.7 434.5l4.2-7.2h8.4l4.2 7.2l-4.2 7.2h-8.4zM1208.7 449l4.2-7.2h8.4l4.2 7.2l-4.2 7.2h-8.4zM1208.7 463.5l4.2-7.2h8.4l4.2 7.2l-4.2 7.2h-8.4zM1208.7 478l4.2-7.2h8.4l4.2 7.2l-4.2 7.2h-8.4zM1208.7 492.4l4.2-7.2h8.4l4.2 7.2l-4.2 7.2h-8.4zM1208.7 506.9l4.2-7.2h8.4l4.2 7.2l-4.2 7.2h-8.4zM1208.7 521.4l4.2-7.2h8.4l4.2 7.2l-4.2 7.2h-8.4zM1208.7 535.9l4.2-7.2h8.4l4.2 7.2l-4.2 7.2h-8.4zM1208.7 550.4l4.2-7.2h8.4l4.2 7.2l-4.2 7.2h-8.4zM1208.7 564.9l4.2-7.2h8.4l4.2 7.2l-4.2 7.2h-8.4zM1208.7 579.4l4.2-7.2h8.4l4.2 7.2l-4.2 7.2h-8.4zM1208.7 593.9l4.2-7.2h8.4l4.2 7.2l-4.2 7.2h-8.4zM1208.7 608.3l4.2-7.2h8.4l4.2 7.2l-4.2 7.2h-8.4zM1208.7 622.8l4.2-7.2h8.4l4.2 7.2l-4.2 7.2h-8.4zM1208.7 637.3l4.2-7.2h8.4l4.2 7.2l-4.2 7.2h-8.4zM1208.7 651.8l4.2-7.2h8.4l4.2 7.2l-4.2 7.2h-8.4zM1208.7 666.3l4.2-7.2h8.4l4.2 7.2l-4.2 7.2h-8.4zM1208.7 680.8l4.2-7.2h8.4l4.2 7.2l-4.2 7.2h-8.4zM1208.7 695.3l4.2-7.2h8.4l4.2 7.2l-4.2 7.2h-8.4zM1208.7 709.8l4.2-7.2h8.4l4.2 7.2l-4.2 7.2h-8.4zM1208.7 724.3l4.2-7.2h8.4l4.2 7.2l-4.2 7.2h-8.4zM1208.7 738.7l4.2-7.2h8.4l4.2 7.2l-4.2 7.2h-8.4zM1208.7 753.2l4.2-7.2h8.4l4.2 7.2l-4.2 7.2h-8.4zM1208.7 767.7l4.2-7.2h8.4l4.2 7.2l-4.2 7.2h-8.4zM1208.7 782.2l4.2-7.2h8.4l4.2 7.2l-4.2 7.2h-8.4zM1208.7 796.7l4.2-7.2h8.4l4.2 7.2l-4.2 7.2h-8.4zM1208.7 811.2l4.2-7.2h8.4l4.2 7.2l-4.2 7.2h-8.4zM1221.3 238.9l4.2-7.2h8.4l4.2 7.2l-4.2 7.2h-8.4zM1221.3 253.4l4.2-7.2h8.4l4.2 7.2l-4.2 7.2h-8.4zM1221.3 267.9l4.2-7.2h8.4l4.2 7.2l-4.2 7.2h-8.4zM1221.3 282.4l4.2-7.2h8.4l4.2 7.2l-4.2 7.2h-8.4zM1221.3 296.8l4.2-7.2h8.4l4.2 7.2l-4.2 7.2h-8.4zM1221.3 311.3l4.2-7.2h8.4l4.2 7.2l-4.2 7.2h-8.4zM1221.3 325.8l4.2-7.2h8.4l4.2 7.2l-4.2 7.2h-8.4zM1221.3 340.3l4.2-7.2h8.4l4.2 7.2l-4.2 7.2h-8.4zM1221.3 354.8l4.2-7.2h8.4l4.2 7.2l-4.2 7.2h-8.4zM1221.3 369.3l4.2-7.2h8.4l4.2 7.2l-4.2 7.2h-8.4zM1221.3 383.8l4.2-7.2h8.4l4.2 7.2l-4.2 7.2h-8.4zM1221.3 398.3l4.2-7.2h8.4l4.2 7.2l-4.2 7.2h-8.4zM1221.3 412.8l4.2-7.2h8.4l4.2 7.2l-4.2 7.2h-8.4zM1221.3 427.2l4.2-7.2h8.4l4.2 7.2l-4.2 7.2h-8.4zM1221.3 441.7l4.2-7.2h8.4l4.2 7.2l-4.2 7.2h-8.4zM1221.3 456.2l4.2-7.2h8.4l4.2 7.2l-4.2 7.2h-8.4zM1221.3 470.7l4.2-7.2h8.4l4.2 7.2l-4.2 7.2h-8.4zM1221.3 485.2l4.2-7.2h8.4l4.2 7.2l-4.2 7.2h-8.4zM1221.3 499.7l4.2-7.2h8.4l4.2 7.2l-4.2 7.2h-8.4zM1221.3 514.2l4.2-7.2h8.4l4.2 7.2l-4.2 7.2h-8.4zM1221.3 528.7l4.2-7.2h8.4l4.2 7.2l-4.2 7.2h-8.4zM1221.3 543.1l4.2-7.2h8.4l4.2 7.2l-4.2 7.2h-8.4zM1221.3 557.6l4.2-7.2h8.4l4.2 7.2l-4.2 7.2h-8.4zM1221.3 572.1l4.2-7.2h8.4l4.2 7.2l-4.2 7.2h-8.4zM1221.3 586.6l4.2-7.2h8.4l4.2 7.2l-4.2 7.2h-8.4zM1221.3 601.1l4.2-7.2h8.4l4.2 7.2l-4.2 7.2h-8.4zM1221.3 615.6l4.2-7.2h8.4l4.2 7.2l-4.2 7.2h-8.4zM1221.3 630.1l4.2-7.2h8.4l4.2 7.2l-4.2 7.2h-8.4zM1221.3 644.6l4.2-7.2h8.4l4.2 7.2l-4.2 7.2h-8.4zM1221.3 659.1l4.2-7.2h8.4l4.2 7.2l-4.2 7.2h-8.4zM1221.3 673.5l4.2-7.2h8.4l4.2 7.2l-4.2 7.2h-8.4zM1221.3 688l4.2-7.2h8.4l4.2 7.2l-4.2 7.2h-8.4zM1221.3 702.5l4.2-7.2h8.4l4.2 7.2l-4.2 7.2h-8.4zM1221.3 717l4.2-7.2h8.4l4.2 7.2l-4.2 7.2h-8.4zM1221.3 731.5l4.2-7.2h8.4l4.2 7.2l-4.2 7.2h-8.4zM1221.3 746l4.2-7.2h8.4l4.2 7.2l-4.2 7.2h-8.4zM1221.3 760.5l4.2-7.2h8.4l4.2 7.2l-4.2 7.2h-8.4zM1221.3 775l4.2-7.2h8.4l4.2 7.2l-4.2 7.2h-8.4zM1221.3 789.5l4.2-7.2h8.4l4.2 7.2l-4.2 7.2h-8.4zM1221.3 803.9l4.2-7.2h8.4l4.2 7.2l-4.2 7.2h-8.4zM1221.3 818.4l4.2-7.2h8.4l4.2 7.2l-4.2 7.2h-8.4zM1233.8 231.6l4.2-7.2h8.4l4.2 7.2l-4.2 7.2h-8.4zM1233.8 246.1l4.2-7.2h8.4l4.2 7.2l-4.2 7.2h-8.4zM1233.8 260.6l4.2-7.2h8.4l4.2 7.2l-4.2 7.2h-8.4zM1233.8 275.1l4.2-7.2h8.4l4.2 7.2l-4.2 7.2h-8.4zM1233.8 289.6l4.2-7.2h8.4l4.2 7.2l-4.2 7.2h-8.4zM1233.8 304.1l4.2-7.2h8.4l4.2 7.2l-4.2 7.2h-8.4zM1233.8 318.6l4.2-7.2h8.4l4.2 7.2l-4.2 7.2h-8.4zM1233.8 333.1l4.2-7.2h8.4l4.2 7.2l-4.2 7.2h-8.4zM1233.8 347.6l4.2-7.2h8.4l4.2 7.2l-4.2 7.2h-8.4zM1233.8 362l4.2-7.2h8.4l4.2 7.2l-4.2 7.2h-8.4zM1233.8 376.5l4.2-7.2h8.4l4.2 7.2l-4.2 7.2h-8.4zM1233.8 391l4.2-7.2h8.4l4.2 7.2l-4.2 7.2h-8.4zM1233.8 405.5l4.2-7.2h8.4l4.2 7.2l-4.2 7.2h-8.4zM1233.8 420l4.2-7.2h8.4l4.2 7.2l-4.2 7.2h-8.4zM1233.8 434.5l4.2-7.2h8.4l4.2 7.2l-4.2 7.2h-8.4zM1233.8 449l4.2-7.2h8.4l4.2 7.2l-4.2 7.2h-8.4zM1233.8 463.5l4.2-7.2h8.4l4.2 7.2l-4.2 7.2h-8.4zM1233.8 478l4.2-7.2h8.4l4.2 7.2l-4.2 7.2h-8.4zM1233.8 492.4l4.2-7.2h8.4l4.2 7.2l-4.2 7.2h-8.4zM1233.8 506.9l4.2-7.2h8.4l4.2 7.2l-4.2 7.2h-8.4zM1233.8 521.4l4.2-7.2h8.4l4.2 7.2l-4.2 7.2h-8.4zM1233.8 535.9l4.2-7.2h8.4l4.2 7.2l-4.2 7.2h-8.4zM1233.8 550.4l4.2-7.2h8.4l4.2 7.2l-4.2 7.2h-8.4zM1233.8 564.9l4.2-7.2h8.4l4.2 7.2l-4.2 7.2h-8.4zM1233.8 579.4l4.2-7.2h8.4l4.2 7.2l-4.2 7.2h-8.4zM1233.8 593.9l4.2-7.2h8.4l4.2 7.2l-4.2 7.2h-8.4zM1233.8 608.3l4.2-7.2h8.4l4.2 7.2l-4.2 7.2h-8.4zM1233.8 622.8l4.2-7.2h8.4l4.2 7.2l-4.2 7.2h-8.4zM1233.8 637.3l4.2-7.2h8.4l4.2 7.2l-4.2 7.2h-8.4zM1233.8 651.8l4.2-7.2h8.4l4.2 7.2l-4.2 7.2h-8.4zM1233.8 666.3l4.2-7.2h8.4l4.2 7.2l-4.2 7.2h-8.4zM1233.8 680.8l4.2-7.2h8.4l4.2 7.2l-4.2 7.2h-8.4zM1233.8 695.3l4.2-7.2h8.4l4.2 7.2l-4.2 7.2h-8.4zM1233.8 709.8l4.2-7.2h8.4l4.2 7.2l-4.2 7.2h-8.4zM1233.8 724.3l4.2-7.2h8.4l4.2 7.2l-4.2 7.2h-8.4zM1233.8 738.7l4.2-7.2h8.4l4.2 7.2l-4.2 7.2h-8.4zM1233.8 753.2l4.2-7.2h8.4l4.2 7.2l-4.2 7.2h-8.4zM1233.8 767.7l4.2-7.2h8.4l4.2 7.2l-4.2 7.2h-8.4zM1233.8 782.2l4.2-7.2h8.4l4.2 7.2l-4.2 7.2h-8.4zM1233.8 796.7l4.2-7.2h8.4l4.2 7.2l-4.2 7.2h-8.4zM1233.8 811.2l4.2-7.2h8.4l4.2 7.2l-4.2 7.2h-8.4zM1246.4 238.9l4.2-7.2h8.4l4.2 7.2l-4.2 7.2h-8.4zM1246.4 253.4l4.2-7.2h8.4l4.2 7.2l-4.2 7.2h-8.4zM1246.4 267.9l4.2-7.2h8.4l4.2 7.2l-4.2 7.2h-8.4zM1246.4 282.4l4.2-7.2h8.4l4.2 7.2l-4.2 7.2h-8.4zM1246.4 296.8l4.2-7.2h8.4l4.2 7.2l-4.2 7.2h-8.4zM1246.4 311.3l4.2-7.2h8.4l4.2 7.2l-4.2 7.2h-8.4zM1246.4 325.8l4.2-7.2h8.4l4.2 7.2l-4.2 7.2h-8.4zM1246.4 340.3l4.2-7.2h8.4l4.2 7.2l-4.2 7.2h-8.4zM1246.4 354.8l4.2-7.2h8.4l4.2 7.2l-4.2 7.2h-8.4zM1246.4 369.3l4.2-7.2h8.4l4.2 7.2l-4.2 7.2h-8.4zM1246.4 383.8l4.2-7.2h8.4l4.2 7.2l-4.2 7.2h-8.4zM1246.4 398.3l4.2-7.2h8.4l4.2 7.2l-4.2 7.2h-8.4zM1246.4 412.8l4.2-7.2h8.4l4.2 7.2l-4.2 7.2h-8.4zM1246.4 427.2l4.2-7.2h8.4l4.2 7.2l-4.2 7.2h-8.4zM1246.4 441.7l4.2-7.2h8.4l4.2 7.2l-4.2 7.2h-8.4zM1246.4 456.2l4.2-7.2h8.4l4.2 7.2l-4.2 7.2h-8.4zM1246.4 470.7l4.2-7.2h8.4l4.2 7.2l-4.2 7.2h-8.4zM1246.4 485.2l4.2-7.2h8.4l4.2 7.2l-4.2 7.2h-8.4zM1246.4 499.7l4.2-7.2h8.4l4.2 7.2l-4.2 7.2h-8.4zM1246.4 514.2l4.2-7.2h8.4l4.2 7.2l-4.2 7.2h-8.4zM1246.4 528.7l4.2-7.2h8.4l4.2 7.2l-4.2 7.2h-8.4zM1246.4 543.1l4.2-7.2h8.4l4.2 7.2l-4.2 7.2h-8.4zM1246.4 557.6l4.2-7.2h8.4l4.2 7.2l-4.2 7.2h-8.4zM1246.4 572.1l4.2-7.2h8.4l4.2 7.2l-4.2 7.2h-8.4zM1246.4 586.6l4.2-7.2h8.4l4.2 7.2l-4.2 7.2h-8.4zM1246.4 601.1l4.2-7.2h8.4l4.2 7.2l-4.2 7.2h-8.4zM1246.4 615.6l4.2-7.2h8.4l4.2 7.2l-4.2 7.2h-8.4zM1246.4 630.1l4.2-7.2h8.4l4.2 7.2l-4.2 7.2h-8.4zM1246.4 644.6l4.2-7.2h8.4l4.2 7.2l-4.2 7.2h-8.4zM1246.4 659.1l4.2-7.2h8.4l4.2 7.2l-4.2 7.2h-8.4zM1246.4 673.5l4.2-7.2h8.4l4.2 7.2l-4.2 7.2h-8.4zM1246.4 688l4.2-7.2h8.4l4.2 7.2l-4.2 7.2h-8.4zM1246.4 702.5l4.2-7.2h8.4l4.2 7.2l-4.2 7.2h-8.4zM1246.4 717l4.2-7.2h8.4l4.2 7.2l-4.2 7.2h-8.4zM1246.4 731.5l4.2-7.2h8.4l4.2 7.2l-4.2 7.2h-8.4zM1246.4 746l4.2-7.2h8.4l4.2 7.2l-4.2 7.2h-8.4zM1246.4 760.5l4.2-7.2h8.4l4.2 7.2l-4.2 7.2h-8.4zM1246.4 775l4.2-7.2h8.4l4.2 7.2l-4.2 7.2h-8.4zM1246.4 789.5l4.2-7.2h8.4l4.2 7.2l-4.2 7.2h-8.4zM1246.4 803.9l4.2-7.2h8.4l4.2 7.2l-4.2 7.2h-8.4zM1246.4 818.4l4.2-7.2h8.4l4.2 7.2l-4.2 7.2h-8.4zM1258.9 231.6l4.2-7.2h8.4l4.2 7.2l-4.2 7.2h-8.4zM1258.9 246.1l4.2-7.2h8.4l4.2 7.2l-4.2 7.2h-8.4zM1258.9 260.6l4.2-7.2h8.4l4.2 7.2l-4.2 7.2h-8.4zM1258.9 275.1l4.2-7.2h8.4l4.2 7.2l-4.2 7.2h-8.4zM1258.9 289.6l4.2-7.2h8.4l4.2 7.2l-4.2 7.2h-8.4zM1258.9 304.1l4.2-7.2h8.4l4.2 7.2l-4.2 7.2h-8.4zM1258.9 318.6l4.2-7.2h8.4l4.2 7.2l-4.2 7.2h-8.4zM1258.9 333.1l4.2-7.2h8.4l4.2 7.2l-4.2 7.2h-8.4zM1258.9 347.6l4.2-7.2h8.4l4.2 7.2l-4.2 7.2h-8.4zM1258.9 362l4.2-7.2h8.4l4.2 7.2l-4.2 7.2h-8.4zM1258.9 376.5l4.2-7.2h8.4l4.2 7.2l-4.2 7.2h-8.4zM1258.9 391l4.2-7.2h8.4l4.2 7.2l-4.2 7.2h-8.4zM1258.9 405.5l4.2-7.2h8.4l4.2 7.2l-4.2 7.2h-8.4zM1258.9 420l4.2-7.2h8.4l4.2 7.2l-4.2 7.2h-8.4zM1258.9 434.5l4.2-7.2h8.4l4.2 7.2l-4.2 7.2h-8.4zM1258.9 449l4.2-7.2h8.4l4.2 7.2l-4.2 7.2h-8.4zM1258.9 463.5l4.2-7.2h8.4l4.2 7.2l-4.2 7.2h-8.4zM1258.9 478l4.2-7.2h8.4l4.2 7.2l-4.2 7.2h-8.4zM1258.9 492.4l4.2-7.2h8.4l4.2 7.2l-4.2 7.2h-8.4zM1258.9 506.9l4.2-7.2h8.4l4.2 7.2l-4.2 7.2h-8.4zM1258.9 521.4l4.2-7.2h8.4l4.2 7.2l-4.2 7.2h-8.4zM1258.9 535.9l4.2-7.2h8.4l4.2 7.2l-4.2 7.2h-8.4zM1258.9 550.4l4.2-7.2h8.4l4.2 7.2l-4.2 7.2h-8.4zM1258.9 564.9l4.2-7.2h8.4l4.2 7.2l-4.2 7.2h-8.4zM1258.9 579.4l4.2-7.2h8.4l4.2 7.2l-4.2 7.2h-8.4zM1258.9 593.9l4.2-7.2h8.4l4.2 7.2l-4.2 7.2h-8.4zM1258.9 608.3l4.2-7.2h8.4l4.2 7.2l-4.2 7.2h-8.4zM1258.9 622.8l4.2-7.2h8.4l4.2 7.2l-4.2 7.2h-8.4zM1258.9 637.3l4.2-7.2h8.4l4.2 7.2l-4.2 7.2h-8.4zM1258.9 651.8l4.2-7.2h8.4l4.2 7.2l-4.2 7.2h-8.4zM1258.9 666.3l4.2-7.2h8.4l4.2 7.2l-4.2 7.2h-8.4zM1258.9 680.8l4.2-7.2h8.4l4.2 7.2l-4.2 7.2h-8.4zM1258.9 695.3l4.2-7.2h8.4l4.2 7.2l-4.2 7.2h-8.4zM1258.9 709.8l4.2-7.2h8.4l4.2 7.2l-4.2 7.2h-8.4zM1258.9 724.3l4.2-7.2h8.4l4.2 7.2l-4.2 7.2h-8.4zM1258.9 738.7l4.2-7.2h8.4l4.2 7.2l-4.2 7.2h-8.4zM1258.9 753.2l4.2-7.2h8.4l4.2 7.2l-4.2 7.2h-8.4zM1258.9 767.7l4.2-7.2h8.4l4.2 7.2l-4.2 7.2h-8.4zM1258.9 782.2l4.2-7.2h8.4l4.2 7.2l-4.2 7.2h-8.4zM1258.9 796.7l4.2-7.2h8.4l4.2 7.2l-4.2 7.2h-8.4zM1258.9 811.2l4.2-7.2h8.4l4.2 7.2l-4.2 7.2h-8.4zM1271.4 238.9l4.2-7.2h8.4l4.2 7.2l-4.2 7.2h-8.4zM1271.4 253.4l4.2-7.2h8.4l4.2 7.2l-4.2 7.2h-8.4zM1271.4 267.9l4.2-7.2h8.4l4.2 7.2l-4.2 7.2h-8.4zM1271.4 282.4l4.2-7.2h8.4l4.2 7.2l-4.2 7.2h-8.4zM1271.4 296.8l4.2-7.2h8.4l4.2 7.2l-4.2 7.2h-8.4zM1271.4 311.3l4.2-7.2h8.4l4.2 7.2l-4.2 7.2h-8.4zM1271.4 325.8l4.2-7.2h8.4l4.2 7.2l-4.2 7.2h-8.4zM1271.4 340.3l4.2-7.2h8.4l4.2 7.2l-4.2 7.2h-8.4zM1271.4 354.8l4.2-7.2h8.4l4.2 7.2l-4.2 7.2h-8.4zM1271.4 369.3l4.2-7.2h8.4l4.2 7.2l-4.2 7.2h-8.4zM1271.4 383.8l4.2-7.2h8.4l4.2 7.2l-4.2 7.2h-8.4zM1271.4 398.3l4.2-7.2h8.4l4.2 7.2l-4.2 7.2h-8.4zM1271.4 412.8l4.2-7.2h8.4l4.2 7.2l-4.2 7.2h-8.4zM1271.4 427.2l4.2-7.2h8.4l4.2 7.2l-4.2 7.2h-8.4zM1271.4 441.7l4.2-7.2h8.4l4.2 7.2l-4.2 7.2h-8.4zM1271.4 456.2l4.2-7.2h8.4l4.2 7.2l-4.2 7.2h-8.4zM1271.4 470.7l4.2-7.2h8.4l4.2 7.2l-4.2 7.2h-8.4zM1271.4 485.2l4.2-7.2h8.4l4.2 7.2l-4.2 7.2h-8.4zM1271.4 499.7l4.2-7.2h8.4l4.2 7.2l-4.2 7.2h-8.4zM1271.4 514.2l4.2-7.2h8.4l4.2 7.2l-4.2 7.2h-8.4zM1271.4 528.7l4.2-7.2h8.4l4.2 7.2l-4.2 7.2h-8.4zM1271.4 543.1l4.2-7.2h8.4l4.2 7.2l-4.2 7.2h-8.4zM1271.4 557.6l4.2-7.2h8.4l4.2 7.2l-4.2 7.2h-8.4zM1271.4 572.1l4.2-7.2h8.4l4.2 7.2l-4.2 7.2h-8.4zM1271.4 586.6l4.2-7.2h8.4l4.2 7.2l-4.2 7.2h-8.4zM1271.4 601.1l4.2-7.2h8.4l4.2 7.2l-4.2 7.2h-8.4zM1271.4 615.6l4.2-7.2h8.4l4.2 7.2l-4.2 7.2h-8.4zM1271.4 630.1l4.2-7.2h8.4l4.2 7.2l-4.2 7.2h-8.4zM1271.4 644.6l4.2-7.2h8.4l4.2 7.2l-4.2 7.2h-8.4zM1271.4 659.1l4.2-7.2h8.4l4.2 7.2l-4.2 7.2h-8.4zM1271.4 673.5l4.2-7.2h8.4l4.2 7.2l-4.2 7.2h-8.4zM1271.4 688l4.2-7.2h8.4l4.2 7.2l-4.2 7.2h-8.4zM1271.4 702.5l4.2-7.2h8.4l4.2 7.2l-4.2 7.2h-8.4zM1271.4 717l4.2-7.2h8.4l4.2 7.2l-4.2 7.2h-8.4zM1271.4 731.5l4.2-7.2h8.4l4.2 7.2l-4.2 7.2h-8.4zM1271.4 746l4.2-7.2h8.4l4.2 7.2l-4.2 7.2h-8.4zM1271.4 760.5l4.2-7.2h8.4l4.2 7.2l-4.2 7.2h-8.4zM1271.4 775l4.2-7.2h8.4l4.2 7.2l-4.2 7.2h-8.4zM1271.4 789.5l4.2-7.2h8.4l4.2 7.2l-4.2 7.2h-8.4zM1271.4 803.9l4.2-7.2h8.4l4.2 7.2l-4.2 7.2h-8.4zM1271.4 818.4l4.2-7.2h8.4l4.2 7.2l-4.2 7.2h-8.4zM1284 231.6l4.2-7.2h8.4l4.2 7.2l-4.2 7.2h-8.4zM1284 246.1l4.2-7.2h8.4l4.2 7.2l-4.2 7.2h-8.4zM1284 260.6l4.2-7.2h8.4l4.2 7.2l-4.2 7.2h-8.4zM1284 275.1l4.2-7.2h8.4l4.2 7.2l-4.2 7.2h-8.4zM1284 289.6l4.2-7.2h8.4l4.2 7.2l-4.2 7.2h-8.4zM1284 304.1l4.2-7.2h8.4l4.2 7.2l-4.2 7.2h-8.4zM1284 318.6l4.2-7.2h8.4l4.2 7.2l-4.2 7.2h-8.4zM1284 333.1l4.2-7.2h8.4l4.2 7.2l-4.2 7.2h-8.4zM1284 347.6l4.2-7.2h8.4l4.2 7.2l-4.2 7.2h-8.4zM1284 362l4.2-7.2h8.4l4.2 7.2l-4.2 7.2h-8.4zM1284 376.5l4.2-7.2h8.4l4.2 7.2l-4.2 7.2h-8.4zM1284 391l4.2-7.2h8.4l4.2 7.2l-4.2 7.2h-8.4zM1284 405.5l4.2-7.2h8.4l4.2 7.2l-4.2 7.2h-8.4zM1284 420l4.2-7.2h8.4l4.2 7.2l-4.2 7.2h-8.4zM1284 434.5l4.2-7.2h8.4l4.2 7.2l-4.2 7.2h-8.4zM1284 449l4.2-7.2h8.4l4.2 7.2l-4.2 7.2h-8.4zM1284 463.5l4.2-7.2h8.4l4.2 7.2l-4.2 7.2h-8.4zM1284 478l4.2-7.2h8.4l4.2 7.2l-4.2 7.2h-8.4zM1284 492.4l4.2-7.2h8.4l4.2 7.2l-4.2 7.2h-8.4zM1284 506.9l4.2-7.2h8.4l4.2 7.2l-4.2 7.2h-8.4zM1284 521.4l4.2-7.2h8.4l4.2 7.2l-4.2 7.2h-8.4zM1284 535.9l4.2-7.2h8.4l4.2 7.2l-4.2 7.2h-8.4zM1284 550.4l4.2-7.2h8.4l4.2 7.2l-4.2 7.2h-8.4zM1284 564.9l4.2-7.2h8.4l4.2 7.2l-4.2 7.2h-8.4zM1284 579.4l4.2-7.2h8.4l4.2 7.2l-4.2 7.2h-8.4zM1284 593.9l4.2-7.2h8.4l4.2 7.2l-4.2 7.2h-8.4zM1284 608.3l4.2-7.2h8.4l4.2 7.2l-4.2 7.2h-8.4zM1284 622.8l4.2-7.2h8.4l4.2 7.2l-4.2 7.2h-8.4zM1284 637.3l4.2-7.2h8.4l4.2 7.2l-4.2 7.2h-8.4zM1284 651.8l4.2-7.2h8.4l4.2 7.2l-4.2 7.2h-8.4zM1284 666.3l4.2-7.2h8.4l4.2 7.2l-4.2 7.2h-8.4zM1284 680.8l4.2-7.2h8.4l4.2 7.2l-4.2 7.2h-8.4zM1284 695.3l4.2-7.2h8.4l4.2 7.2l-4.2 7.2h-8.4zM1284 709.8l4.2-7.2h8.4l4.2 7.2l-4.2 7.2h-8.4zM1284 724.3l4.2-7.2h8.4l4.2 7.2l-4.2 7.2h-8.4zM1284 738.7l4.2-7.2h8.4l4.2 7.2l-4.2 7.2h-8.4zM1284 753.2l4.2-7.2h8.4l4.2 7.2l-4.2 7.2h-8.4zM1284 767.7l4.2-7.2h8.4l4.2 7.2l-4.2 7.2h-8.4zM1284 782.2l4.2-7.2h8.4l4.2 7.2l-4.2 7.2h-8.4zM1284 796.7l4.2-7.2h8.4l4.2 7.2l-4.2 7.2h-8.4zM1284 811.2l4.2-7.2h8.4l4.2 7.2l-4.2 7.2h-8.4zM1296.5 238.9l4.2-7.2h8.4l4.2 7.2l-4.2 7.2h-8.4zM1296.5 253.4l4.2-7.2h8.4l4.2 7.2l-4.2 7.2h-8.4zM1296.5 267.9l4.2-7.2h8.4l4.2 7.2l-4.2 7.2h-8.4zM1296.5 282.4l4.2-7.2h8.4l4.2 7.2l-4.2 7.2h-8.4zM1296.5 296.8l4.2-7.2h8.4l4.2 7.2l-4.2 7.2h-8.4zM1296.5 311.3l4.2-7.2h8.4l4.2 7.2l-4.2 7.2h-8.4zM1296.5 325.8l4.2-7.2h8.4l4.2 7.2l-4.2 7.2h-8.4zM1296.5 340.3l4.2-7.2h8.4l4.2 7.2l-4.2 7.2h-8.4zM1296.5 354.8l4.2-7.2h8.4l4.2 7.2l-4.2 7.2h-8.4zM1296.5 369.3l4.2-7.2h8.4l4.2 7.2l-4.2 7.2h-8.4zM1296.5 383.8l4.2-7.2h8.4l4.2 7.2l-4.2 7.2h-8.4zM1296.5 398.3l4.2-7.2h8.4l4.2 7.2l-4.2 7.2h-8.4zM1296.5 412.8l4.2-7.2h8.4l4.2 7.2l-4.2 7.2h-8.4zM1296.5 427.2l4.2-7.2h8.4l4.2 7.2l-4.2 7.2h-8.4zM1296.5 441.7l4.2-7.2h8.4l4.2 7.2l-4.2 7.2h-8.4zM1296.5 456.2l4.2-7.2h8.4l4.2 7.2l-4.2 7.2h-8.4zM1296.5 470.7l4.2-7.2h8.4l4.2 7.2l-4.2 7.2h-8.4zM1296.5 485.2l4.2-7.2h8.4l4.2 7.2l-4.2 7.2h-8.4zM1296.5 499.7l4.2-7.2h8.4l4.2 7.2l-4.2 7.2h-8.4zM1296.5 514.2l4.2-7.2h8.4l4.2 7.2l-4.2 7.2h-8.4zM1296.5 528.7l4.2-7.2h8.4l4.2 7.2l-4.2 7.2h-8.4zM1296.5 543.1l4.2-7.2h8.4l4.2 7.2l-4.2 7.2h-8.4zM1296.5 557.6l4.2-7.2h8.4l4.2 7.2l-4.2 7.2h-8.4zM1296.5 572.1l4.2-7.2h8.4l4.2 7.2l-4.2 7.2h-8.4zM1296.5 586.6l4.2-7.2h8.4l4.2 7.2l-4.2 7.2h-8.4zM1296.5 601.1l4.2-7.2h8.4l4.2 7.2l-4.2 7.2h-8.4zM1296.5 615.6l4.2-7.2h8.4l4.2 7.2l-4.2 7.2h-8.4zM1296.5 630.1l4.2-7.2h8.4l4.2 7.2l-4.2 7.2h-8.4zM1296.5 644.6l4.2-7.2h8.4l4.2 7.2l-4.2 7.2h-8.4zM1296.5 659.1l4.2-7.2h8.4l4.2 7.2l-4.2 7.2h-8.4zM1296.5 673.5l4.2-7.2h8.4l4.2 7.2l-4.2 7.2h-8.4zM1296.5 688l4.2-7.2h8.4l4.2 7.2l-4.2 7.2h-8.4zM1296.5 702.5l4.2-7.2h8.4l4.2 7.2l-4.2 7.2h-8.4zM1296.5 717l4.2-7.2h8.4l4.2 7.2l-4.2 7.2h-8.4zM1296.5 731.5l4.2-7.2h8.4l4.2 7.2l-4.2 7.2h-8.4zM1296.5 746l4.2-7.2h8.4l4.2 7.2l-4.2 7.2h-8.4zM1296.5 760.5l4.2-7.2h8.4l4.2 7.2l-4.2 7.2h-8.4zM1296.5 775l4.2-7.2h8.4l4.2 7.2l-4.2 7.2h-8.4zM1296.5 789.5l4.2-7.2h8.4l4.2 7.2l-4.2 7.2h-8.4zM1296.5 803.9l4.2-7.2h8.4l4.2 7.2l-4.2 7.2h-8.4zM1296.5 818.4l4.2-7.2h8.4l4.2 7.2l-4.2 7.2h-8.4zM1309.1 231.6l4.2-7.2h8.4l4.2 7.2l-4.2 7.2h-8.4zM1309.1 246.1l4.2-7.2h8.4l4.2 7.2l-4.2 7.2h-8.4zM1309.1 260.6l4.2-7.2h8.4l4.2 7.2l-4.2 7.2h-8.4zM1309.1 275.1l4.2-7.2h8.4l4.2 7.2l-4.2 7.2h-8.4zM1309.1 289.6l4.2-7.2h8.4l4.2 7.2l-4.2 7.2h-8.4zM1309.1 304.1l4.2-7.2h8.4l4.2 7.2l-4.2 7.2h-8.4zM1309.1 318.6l4.2-7.2h8.4l4.2 7.2l-4.2 7.2h-8.4zM1309.1 333.1l4.2-7.2h8.4l4.2 7.2l-4.2 7.2h-8.4zM1309.1 347.6l4.2-7.2h8.4l4.2 7.2l-4.2 7.2h-8.4zM1309.1 362l4.2-7.2h8.4l4.2 7.2l-4.2 7.2h-8.4zM1309.1 376.5l4.2-7.2h8.4l4.2 7.2l-4.2 7.2h-8.4zM1309.1 391l4.2-7.2h8.4l4.2 7.2l-4.2 7.2h-8.4zM1309.1 405.5l4.2-7.2h8.4l4.2 7.2l-4.2 7.2h-8.4zM1309.1 420l4.2-7.2h8.4l4.2 7.2l-4.2 7.2h-8.4zM1309.1 434.5l4.2-7.2h8.4l4.2 7.2l-4.2 7.2h-8.4zM1309.1 449l4.2-7.2h8.4l4.2 7.2l-4.2 7.2h-8.4zM1309.1 463.5l4.2-7.2h8.4l4.2 7.2l-4.2 7.2h-8.4zM1309.1 478l4.2-7.2h8.4l4.2 7.2l-4.2 7.2h-8.4zM1309.1 492.4l4.2-7.2h8.4l4.2 7.2l-4.2 7.2h-8.4zM1309.1 506.9l4.2-7.2h8.4l4.2 7.2l-4.2 7.2h-8.4zM1309.1 521.4l4.2-7.2h8.4l4.2 7.2l-4.2 7.2h-8.4zM1309.1 535.9l4.2-7.2h8.4l4.2 7.2l-4.2 7.2h-8.4zM1309.1 550.4l4.2-7.2h8.4l4.2 7.2l-4.2 7.2h-8.4zM1309.1 564.9l4.2-7.2h8.4l4.2 7.2l-4.2 7.2h-8.4zM1309.1 579.4l4.2-7.2h8.4l4.2 7.2l-4.2 7.2h-8.4zM1309.1 593.9l4.2-7.2h8.4l4.2 7.2l-4.2 7.2h-8.4zM1309.1 608.3l4.2-7.2h8.4l4.2 7.2l-4.2 7.2h-8.4zM1309.1 622.8l4.2-7.2h8.4l4.2 7.2l-4.2 7.2h-8.4zM1309.1 637.3l4.2-7.2h8.4l4.2 7.2l-4.2 7.2h-8.4zM1309.1 651.8l4.2-7.2h8.4l4.2 7.2l-4.2 7.2h-8.4zM1309.1 666.3l4.2-7.2h8.4l4.2 7.2l-4.2 7.2h-8.4zM1309.1 680.8l4.2-7.2h8.4l4.2 7.2l-4.2 7.2h-8.4zM1309.1 695.3l4.2-7.2h8.4l4.2 7.2l-4.2 7.2h-8.4zM1309.1 709.8l4.2-7.2h8.4l4.2 7.2l-4.2 7.2h-8.4zM1309.1 724.3l4.2-7.2h8.4l4.2 7.2l-4.2 7.2h-8.4zM1309.1 738.7l4.2-7.2h8.4l4.2 7.2l-4.2 7.2h-8.4zM1309.1 753.2l4.2-7.2h8.4l4.2 7.2l-4.2 7.2h-8.4zM1309.1 767.7l4.2-7.2h8.4l4.2 7.2l-4.2 7.2h-8.4zM1309.1 782.2l4.2-7.2h8.4l4.2 7.2l-4.2 7.2h-8.4zM1309.1 796.7l4.2-7.2h8.4l4.2 7.2l-4.2 7.2h-8.4zM1309.1 811.2l4.2-7.2h8.4l4.2 7.2l-4.2 7.2h-8.4zM1321.6 238.9l4.2-7.2h8.4l4.2 7.2l-4.2 7.2h-8.4zM1321.6 253.4l4.2-7.2h8.4l4.2 7.2l-4.2 7.2h-8.4zM1321.6 267.9l4.2-7.2h8.4l4.2 7.2l-4.2 7.2h-8.4zM1321.6 282.4l4.2-7.2h8.4l4.2 7.2l-4.2 7.2h-8.4zM1321.6 296.8l4.2-7.2h8.4l4.2 7.2l-4.2 7.2h-8.4zM1321.6 311.3l4.2-7.2h8.4l4.2 7.2l-4.2 7.2h-8.4zM1321.6 325.8l4.2-7.2h8.4l4.2 7.2l-4.2 7.2h-8.4zM1321.6 340.3l4.2-7.2h8.4l4.2 7.2l-4.2 7.2h-8.4zM1321.6 354.8l4.2-7.2h8.4l4.2 7.2l-4.2 7.2h-8.4zM1321.6 369.3l4.2-7.2h8.4l4.2 7.2l-4.2 7.2h-8.4zM1321.6 383.8l4.2-7.2h8.4l4.2 7.2l-4.2 7.2h-8.4zM1321.6 398.3l4.2-7.2h8.4l4.2 7.2l-4.2 7.2h-8.4zM1321.6 412.8l4.2-7.2h8.4l4.2 7.2l-4.2 7.2h-8.4zM1321.6 427.2l4.2-7.2h8.4l4.2 7.2l-4.2 7.2h-8.4zM1321.6 441.7l4.2-7.2h8.4l4.2 7.2l-4.2 7.2h-8.4zM1321.6 456.2l4.2-7.2h8.4l4.2 7.2l-4.2 7.2h-8.4zM1321.6 470.7l4.2-7.2h8.4l4.2 7.2l-4.2 7.2h-8.4zM1321.6 485.2l4.2-7.2h8.4l4.2 7.2l-4.2 7.2h-8.4zM1321.6 499.7l4.2-7.2h8.4l4.2 7.2l-4.2 7.2h-8.4zM1321.6 514.2l4.2-7.2h8.4l4.2 7.2l-4.2 7.2h-8.4zM1321.6 528.7l4.2-7.2h8.4l4.2 7.2l-4.2 7.2h-8.4zM1321.6 543.1l4.2-7.2h8.4l4.2 7.2l-4.2 7.2h-8.4zM1321.6 557.6l4.2-7.2h8.4l4.2 7.2l-4.2 7.2h-8.4zM1321.6 572.1l4.2-7.2h8.4l4.2 7.2l-4.2 7.2h-8.4zM1321.6 586.6l4.2-7.2h8.4l4.2 7.2l-4.2 7.2h-8.4zM1321.6 601.1l4.2-7.2h8.4l4.2 7.2l-4.2 7.2h-8.4zM1321.6 615.6l4.2-7.2h8.4l4.2 7.2l-4.2 7.2h-8.4zM1321.6 630.1l4.2-7.2h8.4l4.2 7.2l-4.2 7.2h-8.4zM1321.6 644.6l4.2-7.2h8.4l4.2 7.2l-4.2 7.2h-8.4zM1321.6 659.1l4.2-7.2h8.4l4.2 7.2l-4.2 7.2h-8.4zM1321.6 673.5l4.2-7.2h8.4l4.2 7.2l-4.2 7.2h-8.4zM1321.6 688l4.2-7.2h8.4l4.2 7.2l-4.2 7.2h-8.4zM1321.6 702.5l4.2-7.2h8.4l4.2 7.2l-4.2 7.2h-8.4zM1321.6 717l4.2-7.2h8.4l4.2 7.2l-4.2 7.2h-8.4zM1321.6 731.5l4.2-7.2h8.4l4.2 7.2l-4.2 7.2h-8.4zM1321.6 746l4.2-7.2h8.4l4.2 7.2l-4.2 7.2h-8.4zM1321.6 760.5l4.2-7.2h8.4l4.2 7.2l-4.2 7.2h-8.4zM1321.6 775l4.2-7.2h8.4l4.2 7.2l-4.2 7.2h-8.4zM1321.6 789.5l4.2-7.2h8.4l4.2 7.2l-4.2 7.2h-8.4zM1321.6 803.9l4.2-7.2h8.4l4.2 7.2l-4.2 7.2h-8.4zM1321.6 818.4l4.2-7.2h8.4l4.2 7.2l-4.2 7.2h-8.4zM1334.2 231.6l4.2-7.2h8.4l4.2 7.2l-4.2 7.2h-8.4zM1334.2 246.1l4.2-7.2h8.4l4.2 7.2l-4.2 7.2h-8.4zM1334.2 260.6l4.2-7.2h8.4l4.2 7.2l-4.2 7.2h-8.4zM1334.2 275.1l4.2-7.2h8.4l4.2 7.2l-4.2 7.2h-8.4zM1334.2 289.6l4.2-7.2h8.4l4.2 7.2l-4.2 7.2h-8.4zM1334.2 304.1l4.2-7.2h8.4l4.2 7.2l-4.2 7.2h-8.4zM1334.2 318.6l4.2-7.2h8.4l4.2 7.2l-4.2 7.2h-8.4zM1334.2 333.1l4.2-7.2h8.4l4.2 7.2l-4.2 7.2h-8.4zM1334.2 347.6l4.2-7.2h8.4l4.2 7.2l-4.2 7.2h-8.4zM1334.2 362l4.2-7.2h8.4l4.2 7.2l-4.2 7.2h-8.4zM1334.2 376.5l4.2-7.2h8.4l4.2 7.2l-4.2 7.2h-8.4zM1334.2 391l4.2-7.2h8.4l4.2 7.2l-4.2 7.2h-8.4zM1334.2 405.5l4.2-7.2h8.4l4.2 7.2l-4.2 7.2h-8.4zM1334.2 420l4.2-7.2h8.4l4.2 7.2l-4.2 7.2h-8.4zM1334.2 434.5l4.2-7.2h8.4l4.2 7.2l-4.2 7.2h-8.4zM1334.2 449l4.2-7.2h8.4l4.2 7.2l-4.2 7.2h-8.4zM1334.2 463.5l4.2-7.2h8.4l4.2 7.2l-4.2 7.2h-8.4zM1334.2 478l4.2-7.2h8.4l4.2 7.2l-4.2 7.2h-8.4zM1334.2 492.4l4.2-7.2h8.4l4.2 7.2l-4.2 7.2h-8.4zM1334.2 506.9l4.2-7.2h8.4l4.2 7.2l-4.2 7.2h-8.4zM1334.2 521.4l4.2-7.2h8.4l4.2 7.2l-4.2 7.2h-8.4zM1334.2 535.9l4.2-7.2h8.4l4.2 7.2l-4.2 7.2h-8.4zM1334.2 550.4l4.2-7.2h8.4l4.2 7.2l-4.2 7.2h-8.4zM1334.2 564.9l4.2-7.2h8.4l4.2 7.2l-4.2 7.2h-8.4zM1334.2 579.4l4.2-7.2h8.4l4.2 7.2l-4.2 7.2h-8.4zM1334.2 593.9l4.2-7.2h8.4l4.2 7.2l-4.2 7.2h-8.4zM1334.2 608.3l4.2-7.2h8.4l4.2 7.2l-4.2 7.2h-8.4zM1334.2 622.8l4.2-7.2h8.4l4.2 7.2l-4.2 7.2h-8.4zM1334.2 637.3l4.2-7.2h8.4l4.2 7.2l-4.2 7.2h-8.4zM1334.2 651.8l4.2-7.2h8.4l4.2 7.2l-4.2 7.2h-8.4zM1334.2 666.3l4.2-7.2h8.4l4.2 7.2l-4.2 7.2h-8.4zM1334.2 680.8l4.2-7.2h8.4l4.2 7.2l-4.2 7.2h-8.4zM1334.2 695.3l4.2-7.2h8.4l4.2 7.2l-4.2 7.2h-8.4zM1334.2 709.8l4.2-7.2h8.4l4.2 7.2l-4.2 7.2h-8.4zM1334.2 724.3l4.2-7.2h8.4l4.2 7.2l-4.2 7.2h-8.4zM1334.2 738.7l4.2-7.2h8.4l4.2 7.2l-4.2 7.2h-8.4zM1334.2 753.2l4.2-7.2h8.4l4.2 7.2l-4.2 7.2h-8.4zM1334.2 767.7l4.2-7.2h8.4l4.2 7.2l-4.2 7.2h-8.4zM1334.2 782.2l4.2-7.2h8.4l4.2 7.2l-4.2 7.2h-8.4zM1334.2 796.7l4.2-7.2h8.4l4.2 7.2l-4.2 7.2h-8.4zM1334.2 811.2l4.2-7.2h8.4l4.2 7.2l-4.2 7.2h-8.4zM1346.7 238.9l4.2-7.2h8.4l4.2 7.2l-4.2 7.2h-8.4zM1346.7 253.4l4.2-7.2h8.4l4.2 7.2l-4.2 7.2h-8.4zM1346.7 267.9l4.2-7.2h8.4l4.2 7.2l-4.2 7.2h-8.4zM1346.7 282.4l4.2-7.2h8.4l4.2 7.2l-4.2 7.2h-8.4zM1346.7 296.8l4.2-7.2h8.4l4.2 7.2l-4.2 7.2h-8.4zM1346.7 311.3l4.2-7.2h8.4l4.2 7.2l-4.2 7.2h-8.4zM1346.7 325.8l4.2-7.2h8.4l4.2 7.2l-4.2 7.2h-8.4zM1346.7 340.3l4.2-7.2h8.4l4.2 7.2l-4.2 7.2h-8.4zM1346.7 354.8l4.2-7.2h8.4l4.2 7.2l-4.2 7.2h-8.4zM1346.7 369.3l4.2-7.2h8.4l4.2 7.2l-4.2 7.2h-8.4zM1346.7 383.8l4.2-7.2h8.4l4.2 7.2l-4.2 7.2h-8.4zM1346.7 398.3l4.2-7.2h8.4l4.2 7.2l-4.2 7.2h-8.4zM1346.7 412.8l4.2-7.2h8.4l4.2 7.2l-4.2 7.2h-8.4zM1346.7 427.2l4.2-7.2h8.4l4.2 7.2l-4.2 7.2h-8.4zM1346.7 441.7l4.2-7.2h8.4l4.2 7.2l-4.2 7.2h-8.4zM1346.7 456.2l4.2-7.2h8.4l4.2 7.2l-4.2 7.2h-8.4zM1346.7 470.7l4.2-7.2h8.4l4.2 7.2l-4.2 7.2h-8.4zM1346.7 485.2l4.2-7.2h8.4l4.2 7.2l-4.2 7.2h-8.4zM1346.7 499.7l4.2-7.2h8.4l4.2 7.2l-4.2 7.2h-8.4zM1346.7 514.2l4.2-7.2h8.4l4.2 7.2l-4.2 7.2h-8.4zM1346.7 528.7l4.2-7.2h8.4l4.2 7.2l-4.2 7.2h-8.4zM1346.7 543.1l4.2-7.2h8.4l4.2 7.2l-4.2 7.2h-8.4zM1346.7 557.6l4.2-7.2h8.4l4.2 7.2l-4.2 7.2h-8.4zM1346.7 572.1l4.2-7.2h8.4l4.2 7.2l-4.2 7.2h-8.4zM1346.7 586.6l4.2-7.2h8.4l4.2 7.2l-4.2 7.2h-8.4zM1346.7 601.1l4.2-7.2h8.4l4.2 7.2l-4.2 7.2h-8.4zM1346.7 615.6l4.2-7.2h8.4l4.2 7.2l-4.2 7.2h-8.4zM1346.7 630.1l4.2-7.2h8.4l4.2 7.2l-4.2 7.2h-8.4zM1346.7 644.6l4.2-7.2h8.4l4.2 7.2l-4.2 7.2h-8.4zM1346.7 659.1l4.2-7.2h8.4l4.2 7.2l-4.2 7.2h-8.4zM1346.7 673.5l4.2-7.2h8.4l4.2 7.2l-4.2 7.2h-8.4zM1346.7 688l4.2-7.2h8.4l4.2 7.2l-4.2 7.2h-8.4zM1346.7 702.5l4.2-7.2h8.4l4.2 7.2l-4.2 7.2h-8.4zM1346.7 717l4.2-7.2h8.4l4.2 7.2l-4.2 7.2h-8.4zM1346.7 731.5l4.2-7.2h8.4l4.2 7.2l-4.2 7.2h-8.4zM1346.7 746l4.2-7.2h8.4l4.2 7.2l-4.2 7.2h-8.4zM1346.7 760.5l4.2-7.2h8.4l4.2 7.2l-4.2 7.2h-8.4zM1346.7 775l4.2-7.2h8.4l4.2 7.2l-4.2 7.2h-8.4zM1346.7 789.5l4.2-7.2h8.4l4.2 7.2l-4.2 7.2h-8.4zM1346.7 803.9l4.2-7.2h8.4l4.2 7.2l-4.2 7.2h-8.4zM1346.7 818.4l4.2-7.2h8.4l4.2 7.2l-4.2 7.2h-8.4zM1359.3 231.6l4.2-7.2h8.4l4.2 7.2l-4.2 7.2h-8.4zM1359.3 246.1l4.2-7.2h8.4l4.2 7.2l-4.2 7.2h-8.4zM1359.3 260.6l4.2-7.2h8.4l4.2 7.2l-4.2 7.2h-8.4zM1359.3 275.1l4.2-7.2h8.4l4.2 7.2l-4.2 7.2h-8.4zM1359.3 289.6l4.2-7.2h8.4l4.2 7.2l-4.2 7.2h-8.4zM1359.3 304.1l4.2-7.2h8.4l4.2 7.2l-4.2 7.2h-8.4zM1359.3 318.6l4.2-7.2h8.4l4.2 7.2l-4.2 7.2h-8.4zM1359.3 333.1l4.2-7.2h8.4l4.2 7.2l-4.2 7.2h-8.4zM1359.3 347.6l4.2-7.2h8.4l4.2 7.2l-4.2 7.2h-8.4zM1359.3 362l4.2-7.2h8.4l4.2 7.2l-4.2 7.2h-8.4zM1359.3 376.5l4.2-7.2h8.4l4.2 7.2l-4.2 7.2h-8.4zM1359.3 391l4.2-7.2h8.4l4.2 7.2l-4.2 7.2h-8.4zM1359.3 405.5l4.2-7.2h8.4l4.2 7.2l-4.2 7.2h-8.4zM1359.3 420l4.2-7.2h8.4l4.2 7.2l-4.2 7.2h-8.4zM1359.3 434.5l4.2-7.2h8.4l4.2 7.2l-4.2 7.2h-8.4zM1359.3 449l4.2-7.2h8.4l4.2 7.2l-4.2 7.2h-8.4zM1359.3 463.5l4.2-7.2h8.4l4.2 7.2l-4.2 7.2h-8.4zM1359.3 478l4.2-7.2h8.4l4.2 7.2l-4.2 7.2h-8.4zM1359.3 492.4l4.2-7.2h8.4l4.2 7.2l-4.2 7.2h-8.4zM1359.3 506.9l4.2-7.2h8.4l4.2 7.2l-4.2 7.2h-8.4zM1359.3 521.4l4.2-7.2h8.4l4.2 7.2l-4.2 7.2h-8.4zM1359.3 535.9l4.2-7.2h8.4l4.2 7.2l-4.2 7.2h-8.4zM1359.3 550.4l4.2-7.2h8.4l4.2 7.2l-4.2 7.2h-8.4zM1359.3 564.9l4.2-7.2h8.4l4.2 7.2l-4.2 7.2h-8.4zM1359.3 579.4l4.2-7.2h8.4l4.2 7.2l-4.2 7.2h-8.4zM1359.3 593.9l4.2-7.2h8.4l4.2 7.2l-4.2 7.2h-8.4zM1359.3 608.3l4.2-7.2h8.4l4.2 7.2l-4.2 7.2h-8.4zM1359.3 622.8l4.2-7.2h8.4l4.2 7.2l-4.2 7.2h-8.4zM1359.3 637.3l4.2-7.2h8.4l4.2 7.2l-4.2 7.2h-8.4zM1359.3 651.8l4.2-7.2h8.4l4.2 7.2l-4.2 7.2h-8.4zM1359.3 666.3l4.2-7.2h8.4l4.2 7.2l-4.2 7.2h-8.4zM1359.3 680.8l4.2-7.2h8.4l4.2 7.2l-4.2 7.2h-8.4zM1359.3 695.3l4.2-7.2h8.4l4.2 7.2l-4.2 7.2h-8.4zM1359.3 709.8l4.2-7.2h8.4l4.2 7.2l-4.2 7.2h-8.4zM1359.3 724.3l4.2-7.2h8.4l4.2 7.2l-4.2 7.2h-8.4zM1359.3 738.7l4.2-7.2h8.4l4.2 7.2l-4.2 7.2h-8.4zM1359.3 753.2l4.2-7.2h8.4l4.2 7.2l-4.2 7.2h-8.4zM1359.3 767.7l4.2-7.2h8.4l4.2 7.2l-4.2 7.2h-8.4zM1359.3 782.2l4.2-7.2h8.4l4.2 7.2l-4.2 7.2h-8.4zM1359.3 796.7l4.2-7.2h8.4l4.2 7.2l-4.2 7.2h-8.4zM1359.3 811.2l4.2-7.2h8.4l4.2 7.2l-4.2 7.2h-8.4zM1371.8 238.9l4.2-7.2h8.4l4.2 7.2l-4.2 7.2h-8.4zM1371.8 253.4l4.2-7.2h8.4l4.2 7.2l-4.2 7.2h-8.4zM1371.8 267.9l4.2-7.2h8.4l4.2 7.2l-4.2 7.2h-8.4zM1371.8 282.4l4.2-7.2h8.4l4.2 7.2l-4.2 7.2h-8.4zM1371.8 296.8l4.2-7.2h8.4l4.2 7.2l-4.2 7.2h-8.4zM1371.8 311.3l4.2-7.2h8.4l4.2 7.2l-4.2 7.2h-8.4zM1371.8 325.8l4.2-7.2h8.4l4.2 7.2l-4.2 7.2h-8.4zM1371.8 340.3l4.2-7.2h8.4l4.2 7.2l-4.2 7.2h-8.4zM1371.8 354.8l4.2-7.2h8.4l4.2 7.2l-4.2 7.2h-8.4zM1371.8 369.3l4.2-7.2h8.4l4.2 7.2l-4.2 7.2h-8.4zM1371.8 383.8l4.2-7.2h8.4l4.2 7.2l-4.2 7.2h-8.4zM1371.8 398.3l4.2-7.2h8.4l4.2 7.2l-4.2 7.2h-8.4zM1371.8 412.8l4.2-7.2h8.4l4.2 7.2l-4.2 7.2h-8.4zM1371.8 427.2l4.2-7.2h8.4l4.2 7.2l-4.2 7.2h-8.4zM1371.8 441.7l4.2-7.2h8.4l4.2 7.2l-4.2 7.2h-8.4zM1371.8 456.2l4.2-7.2h8.4l4.2 7.2l-4.2 7.2h-8.4zM1371.8 470.7l4.2-7.2h8.4l4.2 7.2l-4.2 7.2h-8.4zM1371.8 485.2l4.2-7.2h8.4l4.2 7.2l-4.2 7.2h-8.4zM1371.8 499.7l4.2-7.2h8.4l4.2 7.2l-4.2 7.2h-8.4zM1371.8 514.2l4.2-7.2h8.4l4.2 7.2l-4.2 7.2h-8.4zM1371.8 528.7l4.2-7.2h8.4l4.2 7.2l-4.2 7.2h-8.4zM1371.8 543.1l4.2-7.2h8.4l4.2 7.2l-4.2 7.2h-8.4zM1371.8 557.6l4.2-7.2h8.4l4.2 7.2l-4.2 7.2h-8.4zM1371.8 572.1l4.2-7.2h8.4l4.2 7.2l-4.2 7.2h-8.4zM1371.8 586.6l4.2-7.2h8.4l4.2 7.2l-4.2 7.2h-8.4zM1371.8 601.1l4.2-7.2h8.4l4.2 7.2l-4.2 7.2h-8.4zM1371.8 615.6l4.2-7.2h8.4l4.2 7.2l-4.2 7.2h-8.4zM1371.8 630.1l4.2-7.2h8.4l4.2 7.2l-4.2 7.2h-8.4zM1371.8 644.6l4.2-7.2h8.4l4.2 7.2l-4.2 7.2h-8.4zM1371.8 659.1l4.2-7.2h8.4l4.2 7.2l-4.2 7.2h-8.4zM1371.8 673.5l4.2-7.2h8.4l4.2 7.2l-4.2 7.2h-8.4zM1371.8 688l4.2-7.2h8.4l4.2 7.2l-4.2 7.2h-8.4zM1371.8 702.5l4.2-7.2h8.4l4.2 7.2l-4.2 7.2h-8.4zM1371.8 717l4.2-7.2h8.4l4.2 7.2l-4.2 7.2h-8.4zM1371.8 731.5l4.2-7.2h8.4l4.2 7.2l-4.2 7.2h-8.4zM1371.8 746l4.2-7.2h8.4l4.2 7.2l-4.2 7.2h-8.4zM1371.8 760.5l4.2-7.2h8.4l4.2 7.2l-4.2 7.2h-8.4zM1371.8 775l4.2-7.2h8.4l4.2 7.2l-4.2 7.2h-8.4zM1371.8 789.5l4.2-7.2h8.4l4.2 7.2l-4.2 7.2h-8.4zM1371.8 803.9l4.2-7.2h8.4l4.2 7.2l-4.2 7.2h-8.4zM1371.8 818.4l4.2-7.2h8.4l4.2 7.2l-4.2 7.2h-8.4zM1384.4 231.6l4.2-7.2h8.4l4.2 7.2l-4.2 7.2h-8.4zM1384.4 246.1l4.2-7.2h8.4l4.2 7.2l-4.2 7.2h-8.4zM1384.4 260.6l4.2-7.2h8.4l4.2 7.2l-4.2 7.2h-8.4zM1384.4 275.1l4.2-7.2h8.4l4.2 7.2l-4.2 7.2h-8.4zM1384.4 289.6l4.2-7.2h8.4l4.2 7.2l-4.2 7.2h-8.4zM1384.4 304.1l4.2-7.2h8.4l4.2 7.2l-4.2 7.2h-8.4zM1384.4 318.6l4.2-7.2h8.4l4.2 7.2l-4.2 7.2h-8.4zM1384.4 333.1l4.2-7.2h8.4l4.2 7.2l-4.2 7.2h-8.4zM1384.4 347.6l4.2-7.2h8.4l4.2 7.2l-4.2 7.2h-8.4zM1384.4 362l4.2-7.2h8.4l4.2 7.2l-4.2 7.2h-8.4zM1384.4 376.5l4.2-7.2h8.4l4.2 7.2l-4.2 7.2h-8.4zM1384.4 391l4.2-7.2h8.4l4.2 7.2l-4.2 7.2h-8.4zM1384.4 405.5l4.2-7.2h8.4l4.2 7.2l-4.2 7.2h-8.4zM1384.4 420l4.2-7.2h8.4l4.2 7.2l-4.2 7.2h-8.4zM1384.4 434.5l4.2-7.2h8.4l4.2 7.2l-4.2 7.2h-8.4zM1384.4 449l4.2-7.2h8.4l4.2 7.2l-4.2 7.2h-8.4zM1384.4 463.5l4.2-7.2h8.4l4.2 7.2l-4.2 7.2h-8.4zM1384.4 478l4.2-7.2h8.4l4.2 7.2l-4.2 7.2h-8.4zM1384.4 492.4l4.2-7.2h8.4l4.2 7.2l-4.2 7.2h-8.4zM1384.4 506.9l4.2-7.2h8.4l4.2 7.2l-4.2 7.2h-8.4zM1384.4 521.4l4.2-7.2h8.4l4.2 7.2l-4.2 7.2h-8.4zM1384.4 535.9l4.2-7.2h8.4l4.2 7.2l-4.2 7.2h-8.4zM1384.4 550.4l4.2-7.2h8.4l4.2 7.2l-4.2 7.2h-8.4zM1384.4 564.9l4.2-7.2h8.4l4.2 7.2l-4.2 7.2h-8.4zM1384.4 579.4l4.2-7.2h8.4l4.2 7.2l-4.2 7.2h-8.4zM1384.4 593.9l4.2-7.2h8.4l4.2 7.2l-4.2 7.2h-8.4zM1384.4 608.3l4.2-7.2h8.4l4.2 7.2l-4.2 7.2h-8.4zM1384.4 622.8l4.2-7.2h8.4l4.2 7.2l-4.2 7.2h-8.4zM1384.4 637.3l4.2-7.2h8.4l4.2 7.2l-4.2 7.2h-8.4zM1384.4 651.8l4.2-7.2h8.4l4.2 7.2l-4.2 7.2h-8.4zM1384.4 666.3l4.2-7.2h8.4l4.2 7.2l-4.2 7.2h-8.4zM1384.4 680.8l4.2-7.2h8.4l4.2 7.2l-4.2 7.2h-8.4zM1384.4 695.3l4.2-7.2h8.4l4.2 7.2l-4.2 7.2h-8.4zM1384.4 709.8l4.2-7.2h8.4l4.2 7.2l-4.2 7.2h-8.4zM1384.4 724.3l4.2-7.2h8.4l4.2 7.2l-4.2 7.2h-8.4zM1384.4 738.7l4.2-7.2h8.4l4.2 7.2l-4.2 7.2h-8.4zM1384.4 753.2l4.2-7.2h8.4l4.2 7.2l-4.2 7.2h-8.4zM1384.4 767.7l4.2-7.2h8.4l4.2 7.2l-4.2 7.2h-8.4zM1384.4 782.2l4.2-7.2h8.4l4.2 7.2l-4.2 7.2h-8.4zM1384.4 796.7l4.2-7.2h8.4l4.2 7.2l-4.2 7.2h-8.4zM1384.4 811.2l4.2-7.2h8.4l4.2 7.2l-4.2 7.2h-8.4zM1396.9 238.9l4.2-7.2h8.4l4.2 7.2l-4.2 7.2h-8.4zM1396.9 253.4l4.2-7.2h8.4l4.2 7.2l-4.2 7.2h-8.4zM1396.9 267.9l4.2-7.2h8.4l4.2 7.2l-4.2 7.2h-8.4zM1396.9 282.4l4.2-7.2h8.4l4.2 7.2l-4.2 7.2h-8.4zM1396.9 296.8l4.2-7.2h8.4l4.2 7.2l-4.2 7.2h-8.4zM1396.9 311.3l4.2-7.2h8.4l4.2 7.2l-4.2 7.2h-8.4zM1396.9 325.8l4.2-7.2h8.4l4.2 7.2l-4.2 7.2h-8.4zM1396.9 340.3l4.2-7.2h8.4l4.2 7.2l-4.2 7.2h-8.4zM1396.9 354.8l4.2-7.2h8.4l4.2 7.2l-4.2 7.2h-8.4zM1396.9 369.3l4.2-7.2h8.4l4.2 7.2l-4.2 7.2h-8.4zM1396.9 383.8l4.2-7.2h8.4l4.2 7.2l-4.2 7.2h-8.4zM1396.9 398.3l4.2-7.2h8.4l4.2 7.2l-4.2 7.2h-8.4zM1396.9 412.8l4.2-7.2h8.4l4.2 7.2l-4.2 7.2h-8.4zM1396.9 427.2l4.2-7.2h8.4l4.2 7.2l-4.2 7.2h-8.4zM1396.9 441.7l4.2-7.2h8.4l4.2 7.2l-4.2 7.2h-8.4zM1396.9 456.2l4.2-7.2h8.4l4.2 7.2l-4.2 7.2h-8.4zM1396.9 470.7l4.2-7.2h8.4l4.2 7.2l-4.2 7.2h-8.4zM1396.9 485.2l4.2-7.2h8.4l4.2 7.2l-4.2 7.2h-8.4zM1396.9 499.7l4.2-7.2h8.4l4.2 7.2l-4.2 7.2h-8.4zM1396.9 514.2l4.2-7.2h8.4l4.2 7.2l-4.2 7.2h-8.4zM1396.9 528.7l4.2-7.2h8.4l4.2 7.2l-4.2 7.2h-8.4zM1396.9 543.1l4.2-7.2h8.4l4.2 7.2l-4.2 7.2h-8.4zM1396.9 557.6l4.2-7.2h8.4l4.2 7.2l-4.2 7.2h-8.4zM1396.9 572.1l4.2-7.2h8.4l4.2 7.2l-4.2 7.2h-8.4zM1396.9 586.6l4.2-7.2h8.4l4.2 7.2l-4.2 7.2h-8.4zM1396.9 601.1l4.2-7.2h8.4l4.2 7.2l-4.2 7.2h-8.4zM1396.9 615.6l4.2-7.2h8.4l4.2 7.2l-4.2 7.2h-8.4zM1396.9 630.1l4.2-7.2h8.4l4.2 7.2l-4.2 7.2h-8.4zM1396.9 644.6l4.2-7.2h8.4l4.2 7.2l-4.2 7.2h-8.4zM1396.9 659.1l4.2-7.2h8.4l4.2 7.2l-4.2 7.2h-8.4zM1396.9 673.5l4.2-7.2h8.4l4.2 7.2l-4.2 7.2h-8.4zM1396.9 688l4.2-7.2h8.4l4.2 7.2l-4.2 7.2h-8.4zM1396.9 702.5l4.2-7.2h8.4l4.2 7.2l-4.2 7.2h-8.4zM1396.9 717l4.2-7.2h8.4l4.2 7.2l-4.2 7.2h-8.4zM1396.9 731.5l4.2-7.2h8.4l4.2 7.2l-4.2 7.2h-8.4zM1396.9 746l4.2-7.2h8.4l4.2 7.2l-4.2 7.2h-8.4zM1396.9 760.5l4.2-7.2h8.4l4.2 7.2l-4.2 7.2h-8.4zM1396.9 775l4.2-7.2h8.4l4.2 7.2l-4.2 7.2h-8.4zM1396.9 789.5l4.2-7.2h8.4l4.2 7.2l-4.2 7.2h-8.4zM1396.9 803.9l4.2-7.2h8.4l4.2 7.2l-4.2 7.2h-8.4zM1396.9 818.4l4.2-7.2h8.4l4.2 7.2l-4.2 7.2h-8.4zM1409.5 231.6l4.2-7.2h8.4l4.2 7.2l-4.2 7.2h-8.4zM1409.5 246.1l4.2-7.2h8.4l4.2 7.2l-4.2 7.2h-8.4zM1409.5 260.6l4.2-7.2h8.4l4.2 7.2l-4.2 7.2h-8.4zM1409.5 275.1l4.2-7.2h8.4l4.2 7.2l-4.2 7.2h-8.4zM1409.5 289.6l4.2-7.2h8.4l4.2 7.2l-4.2 7.2h-8.4zM1409.5 304.1l4.2-7.2h8.4l4.2 7.2l-4.2 7.2h-8.4zM1409.5 318.6l4.2-7.2h8.4l4.2 7.2l-4.2 7.2h-8.4zM1409.5 333.1l4.2-7.2h8.4l4.2 7.2l-4.2 7.2h-8.4zM1409.5 347.6l4.2-7.2h8.4l4.2 7.2l-4.2 7.2h-8.4zM1409.5 362l4.2-7.2h8.4l4.2 7.2l-4.2 7.2h-8.4zM1409.5 376.5l4.2-7.2h8.4l4.2 7.2l-4.2 7.2h-8.4zM1409.5 391l4.2-7.2h8.4l4.2 7.2l-4.2 7.2h-8.4zM1409.5 405.5l4.2-7.2h8.4l4.2 7.2l-4.2 7.2h-8.4zM1409.5 420l4.2-7.2h8.4l4.2 7.2l-4.2 7.2h-8.4zM1409.5 434.5l4.2-7.2h8.4l4.2 7.2l-4.2 7.2h-8.4zM1409.5 449l4.2-7.2h8.4l4.2 7.2l-4.2 7.2h-8.4zM1409.5 463.5l4.2-7.2h8.4l4.2 7.2l-4.2 7.2h-8.4zM1409.5 478l4.2-7.2h8.4l4.2 7.2l-4.2 7.2h-8.4zM1409.5 492.4l4.2-7.2h8.4l4.2 7.2l-4.2 7.2h-8.4zM1409.5 506.9l4.2-7.2h8.4l4.2 7.2l-4.2 7.2h-8.4zM1409.5 521.4l4.2-7.2h8.4l4.2 7.2l-4.2 7.2h-8.4zM1409.5 535.9l4.2-7.2h8.4l4.2 7.2l-4.2 7.2h-8.4zM1409.5 550.4l4.2-7.2h8.4l4.2 7.2l-4.2 7.2h-8.4zM1409.5 564.9l4.2-7.2h8.4l4.2 7.2l-4.2 7.2h-8.4zM1409.5 579.4l4.2-7.2h8.4l4.2 7.2l-4.2 7.2h-8.4zM1409.5 593.9l4.2-7.2h8.4l4.2 7.2l-4.2 7.2h-8.4zM1409.5 608.3l4.2-7.2h8.4l4.2 7.2l-4.2 7.2h-8.4zM1409.5 622.8l4.2-7.2h8.4l4.2 7.2l-4.2 7.2h-8.4zM1409.5 637.3l4.2-7.2h8.4l4.2 7.2l-4.2 7.2h-8.4zM1409.5 651.8l4.2-7.2h8.4l4.2 7.2l-4.2 7.2h-8.4zM1409.5 666.3l4.2-7.2h8.4l4.2 7.2l-4.2 7.2h-8.4zM1409.5 680.8l4.2-7.2h8.4l4.2 7.2l-4.2 7.2h-8.4zM1409.5 695.3l4.2-7.2h8.4l4.2 7.2l-4.2 7.2h-8.4zM1409.5 709.8l4.2-7.2h8.4l4.2 7.2l-4.2 7.2h-8.4zM1409.5 724.3l4.2-7.2h8.4l4.2 7.2l-4.2 7.2h-8.4zM1409.5 738.7l4.2-7.2h8.4l4.2 7.2l-4.2 7.2h-8.4zM1409.5 753.2l4.2-7.2h8.4l4.2 7.2l-4.2 7.2h-8.4zM1409.5 767.7l4.2-7.2h8.4l4.2 7.2l-4.2 7.2h-8.4zM1409.5 782.2l4.2-7.2h8.4l4.2 7.2l-4.2 7.2h-8.4zM1409.5 796.7l4.2-7.2h8.4l4.2 7.2l-4.2 7.2h-8.4zM1409.5 811.2l4.2-7.2h8.4l4.2 7.2l-4.2 7.2h-8.4zM1422 238.9l4.2-7.2h8.4l4.2 7.2l-4.2 7.2h-8.4zM1422 253.4l4.2-7.2h8.4l4.2 7.2l-4.2 7.2h-8.4zM1422 267.9l4.2-7.2h8.4l4.2 7.2l-4.2 7.2h-8.4zM1422 282.4l4.2-7.2h8.4l4.2 7.2l-4.2 7.2h-8.4zM1422 296.8l4.2-7.2h8.4l4.2 7.2l-4.2 7.2h-8.4zM1422 311.3l4.2-7.2h8.4l4.2 7.2l-4.2 7.2h-8.4zM1422 325.8l4.2-7.2h8.4l4.2 7.2l-4.2 7.2h-8.4zM1422 340.3l4.2-7.2h8.4l4.2 7.2l-4.2 7.2h-8.4zM1422 354.8l4.2-7.2h8.4l4.2 7.2l-4.2 7.2h-8.4zM1422 369.3l4.2-7.2h8.4l4.2 7.2l-4.2 7.2h-8.4zM1422 383.8l4.2-7.2h8.4l4.2 7.2l-4.2 7.2h-8.4zM1422 398.3l4.2-7.2h8.4l4.2 7.2l-4.2 7.2h-8.4zM1422 412.8l4.2-7.2h8.4l4.2 7.2l-4.2 7.2h-8.4zM1422 427.2l4.2-7.2h8.4l4.2 7.2l-4.2 7.2h-8.4zM1422 441.7l4.2-7.2h8.4l4.2 7.2l-4.2 7.2h-8.4zM1422 456.2l4.2-7.2h8.4l4.2 7.2l-4.2 7.2h-8.4zM1422 470.7l4.2-7.2h8.4l4.2 7.2l-4.2 7.2h-8.4zM1422 485.2l4.2-7.2h8.4l4.2 7.2l-4.2 7.2h-8.4zM1422 499.7l4.2-7.2h8.4l4.2 7.2l-4.2 7.2h-8.4zM1422 514.2l4.2-7.2h8.4l4.2 7.2l-4.2 7.2h-8.4zM1422 528.7l4.2-7.2h8.4l4.2 7.2l-4.2 7.2h-8.4zM1422 543.1l4.2-7.2h8.4l4.2 7.2l-4.2 7.2h-8.4zM1422 557.6l4.2-7.2h8.4l4.2 7.2l-4.2 7.2h-8.4zM1422 572.1l4.2-7.2h8.4l4.2 7.2l-4.2 7.2h-8.4zM1422 586.6l4.2-7.2h8.4l4.2 7.2l-4.2 7.2h-8.4zM1422 601.1l4.2-7.2h8.4l4.2 7.2l-4.2 7.2h-8.4zM1422 615.6l4.2-7.2h8.4l4.2 7.2l-4.2 7.2h-8.4zM1422 630.1l4.2-7.2h8.4l4.2 7.2l-4.2 7.2h-8.4zM1422 644.6l4.2-7.2h8.4l4.2 7.2l-4.2 7.2h-8.4zM1422 659.1l4.2-7.2h8.4l4.2 7.2l-4.2 7.2h-8.4zM1422 673.5l4.2-7.2h8.4l4.2 7.2l-4.2 7.2h-8.4zM1422 688l4.2-7.2h8.4l4.2 7.2l-4.2 7.2h-8.4zM1422 702.5l4.2-7.2h8.4l4.2 7.2l-4.2 7.2h-8.4zM1422 717l4.2-7.2h8.4l4.2 7.2l-4.2 7.2h-8.4zM1422 731.5l4.2-7.2h8.4l4.2 7.2l-4.2 7.2h-8.4zM1422 746l4.2-7.2h8.4l4.2 7.2l-4.2 7.2h-8.4zM1422 760.5l4.2-7.2h8.4l4.2 7.2l-4.2 7.2h-8.4zM1422 775l4.2-7.2h8.4l4.2 7.2l-4.2 7.2h-8.4zM1422 789.5l4.2-7.2h8.4l4.2 7.2l-4.2 7.2h-8.4zM1422 803.9l4.2-7.2h8.4l4.2 7.2l-4.2 7.2h-8.4zM1422 818.4l4.2-7.2h8.4l4.2 7.2l-4.2 7.2h-8.4zM1434.6 231.6l4.2-7.2h8.4l4.2 7.2l-4.2 7.2h-8.4zM1434.6 246.1l4.2-7.2h8.4l4.2 7.2l-4.2 7.2h-8.4zM1434.6 260.6l4.2-7.2h8.4l4.2 7.2l-4.2 7.2h-8.4zM1434.6 275.1l4.2-7.2h8.4l4.2 7.2l-4.2 7.2h-8.4zM1434.6 289.6l4.2-7.2h8.4l4.2 7.2l-4.2 7.2h-8.4zM1434.6 304.1l4.2-7.2h8.4l4.2 7.2l-4.2 7.2h-8.4zM1434.6 318.6l4.2-7.2h8.4l4.2 7.2l-4.2 7.2h-8.4zM1434.6 333.1l4.2-7.2h8.4l4.2 7.2l-4.2 7.2h-8.4zM1434.6 347.6l4.2-7.2h8.4l4.2 7.2l-4.2 7.2h-8.4zM1434.6 362l4.2-7.2h8.4l4.2 7.2l-4.2 7.2h-8.4zM1434.6 376.5l4.2-7.2h8.4l4.2 7.2l-4.2 7.2h-8.4zM1434.6 391l4.2-7.2h8.4l4.2 7.2l-4.2 7.2h-8.4zM1434.6 405.5l4.2-7.2h8.4l4.2 7.2l-4.2 7.2h-8.4zM1434.6 420l4.2-7.2h8.4l4.2 7.2l-4.2 7.2h-8.4zM1434.6 434.5l4.2-7.2h8.4l4.2 7.2l-4.2 7.2h-8.4zM1434.6 449l4.2-7.2h8.4l4.2 7.2l-4.2 7.2h-8.4zM1434.6 463.5l4.2-7.2h8.4l4.2 7.2l-4.2 7.2h-8.4zM1434.6 478l4.2-7.2h8.4l4.2 7.2l-4.2 7.2h-8.4zM1434.6 492.4l4.2-7.2h8.4l4.2 7.2l-4.2 7.2h-8.4zM1434.6 506.9l4.2-7.2h8.4l4.2 7.2l-4.2 7.2h-8.4zM1434.6 521.4l4.2-7.2h8.4l4.2 7.2l-4.2 7.2h-8.4zM1434.6 535.9l4.2-7.2h8.4l4.2 7.2l-4.2 7.2h-8.4zM1434.6 550.4l4.2-7.2h8.4l4.2 7.2l-4.2 7.2h-8.4zM1434.6 564.9l4.2-7.2h8.4l4.2 7.2l-4.2 7.2h-8.4zM1434.6 579.4l4.2-7.2h8.4l4.2 7.2l-4.2 7.2h-8.4zM1434.6 593.9l4.2-7.2h8.4l4.2 7.2l-4.2 7.2h-8.4zM1434.6 608.3l4.2-7.2h8.4l4.2 7.2l-4.2 7.2h-8.4zM1434.6 622.8l4.2-7.2h8.4l4.2 7.2l-4.2 7.2h-8.4zM1434.6 637.3l4.2-7.2h8.4l4.2 7.2l-4.2 7.2h-8.4zM1434.6 651.8l4.2-7.2h8.4l4.2 7.2l-4.2 7.2h-8.4zM1434.6 666.3l4.2-7.2h8.4l4.2 7.2l-4.2 7.2h-8.4zM1434.6 680.8l4.2-7.2h8.4l4.2 7.2l-4.2 7.2h-8.4zM1434.6 695.3l4.2-7.2h8.4l4.2 7.2l-4.2 7.2h-8.4zM1434.6 709.8l4.2-7.2h8.4l4.2 7.2l-4.2 7.2h-8.4zM1434.6 724.3l4.2-7.2h8.4l4.2 7.2l-4.2 7.2h-8.4zM1434.6 738.7l4.2-7.2h8.4l4.2 7.2l-4.2 7.2h-8.4zM1434.6 753.2l4.2-7.2h8.4l4.2 7.2l-4.2 7.2h-8.4zM1434.6 767.7l4.2-7.2h8.4l4.2 7.2l-4.2 7.2h-8.4zM1434.6 782.2l4.2-7.2h8.4l4.2 7.2l-4.2 7.2h-8.4zM1434.6 796.7l4.2-7.2h8.4l4.2 7.2l-4.2 7.2h-8.4zM1434.6 811.2l4.2-7.2h8.4l4.2 7.2l-4.2 7.2h-8.4zM1447.1 238.9l4.2-7.2h8.4l4.2 7.2l-4.2 7.2h-8.4zM1447.1 253.4l4.2-7.2h8.4l4.2 7.2l-4.2 7.2h-8.4zM1447.1 267.9l4.2-7.2h8.4l4.2 7.2l-4.2 7.2h-8.4zM1447.1 282.4l4.2-7.2h8.4l4.2 7.2l-4.2 7.2h-8.4zM1447.1 296.8l4.2-7.2h8.4l4.2 7.2l-4.2 7.2h-8.4zM1447.1 311.3l4.2-7.2h8.4l4.2 7.2l-4.2 7.2h-8.4zM1447.1 325.8l4.2-7.2h8.4l4.2 7.2l-4.2 7.2h-8.4zM1447.1 340.3l4.2-7.2h8.4l4.2 7.2l-4.2 7.2h-8.4zM1447.1 354.8l4.2-7.2h8.4l4.2 7.2l-4.2 7.2h-8.4zM1447.1 369.3l4.2-7.2h8.4l4.2 7.2l-4.2 7.2h-8.4zM1447.1 383.8l4.2-7.2h8.4l4.2 7.2l-4.2 7.2h-8.4zM1447.1 398.3l4.2-7.2h8.4l4.2 7.2l-4.2 7.2h-8.4zM1447.1 412.8l4.2-7.2h8.4l4.2 7.2l-4.2 7.2h-8.4zM1447.1 427.2l4.2-7.2h8.4l4.2 7.2l-4.2 7.2h-8.4zM1447.1 441.7l4.2-7.2h8.4l4.2 7.2l-4.2 7.2h-8.4zM1447.1 456.2l4.2-7.2h8.4l4.2 7.2l-4.2 7.2h-8.4zM1447.1 470.7l4.2-7.2h8.4l4.2 7.2l-4.2 7.2h-8.4zM1447.1 485.2l4.2-7.2h8.4l4.2 7.2l-4.2 7.2h-8.4zM1447.1 499.7l4.2-7.2h8.4l4.2 7.2l-4.2 7.2h-8.4zM1447.1 514.2l4.2-7.2h8.4l4.2 7.2l-4.2 7.2h-8.4zM1447.1 528.7l4.2-7.2h8.4l4.2 7.2l-4.2 7.2h-8.4zM1447.1 543.1l4.2-7.2h8.4l4.2 7.2l-4.2 7.2h-8.4zM1447.1 557.6l4.2-7.2h8.4l4.2 7.2l-4.2 7.2h-8.4zM1447.1 572.1l4.2-7.2h8.4l4.2 7.2l-4.2 7.2h-8.4zM1447.1 586.6l4.2-7.2h8.4l4.2 7.2l-4.2 7.2h-8.4zM1447.1 601.1l4.2-7.2h8.4l4.2 7.2l-4.2 7.2h-8.4zM1447.1 615.6l4.2-7.2h8.4l4.2 7.2l-4.2 7.2h-8.4zM1447.1 630.1l4.2-7.2h8.4l4.2 7.2l-4.2 7.2h-8.4zM1447.1 644.6l4.2-7.2h8.4l4.2 7.2l-4.2 7.2h-8.4zM1447.1 659.1l4.2-7.2h8.4l4.2 7.2l-4.2 7.2h-8.4zM1447.1 673.5l4.2-7.2h8.4l4.2 7.2l-4.2 7.2h-8.4zM1447.1 688l4.2-7.2h8.4l4.2 7.2l-4.2 7.2h-8.4zM1447.1 702.5l4.2-7.2h8.4l4.2 7.2l-4.2 7.2h-8.4zM1447.1 717l4.2-7.2h8.4l4.2 7.2l-4.2 7.2h-8.4zM1447.1 731.5l4.2-7.2h8.4l4.2 7.2l-4.2 7.2h-8.4zM1447.1 746l4.2-7.2h8.4l4.2 7.2l-4.2 7.2h-8.4zM1447.1 760.5l4.2-7.2h8.4l4.2 7.2l-4.2 7.2h-8.4zM1447.1 775l4.2-7.2h8.4l4.2 7.2l-4.2 7.2h-8.4zM1447.1 789.5l4.2-7.2h8.4l4.2 7.2l-4.2 7.2h-8.4zM1447.1 803.9l4.2-7.2h8.4l4.2 7.2l-4.2 7.2h-8.4zM1447.1 818.4l4.2-7.2h8.4l4.2 7.2l-4.2 7.2h-8.4zM1459.7 231.6l4.2-7.2h8.4l4.2 7.2l-4.2 7.2h-8.4zM1459.7 246.1l4.2-7.2h8.4l4.2 7.2l-4.2 7.2h-8.4zM1459.7 260.6l4.2-7.2h8.4l4.2 7.2l-4.2 7.2h-8.4zM1459.7 275.1l4.2-7.2h8.4l4.2 7.2l-4.2 7.2h-8.4zM1459.7 289.6l4.2-7.2h8.4l4.2 7.2l-4.2 7.2h-8.4zM1459.7 304.1l4.2-7.2h8.4l4.2 7.2l-4.2 7.2h-8.4zM1459.7 318.6l4.2-7.2h8.4l4.2 7.2l-4.2 7.2h-8.4zM1459.7 333.1l4.2-7.2h8.4l4.2 7.2l-4.2 7.2h-8.4zM1459.7 347.6l4.2-7.2h8.4l4.2 7.2l-4.2 7.2h-8.4zM1459.7 362l4.2-7.2h8.4l4.2 7.2l-4.2 7.2h-8.4zM1459.7 376.5l4.2-7.2h8.4l4.2 7.2l-4.2 7.2h-8.4zM1459.7 391l4.2-7.2h8.4l4.2 7.2l-4.2 7.2h-8.4zM1459.7 405.5l4.2-7.2h8.4l4.2 7.2l-4.2 7.2h-8.4zM1459.7 420l4.2-7.2h8.4l4.2 7.2l-4.2 7.2h-8.4zM1459.7 434.5l4.2-7.2h8.4l4.2 7.2l-4.2 7.2h-8.4zM1459.7 449l4.2-7.2h8.4l4.2 7.2l-4.2 7.2h-8.4zM1459.7 463.5l4.2-7.2h8.4l4.2 7.2l-4.2 7.2h-8.4zM1459.7 478l4.2-7.2h8.4l4.2 7.2l-4.2 7.2h-8.4zM1459.7 492.4l4.2-7.2h8.4l4.2 7.2l-4.2 7.2h-8.4zM1459.7 506.9l4.2-7.2h8.4l4.2 7.2l-4.2 7.2h-8.4zM1459.7 521.4l4.2-7.2h8.4l4.2 7.2l-4.2 7.2h-8.4zM1459.7 535.9l4.2-7.2h8.4l4.2 7.2l-4.2 7.2h-8.4zM1459.7 550.4l4.2-7.2h8.4l4.2 7.2l-4.2 7.2h-8.4zM1459.7 564.9l4.2-7.2h8.4l4.2 7.2l-4.2 7.2h-8.4zM1459.7 579.4l4.2-7.2h8.4l4.2 7.2l-4.2 7.2h-8.4zM1459.7 593.9l4.2-7.2h8.4l4.2 7.2l-4.2 7.2h-8.4zM1459.7 608.3l4.2-7.2h8.4l4.2 7.2l-4.2 7.2h-8.4zM1459.7 622.8l4.2-7.2h8.4l4.2 7.2l-4.2 7.2h-8.4zM1459.7 637.3l4.2-7.2h8.4l4.2 7.2l-4.2 7.2h-8.4zM1459.7 651.8l4.2-7.2h8.4l4.2 7.2l-4.2 7.2h-8.4zM1459.7 666.3l4.2-7.2h8.4l4.2 7.2l-4.2 7.2h-8.4zM1459.7 680.8l4.2-7.2h8.4l4.2 7.2l-4.2 7.2h-8.4zM1459.7 695.3l4.2-7.2h8.4l4.2 7.2l-4.2 7.2h-8.4zM1459.7 709.8l4.2-7.2h8.4l4.2 7.2l-4.2 7.2h-8.4zM1459.7 724.3l4.2-7.2h8.4l4.2 7.2l-4.2 7.2h-8.4zM1459.7 738.7l4.2-7.2h8.4l4.2 7.2l-4.2 7.2h-8.4zM1459.7 753.2l4.2-7.2h8.4l4.2 7.2l-4.2 7.2h-8.4zM1459.7 767.7l4.2-7.2h8.4l4.2 7.2l-4.2 7.2h-8.4zM1459.7 782.2l4.2-7.2h8.4l4.2 7.2l-4.2 7.2h-8.4zM1459.7 796.7l4.2-7.2h8.4l4.2 7.2l-4.2 7.2h-8.4zM1459.7 811.2l4.2-7.2h8.4l4.2 7.2l-4.2 7.2h-8.4zM1472.2 238.9l4.2-7.2h8.4l4.2 7.2l-4.2 7.2h-8.4zM1472.2 253.4l4.2-7.2h8.4l4.2 7.2l-4.2 7.2h-8.4zM1472.2 267.9l4.2-7.2h8.4l4.2 7.2l-4.2 7.2h-8.4zM1472.2 282.4l4.2-7.2h8.4l4.2 7.2l-4.2 7.2h-8.4zM1472.2 296.8l4.2-7.2h8.4l4.2 7.2l-4.2 7.2h-8.4zM1472.2 311.3l4.2-7.2h8.4l4.2 7.2l-4.2 7.2h-8.4zM1472.2 325.8l4.2-7.2h8.4l4.2 7.2l-4.2 7.2h-8.4zM1472.2 340.3l4.2-7.2h8.4l4.2 7.2l-4.2 7.2h-8.4zM1472.2 354.8l4.2-7.2h8.4l4.2 7.2l-4.2 7.2h-8.4zM1472.2 369.3l4.2-7.2h8.4l4.2 7.2l-4.2 7.2h-8.4zM1472.2 383.8l4.2-7.2h8.4l4.2 7.2l-4.2 7.2h-8.4zM1472.2 398.3l4.2-7.2h8.4l4.2 7.2l-4.2 7.2h-8.4zM1472.2 412.8l4.2-7.2h8.4l4.2 7.2l-4.2 7.2h-8.4zM1472.2 427.2l4.2-7.2h8.4l4.2 7.2l-4.2 7.2h-8.4zM1472.2 441.7l4.2-7.2h8.4l4.2 7.2l-4.2 7.2h-8.4zM1472.2 456.2l4.2-7.2h8.4l4.2 7.2l-4.2 7.2h-8.4zM1472.2 470.7l4.2-7.2h8.4l4.2 7.2l-4.2 7.2h-8.4zM1472.2 485.2l4.2-7.2h8.4l4.2 7.2l-4.2 7.2h-8.4zM1472.2 499.7l4.2-7.2h8.4l4.2 7.2l-4.2 7.2h-8.4zM1472.2 514.2l4.2-7.2h8.4l4.2 7.2l-4.2 7.2h-8.4zM1472.2 528.7l4.2-7.2h8.4l4.2 7.2l-4.2 7.2h-8.4zM1472.2 543.1l4.2-7.2h8.4l4.2 7.2l-4.2 7.2h-8.4zM1472.2 557.6l4.2-7.2h8.4l4.2 7.2l-4.2 7.2h-8.4zM1472.2 572.1l4.2-7.2h8.4l4.2 7.2l-4.2 7.2h-8.4zM1472.2 586.6l4.2-7.2h8.4l4.2 7.2l-4.2 7.2h-8.4zM1472.2 601.1l4.2-7.2h8.4l4.2 7.2l-4.2 7.2h-8.4zM1472.2 615.6l4.2-7.2h8.4l4.2 7.2l-4.2 7.2h-8.4zM1472.2 630.1l4.2-7.2h8.4l4.2 7.2l-4.2 7.2h-8.4zM1472.2 644.6l4.2-7.2h8.4l4.2 7.2l-4.2 7.2h-8.4zM1472.2 659.1l4.2-7.2h8.4l4.2 7.2l-4.2 7.2h-8.4zM1472.2 673.5l4.2-7.2h8.4l4.2 7.2l-4.2 7.2h-8.4zM1472.2 688l4.2-7.2h8.4l4.2 7.2l-4.2 7.2h-8.4zM1472.2 702.5l4.2-7.2h8.4l4.2 7.2l-4.2 7.2h-8.4zM1472.2 717l4.2-7.2h8.4l4.2 7.2l-4.2 7.2h-8.4zM1472.2 731.5l4.2-7.2h8.4l4.2 7.2l-4.2 7.2h-8.4zM1472.2 746l4.2-7.2h8.4l4.2 7.2l-4.2 7.2h-8.4zM1472.2 760.5l4.2-7.2h8.4l4.2 7.2l-4.2 7.2h-8.4zM1472.2 775l4.2-7.2h8.4l4.2 7.2l-4.2 7.2h-8.4zM1472.2 789.5l4.2-7.2h8.4l4.2 7.2l-4.2 7.2h-8.4zM1472.2 803.9l4.2-7.2h8.4l4.2 7.2l-4.2 7.2h-8.4zM1472.2 818.4l4.2-7.2h8.4l4.2 7.2l-4.2 7.2h-8.4zM1484.8 231.6l4.2-7.2h8.4l4.2 7.2l-4.2 7.2h-8.4zM1484.8 246.1l4.2-7.2h8.4l4.2 7.2l-4.2 7.2h-8.4zM1484.8 260.6l4.2-7.2h8.4l4.2 7.2l-4.2 7.2h-8.4zM1484.8 275.1l4.2-7.2h8.4l4.2 7.2l-4.2 7.2h-8.4zM1484.8 289.6l4.2-7.2h8.4l4.2 7.2l-4.2 7.2h-8.4zM1484.8 304.1l4.2-7.2h8.4l4.2 7.2l-4.2 7.2h-8.4zM1484.8 318.6l4.2-7.2h8.4l4.2 7.2l-4.2 7.2h-8.4zM1484.8 333.1l4.2-7.2h8.4l4.2 7.2l-4.2 7.2h-8.4zM1484.8 347.6l4.2-7.2h8.4l4.2 7.2l-4.2 7.2h-8.4zM1484.8 362l4.2-7.2h8.4l4.2 7.2l-4.2 7.2h-8.4zM1484.8 376.5l4.2-7.2h8.4l4.2 7.2l-4.2 7.2h-8.4zM1484.8 391l4.2-7.2h8.4l4.2 7.2l-4.2 7.2h-8.4zM1484.8 405.5l4.2-7.2h8.4l4.2 7.2l-4.2 7.2h-8.4zM1484.8 420l4.2-7.2h8.4l4.2 7.2l-4.2 7.2h-8.4zM1484.8 434.5l4.2-7.2h8.4l4.2 7.2l-4.2 7.2h-8.4zM1484.8 449l4.2-7.2h8.4l4.2 7.2l-4.2 7.2h-8.4zM1484.8 463.5l4.2-7.2h8.4l4.2 7.2l-4.2 7.2h-8.4zM1484.8 478l4.2-7.2h8.4l4.2 7.2l-4.2 7.2h-8.4zM1484.8 492.4l4.2-7.2h8.4l4.2 7.2l-4.2 7.2h-8.4zM1484.8 506.9l4.2-7.2h8.4l4.2 7.2l-4.2 7.2h-8.4zM1484.8 521.4l4.2-7.2h8.4l4.2 7.2l-4.2 7.2h-8.4zM1484.8 535.9l4.2-7.2h8.4l4.2 7.2l-4.2 7.2h-8.4zM1484.8 550.4l4.2-7.2h8.4l4.2 7.2l-4.2 7.2h-8.4zM1484.8 564.9l4.2-7.2h8.4l4.2 7.2l-4.2 7.2h-8.4zM1484.8 579.4l4.2-7.2h8.4l4.2 7.2l-4.2 7.2h-8.4zM1484.8 593.9l4.2-7.2h8.4l4.2 7.2l-4.2 7.2h-8.4zM1484.8 608.3l4.2-7.2h8.4l4.2 7.2l-4.2 7.2h-8.4zM1484.8 622.8l4.2-7.2h8.4l4.2 7.2l-4.2 7.2h-8.4zM1484.8 637.3l4.2-7.2h8.4l4.2 7.2l-4.2 7.2h-8.4zM1484.8 651.8l4.2-7.2h8.4l4.2 7.2l-4.2 7.2h-8.4zM1484.8 666.3l4.2-7.2h8.4l4.2 7.2l-4.2 7.2h-8.4zM1484.8 680.8l4.2-7.2h8.4l4.2 7.2l-4.2 7.2h-8.4zM1484.8 695.3l4.2-7.2h8.4l4.2 7.2l-4.2 7.2h-8.4zM1484.8 709.8l4.2-7.2h8.4l4.2 7.2l-4.2 7.2h-8.4zM1484.8 724.3l4.2-7.2h8.4l4.2 7.2l-4.2 7.2h-8.4zM1484.8 738.7l4.2-7.2h8.4l4.2 7.2l-4.2 7.2h-8.4zM1484.8 753.2l4.2-7.2h8.4l4.2 7.2l-4.2 7.2h-8.4zM1484.8 767.7l4.2-7.2h8.4l4.2 7.2l-4.2 7.2h-8.4zM1484.8 782.2l4.2-7.2h8.4l4.2 7.2l-4.2 7.2h-8.4zM1484.8 796.7l4.2-7.2h8.4l4.2 7.2l-4.2 7.2h-8.4zM1484.8 811.2l4.2-7.2h8.4l4.2 7.2l-4.2 7.2h-8.4zM1497.3 238.9l4.2-7.2h8.4l4.2 7.2l-4.2 7.2h-8.4zM1497.3 253.4l4.2-7.2h8.4l4.2 7.2l-4.2 7.2h-8.4zM1497.3 267.9l4.2-7.2h8.4l4.2 7.2l-4.2 7.2h-8.4zM1497.3 282.4l4.2-7.2h8.4l4.2 7.2l-4.2 7.2h-8.4zM1497.3 296.8l4.2-7.2h8.4l4.2 7.2l-4.2 7.2h-8.4zM1497.3 311.3l4.2-7.2h8.4l4.2 7.2l-4.2 7.2h-8.4zM1497.3 325.8l4.2-7.2h8.4l4.2 7.2l-4.2 7.2h-8.4zM1497.3 340.3l4.2-7.2h8.4l4.2 7.2l-4.2 7.2h-8.4zM1497.3 354.8l4.2-7.2h8.4l4.2 7.2l-4.2 7.2h-8.4zM1497.3 369.3l4.2-7.2h8.4l4.2 7.2l-4.2 7.2h-8.4zM1497.3 383.8l4.2-7.2h8.4l4.2 7.2l-4.2 7.2h-8.4zM1497.3 398.3l4.2-7.2h8.4l4.2 7.2l-4.2 7.2h-8.4zM1497.3 412.8l4.2-7.2h8.4l4.2 7.2l-4.2 7.2h-8.4zM1497.3 427.2l4.2-7.2h8.4l4.2 7.2l-4.2 7.2h-8.4zM1497.3 441.7l4.2-7.2h8.4l4.2 7.2l-4.2 7.2h-8.4zM1497.3 456.2l4.2-7.2h8.4l4.2 7.2l-4.2 7.2h-8.4zM1497.3 470.7l4.2-7.2h8.4l4.2 7.2l-4.2 7.2h-8.4zM1497.3 485.2l4.2-7.2h8.4l4.2 7.2l-4.2 7.2h-8.4zM1497.3 499.7l4.2-7.2h8.4l4.2 7.2l-4.2 7.2h-8.4zM1497.3 514.2l4.2-7.2h8.4l4.2 7.2l-4.2 7.2h-8.4zM1497.3 528.7l4.2-7.2h8.4l4.2 7.2l-4.2 7.2h-8.4zM1497.3 543.1l4.2-7.2h8.4l4.2 7.2l-4.2 7.2h-8.4zM1497.3 557.6l4.2-7.2h8.4l4.2 7.2l-4.2 7.2h-8.4zM1497.3 572.1l4.2-7.2h8.4l4.2 7.2l-4.2 7.2h-8.4zM1497.3 586.6l4.2-7.2h8.4l4.2 7.2l-4.2 7.2h-8.4zM1497.3 601.1l4.2-7.2h8.4l4.2 7.2l-4.2 7.2h-8.4zM1497.3 615.6l4.2-7.2h8.4l4.2 7.2l-4.2 7.2h-8.4zM1497.3 630.1l4.2-7.2h8.4l4.2 7.2l-4.2 7.2h-8.4zM1497.3 644.6l4.2-7.2h8.4l4.2 7.2l-4.2 7.2h-8.4zM1497.3 659.1l4.2-7.2h8.4l4.2 7.2l-4.2 7.2h-8.4zM1497.3 673.5l4.2-7.2h8.4l4.2 7.2l-4.2 7.2h-8.4zM1497.3 688l4.2-7.2h8.4l4.2 7.2l-4.2 7.2h-8.4zM1497.3 702.5l4.2-7.2h8.4l4.2 7.2l-4.2 7.2h-8.4zM1497.3 717l4.2-7.2h8.4l4.2 7.2l-4.2 7.2h-8.4zM1497.3 731.5l4.2-7.2h8.4l4.2 7.2l-4.2 7.2h-8.4zM1497.3 746l4.2-7.2h8.4l4.2 7.2l-4.2 7.2h-8.4zM1497.3 760.5l4.2-7.2h8.4l4.2 7.2l-4.2 7.2h-8.4zM1497.3 775l4.2-7.2h8.4l4.2 7.2l-4.2 7.2h-8.4zM1497.3 789.5l4.2-7.2h8.4l4.2 7.2l-4.2 7.2h-8.4zM1497.3 803.9l4.2-7.2h8.4l4.2 7.2l-4.2 7.2h-8.4zM1497.3 818.4l4.2-7.2h8.4l4.2 7.2l-4.2 7.2h-8.4zM1509.9 231.6l4.2-7.2h8.4l4.2 7.2l-4.2 7.2h-8.4zM1509.9 246.1l4.2-7.2h8.4l4.2 7.2l-4.2 7.2h-8.4zM1509.9 260.6l4.2-7.2h8.4l4.2 7.2l-4.2 7.2h-8.4zM1509.9 275.1l4.2-7.2h8.4l4.2 7.2l-4.2 7.2h-8.4zM1509.9 289.6l4.2-7.2h8.4l4.2 7.2l-4.2 7.2h-8.4zM1509.9 304.1l4.2-7.2h8.4l4.2 7.2l-4.2 7.2h-8.4zM1509.9 318.6l4.2-7.2h8.4l4.2 7.2l-4.2 7.2h-8.4zM1509.9 333.1l4.2-7.2h8.4l4.2 7.2l-4.2 7.2h-8.4zM1509.9 347.6l4.2-7.2h8.4l4.2 7.2l-4.2 7.2h-8.4zM1509.9 362l4.2-7.2h8.4l4.2 7.2l-4.2 7.2h-8.4zM1509.9 376.5l4.2-7.2h8.4l4.2 7.2l-4.2 7.2h-8.4zM1509.9 391l4.2-7.2h8.4l4.2 7.2l-4.2 7.2h-8.4zM1509.9 405.5l4.2-7.2h8.4l4.2 7.2l-4.2 7.2h-8.4zM1509.9 420l4.2-7.2h8.4l4.2 7.2l-4.2 7.2h-8.4zM1509.9 434.5l4.2-7.2h8.4l4.2 7.2l-4.2 7.2h-8.4zM1509.9 449l4.2-7.2h8.4l4.2 7.2l-4.2 7.2h-8.4zM1509.9 463.5l4.2-7.2h8.4l4.2 7.2l-4.2 7.2h-8.4zM1509.9 478l4.2-7.2h8.4l4.2 7.2l-4.2 7.2h-8.4zM1509.9 492.4l4.2-7.2h8.4l4.2 7.2l-4.2 7.2h-8.4zM1509.9 506.9l4.2-7.2h8.4l4.2 7.2l-4.2 7.2h-8.4zM1509.9 521.4l4.2-7.2h8.4l4.2 7.2l-4.2 7.2h-8.4zM1509.9 535.9l4.2-7.2h8.4l4.2 7.2l-4.2 7.2h-8.4zM1509.9 550.4l4.2-7.2h8.4l4.2 7.2l-4.2 7.2h-8.4zM1509.9 564.9l4.2-7.2h8.4l4.2 7.2l-4.2 7.2h-8.4zM1509.9 579.4l4.2-7.2h8.4l4.2 7.2l-4.2 7.2h-8.4zM1509.9 593.9l4.2-7.2h8.4l4.2 7.2l-4.2 7.2h-8.4zM1509.9 608.3l4.2-7.2h8.4l4.2 7.2l-4.2 7.2h-8.4zM1509.9 622.8l4.2-7.2h8.4l4.2 7.2l-4.2 7.2h-8.4zM1509.9 637.3l4.2-7.2h8.4l4.2 7.2l-4.2 7.2h-8.4zM1509.9 651.8l4.2-7.2h8.4l4.2 7.2l-4.2 7.2h-8.4zM1509.9 666.3l4.2-7.2h8.4l4.2 7.2l-4.2 7.2h-8.4zM1509.9 680.8l4.2-7.2h8.4l4.2 7.2l-4.2 7.2h-8.4zM1509.9 695.3l4.2-7.2h8.4l4.2 7.2l-4.2 7.2h-8.4zM1509.9 709.8l4.2-7.2h8.4l4.2 7.2l-4.2 7.2h-8.4zM1509.9 724.3l4.2-7.2h8.4l4.2 7.2l-4.2 7.2h-8.4zM1509.9 738.7l4.2-7.2h8.4l4.2 7.2l-4.2 7.2h-8.4zM1509.9 753.2l4.2-7.2h8.4l4.2 7.2l-4.2 7.2h-8.4zM1509.9 767.7l4.2-7.2h8.4l4.2 7.2l-4.2 7.2h-8.4zM1509.9 782.2l4.2-7.2h8.4l4.2 7.2l-4.2 7.2h-8.4zM1509.9 796.7l4.2-7.2h8.4l4.2 7.2l-4.2 7.2h-8.4zM1509.9 811.2l4.2-7.2h8.4l4.2 7.2l-4.2 7.2h-8.4zM1522.4 238.9l4.2-7.2h8.4l4.2 7.2l-4.2 7.2h-8.4zM1522.4 253.4l4.2-7.2h8.4l4.2 7.2l-4.2 7.2h-8.4zM1522.4 267.9l4.2-7.2h8.4l4.2 7.2l-4.2 7.2h-8.4zM1522.4 282.4l4.2-7.2h8.4l4.2 7.2l-4.2 7.2h-8.4zM1522.4 296.8l4.2-7.2h8.4l4.2 7.2l-4.2 7.2h-8.4zM1522.4 311.3l4.2-7.2h8.4l4.2 7.2l-4.2 7.2h-8.4zM1522.4 325.8l4.2-7.2h8.4l4.2 7.2l-4.2 7.2h-8.4zM1522.4 340.3l4.2-7.2h8.4l4.2 7.2l-4.2 7.2h-8.4zM1522.4 354.8l4.2-7.2h8.4l4.2 7.2l-4.2 7.2h-8.4zM1522.4 369.3l4.2-7.2h8.4l4.2 7.2l-4.2 7.2h-8.4zM1522.4 383.8l4.2-7.2h8.4l4.2 7.2l-4.2 7.2h-8.4zM1522.4 398.3l4.2-7.2h8.4l4.2 7.2l-4.2 7.2h-8.4zM1522.4 412.8l4.2-7.2h8.4l4.2 7.2l-4.2 7.2h-8.4zM1522.4 427.2l4.2-7.2h8.4l4.2 7.2l-4.2 7.2h-8.4zM1522.4 441.7l4.2-7.2h8.4l4.2 7.2l-4.2 7.2h-8.4zM1522.4 456.2l4.2-7.2h8.4l4.2 7.2l-4.2 7.2h-8.4zM1522.4 470.7l4.2-7.2h8.4l4.2 7.2l-4.2 7.2h-8.4zM1522.4 485.2l4.2-7.2h8.4l4.2 7.2l-4.2 7.2h-8.4zM1522.4 499.7l4.2-7.2h8.4l4.2 7.2l-4.2 7.2h-8.4zM1522.4 514.2l4.2-7.2h8.4l4.2 7.2l-4.2 7.2h-8.4zM1522.4 528.7l4.2-7.2h8.4l4.2 7.2l-4.2 7.2h-8.4zM1522.4 543.1l4.2-7.2h8.4l4.2 7.2l-4.2 7.2h-8.4zM1522.4 557.6l4.2-7.2h8.4l4.2 7.2l-4.2 7.2h-8.4zM1522.4 572.1l4.2-7.2h8.4l4.2 7.2l-4.2 7.2h-8.4zM1522.4 586.6l4.2-7.2h8.4l4.2 7.2l-4.2 7.2h-8.4zM1522.4 601.1l4.2-7.2h8.4l4.2 7.2l-4.2 7.2h-8.4zM1522.4 615.6l4.2-7.2h8.4l4.2 7.2l-4.2 7.2h-8.4zM1522.4 630.1l4.2-7.2h8.4l4.2 7.2l-4.2 7.2h-8.4zM1522.4 644.6l4.2-7.2h8.4l4.2 7.2l-4.2 7.2h-8.4zM1522.4 659.1l4.2-7.2h8.4l4.2 7.2l-4.2 7.2h-8.4zM1522.4 673.5l4.2-7.2h8.4l4.2 7.2l-4.2 7.2h-8.4zM1522.4 688l4.2-7.2h8.4l4.2 7.2l-4.2 7.2h-8.4zM1522.4 702.5l4.2-7.2h8.4l4.2 7.2l-4.2 7.2h-8.4zM1522.4 717l4.2-7.2h8.4l4.2 7.2l-4.2 7.2h-8.4zM1522.4 731.5l4.2-7.2h8.4l4.2 7.2l-4.2 7.2h-8.4zM1522.4 746l4.2-7.2h8.4l4.2 7.2l-4.2 7.2h-8.4zM1522.4 760.5l4.2-7.2h8.4l4.2 7.2l-4.2 7.2h-8.4zM1522.4 775l4.2-7.2h8.4l4.2 7.2l-4.2 7.2h-8.4zM1522.4 789.5l4.2-7.2h8.4l4.2 7.2l-4.2 7.2h-8.4zM1522.4 803.9l4.2-7.2h8.4l4.2 7.2l-4.2 7.2h-8.4zM1522.4 818.4l4.2-7.2h8.4l4.2 7.2l-4.2 7.2h-8.4zM1534.9 231.6l4.2-7.2h8.4l4.2 7.2l-4.2 7.2h-8.4zM1534.9 246.1l4.2-7.2h8.4l4.2 7.2l-4.2 7.2h-8.4zM1534.9 260.6l4.2-7.2h8.4l4.2 7.2l-4.2 7.2h-8.4zM1534.9 275.1l4.2-7.2h8.4l4.2 7.2l-4.2 7.2h-8.4zM1534.9 289.6l4.2-7.2h8.4l4.2 7.2l-4.2 7.2h-8.4zM1534.9 304.1l4.2-7.2h8.4l4.2 7.2l-4.2 7.2h-8.4zM1534.9 318.6l4.2-7.2h8.4l4.2 7.2l-4.2 7.2h-8.4zM1534.9 333.1l4.2-7.2h8.4l4.2 7.2l-4.2 7.2h-8.4zM1534.9 347.6l4.2-7.2h8.4l4.2 7.2l-4.2 7.2h-8.4zM1534.9 362l4.2-7.2h8.4l4.2 7.2l-4.2 7.2h-8.4zM1534.9 376.5l4.2-7.2h8.4l4.2 7.2l-4.2 7.2h-8.4zM1534.9 391l4.2-7.2h8.4l4.2 7.2l-4.2 7.2h-8.4zM1534.9 405.5l4.2-7.2h8.4l4.2 7.2l-4.2 7.2h-8.4zM1534.9 420l4.2-7.2h8.4l4.2 7.2l-4.2 7.2h-8.4zM1534.9 434.5l4.2-7.2h8.4l4.2 7.2l-4.2 7.2h-8.4zM1534.9 449l4.2-7.2h8.4l4.2 7.2l-4.2 7.2h-8.4zM1534.9 463.5l4.2-7.2h8.4l4.2 7.2l-4.2 7.2h-8.4zM1534.9 478l4.2-7.2h8.4l4.2 7.2l-4.2 7.2h-8.4zM1534.9 492.4l4.2-7.2h8.4l4.2 7.2l-4.2 7.2h-8.4zM1534.9 506.9l4.2-7.2h8.4l4.2 7.2l-4.2 7.2h-8.4zM1534.9 521.4l4.2-7.2h8.4l4.2 7.2l-4.2 7.2h-8.4zM1534.9 535.9l4.2-7.2h8.4l4.2 7.2l-4.2 7.2h-8.4zM1534.9 550.4l4.2-7.2h8.4l4.2 7.2l-4.2 7.2h-8.4zM1534.9 564.9l4.2-7.2h8.4l4.2 7.2l-4.2 7.2h-8.4zM1534.9 579.4l4.2-7.2h8.4l4.2 7.2l-4.2 7.2h-8.4zM1534.9 593.9l4.2-7.2h8.4l4.2 7.2l-4.2 7.2h-8.4zM1534.9 608.3l4.2-7.2h8.4l4.2 7.2l-4.2 7.2h-8.4zM1534.9 622.8l4.2-7.2h8.4l4.2 7.2l-4.2 7.2h-8.4zM1534.9 637.3l4.2-7.2h8.4l4.2 7.2l-4.2 7.2h-8.4zM1534.9 651.8l4.2-7.2h8.4l4.2 7.2l-4.2 7.2h-8.4zM1534.9 666.3l4.2-7.2h8.4l4.2 7.2l-4.2 7.2h-8.4zM1534.9 680.8l4.2-7.2h8.4l4.2 7.2l-4.2 7.2h-8.4zM1534.9 695.3l4.2-7.2h8.4l4.2 7.2l-4.2 7.2h-8.4zM1534.9 709.8l4.2-7.2h8.4l4.2 7.2l-4.2 7.2h-8.4zM1534.9 724.3l4.2-7.2h8.4l4.2 7.2l-4.2 7.2h-8.4zM1534.9 738.7l4.2-7.2h8.4l4.2 7.2l-4.2 7.2h-8.4zM1534.9 753.2l4.2-7.2h8.4l4.2 7.2l-4.2 7.2h-8.4zM1534.9 767.7l4.2-7.2h8.4l4.2 7.2l-4.2 7.2h-8.4zM1534.9 782.2l4.2-7.2h8.4l4.2 7.2l-4.2 7.2h-8.4zM1534.9 796.7l4.2-7.2h8.4l4.2 7.2l-4.2 7.2h-8.4zM1534.9 811.2l4.2-7.2h8.4l4.2 7.2l-4.2 7.2h-8.4zM1547.5 238.9l4.2-7.2h8.4l4.2 7.2l-4.2 7.2h-8.4zM1547.5 253.4l4.2-7.2h8.4l4.2 7.2l-4.2 7.2h-8.4zM1547.5 267.9l4.2-7.2h8.4l4.2 7.2l-4.2 7.2h-8.4zM1547.5 282.4l4.2-7.2h8.4l4.2 7.2l-4.2 7.2h-8.4zM1547.5 296.8l4.2-7.2h8.4l4.2 7.2l-4.2 7.2h-8.4zM1547.5 311.3l4.2-7.2h8.4l4.2 7.2l-4.2 7.2h-8.4zM1547.5 325.8l4.2-7.2h8.4l4.2 7.2l-4.2 7.2h-8.4zM1547.5 340.3l4.2-7.2h8.4l4.2 7.2l-4.2 7.2h-8.4zM1547.5 354.8l4.2-7.2h8.4l4.2 7.2l-4.2 7.2h-8.4zM1547.5 369.3l4.2-7.2h8.4l4.2 7.2l-4.2 7.2h-8.4zM1547.5 383.8l4.2-7.2h8.4l4.2 7.2l-4.2 7.2h-8.4zM1547.5 398.3l4.2-7.2h8.4l4.2 7.2l-4.2 7.2h-8.4zM1547.5 412.8l4.2-7.2h8.4l4.2 7.2l-4.2 7.2h-8.4zM1547.5 427.2l4.2-7.2h8.4l4.2 7.2l-4.2 7.2h-8.4zM1547.5 441.7l4.2-7.2h8.4l4.2 7.2l-4.2 7.2h-8.4zM1547.5 456.2l4.2-7.2h8.4l4.2 7.2l-4.2 7.2h-8.4zM1547.5 470.7l4.2-7.2h8.4l4.2 7.2l-4.2 7.2h-8.4zM1547.5 485.2l4.2-7.2h8.4l4.2 7.2l-4.2 7.2h-8.4zM1547.5 499.7l4.2-7.2h8.4l4.2 7.2l-4.2 7.2h-8.4zM1547.5 514.2l4.2-7.2h8.4l4.2 7.2l-4.2 7.2h-8.4zM1547.5 528.7l4.2-7.2h8.4l4.2 7.2l-4.2 7.2h-8.4zM1547.5 543.1l4.2-7.2h8.4l4.2 7.2l-4.2 7.2h-8.4zM1547.5 557.6l4.2-7.2h8.4l4.2 7.2l-4.2 7.2h-8.4zM1547.5 572.1l4.2-7.2h8.4l4.2 7.2l-4.2 7.2h-8.4zM1547.5 586.6l4.2-7.2h8.4l4.2 7.2l-4.2 7.2h-8.4zM1547.5 601.1l4.2-7.2h8.4l4.2 7.2l-4.2 7.2h-8.4zM1547.5 615.6l4.2-7.2h8.4l4.2 7.2l-4.2 7.2h-8.4zM1547.5 630.1l4.2-7.2h8.4l4.2 7.2l-4.2 7.2h-8.4zM1547.5 644.6l4.2-7.2h8.4l4.2 7.2l-4.2 7.2h-8.4zM1547.5 659.1l4.2-7.2h8.4l4.2 7.2l-4.2 7.2h-8.4zM1547.5 673.5l4.2-7.2h8.4l4.2 7.2l-4.2 7.2h-8.4zM1547.5 688l4.2-7.2h8.4l4.2 7.2l-4.2 7.2h-8.4zM1547.5 702.5l4.2-7.2h8.4l4.2 7.2l-4.2 7.2h-8.4zM1547.5 717l4.2-7.2h8.4l4.2 7.2l-4.2 7.2h-8.4zM1547.5 731.5l4.2-7.2h8.4l4.2 7.2l-4.2 7.2h-8.4zM1547.5 746l4.2-7.2h8.4l4.2 7.2l-4.2 7.2h-8.4zM1547.5 760.5l4.2-7.2h8.4l4.2 7.2l-4.2 7.2h-8.4zM1547.5 775l4.2-7.2h8.4l4.2 7.2l-4.2 7.2h-8.4zM1547.5 789.5l4.2-7.2h8.4l4.2 7.2l-4.2 7.2h-8.4zM1547.5 803.9l4.2-7.2h8.4l4.2 7.2l-4.2 7.2h-8.4zM1547.5 818.4l4.2-7.2h8.4l4.2 7.2l-4.2 7.2h-8.4zM1560 231.6l4.2-7.2h8.4l4.2 7.2l-4.2 7.2h-8.4zM1560 246.1l4.2-7.2h8.4l4.2 7.2l-4.2 7.2h-8.4zM1560 260.6l4.2-7.2h8.4l4.2 7.2l-4.2 7.2h-8.4zM1560 275.1l4.2-7.2h8.4l4.2 7.2l-4.2 7.2h-8.4zM1560 289.6l4.2-7.2h8.4l4.2 7.2l-4.2 7.2h-8.4zM1560 304.1l4.2-7.2h8.4l4.2 7.2l-4.2 7.2h-8.4zM1560 318.6l4.2-7.2h8.4l4.2 7.2l-4.2 7.2h-8.4zM1560 333.1l4.2-7.2h8.4l4.2 7.2l-4.2 7.2h-8.4zM1560 347.6l4.2-7.2h8.4l4.2 7.2l-4.2 7.2h-8.4zM1560 362l4.2-7.2h8.4l4.2 7.2l-4.2 7.2h-8.4zM1560 376.5l4.2-7.2h8.4l4.2 7.2l-4.2 7.2h-8.4zM1560 391l4.2-7.2h8.4l4.2 7.2l-4.2 7.2h-8.4zM1560 405.5l4.2-7.2h8.4l4.2 7.2l-4.2 7.2h-8.4zM1560 420l4.2-7.2h8.4l4.2 7.2l-4.2 7.2h-8.4zM1560 434.5l4.2-7.2h8.4l4.2 7.2l-4.2 7.2h-8.4zM1560 449l4.2-7.2h8.4l4.2 7.2l-4.2 7.2h-8.4zM1560 463.5l4.2-7.2h8.4l4.2 7.2l-4.2 7.2h-8.4zM1560 478l4.2-7.2h8.4l4.2 7.2l-4.2 7.2h-8.4zM1560 492.4l4.2-7.2h8.4l4.2 7.2l-4.2 7.2h-8.4zM1560 506.9l4.2-7.2h8.4l4.2 7.2l-4.2 7.2h-8.4zM1560 521.4l4.2-7.2h8.4l4.2 7.2l-4.2 7.2h-8.4zM1560 535.9l4.2-7.2h8.4l4.2 7.2l-4.2 7.2h-8.4zM1560 550.4l4.2-7.2h8.4l4.2 7.2l-4.2 7.2h-8.4zM1560 564.9l4.2-7.2h8.4l4.2 7.2l-4.2 7.2h-8.4zM1560 579.4l4.2-7.2h8.4l4.2 7.2l-4.2 7.2h-8.4zM1560 593.9l4.2-7.2h8.4l4.2 7.2l-4.2 7.2h-8.4zM1560 608.3l4.2-7.2h8.4l4.2 7.2l-4.2 7.2h-8.4zM1560 622.8l4.2-7.2h8.4l4.2 7.2l-4.2 7.2h-8.4zM1560 637.3l4.2-7.2h8.4l4.2 7.2l-4.2 7.2h-8.4zM1560 651.8l4.2-7.2h8.4l4.2 7.2l-4.2 7.2h-8.4zM1560 666.3l4.2-7.2h8.4l4.2 7.2l-4.2 7.2h-8.4zM1560 680.8l4.2-7.2h8.4l4.2 7.2l-4.2 7.2h-8.4zM1560 695.3l4.2-7.2h8.4l4.2 7.2l-4.2 7.2h-8.4zM1560 709.8l4.2-7.2h8.4l4.2 7.2l-4.2 7.2h-8.4zM1560 724.3l4.2-7.2h8.4l4.2 7.2l-4.2 7.2h-8.4zM1560 738.7l4.2-7.2h8.4l4.2 7.2l-4.2 7.2h-8.4zM1560 753.2l4.2-7.2h8.4l4.2 7.2l-4.2 7.2h-8.4zM1560 767.7l4.2-7.2h8.4l4.2 7.2l-4.2 7.2h-8.4zM1560 782.2l4.2-7.2h8.4l4.2 7.2l-4.2 7.2h-8.4zM1560 796.7l4.2-7.2h8.4l4.2 7.2l-4.2 7.2h-8.4zM1560 811.2l4.2-7.2h8.4l4.2 7.2l-4.2 7.2h-8.4zM1572.6 238.9l4.2-7.2h8.4l4.2 7.2l-4.2 7.2h-8.4zM1572.6 253.4l4.2-7.2h8.4l4.2 7.2l-4.2 7.2h-8.4zM1572.6 267.9l4.2-7.2h8.4l4.2 7.2l-4.2 7.2h-8.4zM1572.6 282.4l4.2-7.2h8.4l4.2 7.2l-4.2 7.2h-8.4zM1572.6 296.8l4.2-7.2h8.4l4.2 7.2l-4.2 7.2h-8.4zM1572.6 311.3l4.2-7.2h8.4l4.2 7.2l-4.2 7.2h-8.4zM1572.6 325.8l4.2-7.2h8.4l4.2 7.2l-4.2 7.2h-8.4zM1572.6 340.3l4.2-7.2h8.4l4.2 7.2l-4.2 7.2h-8.4zM1572.6 354.8l4.2-7.2h8.4l4.2 7.2l-4.2 7.2h-8.4zM1572.6 369.3l4.2-7.2h8.4l4.2 7.2l-4.2 7.2h-8.4zM1572.6 383.8l4.2-7.2h8.4l4.2 7.2l-4.2 7.2h-8.4zM1572.6 398.3l4.2-7.2h8.4l4.2 7.2l-4.2 7.2h-8.4zM1572.6 412.8l4.2-7.2h8.4l4.2 7.2l-4.2 7.2h-8.4zM1572.6 427.2l4.2-7.2h8.4l4.2 7.2l-4.2 7.2h-8.4zM1572.6 441.7l4.2-7.2h8.4l4.2 7.2l-4.2 7.2h-8.4zM1572.6 456.2l4.2-7.2h8.4l4.2 7.2l-4.2 7.2h-8.4zM1572.6 470.7l4.2-7.2h8.4l4.2 7.2l-4.2 7.2h-8.4zM1572.6 485.2l4.2-7.2h8.4l4.2 7.2l-4.2 7.2h-8.4zM1572.6 499.7l4.2-7.2h8.4l4.2 7.2l-4.2 7.2h-8.4zM1572.6 514.2l4.2-7.2h8.4l4.2 7.2l-4.2 7.2h-8.4zM1572.6 528.7l4.2-7.2h8.4l4.2 7.2l-4.2 7.2h-8.4zM1572.6 543.1l4.2-7.2h8.4l4.2 7.2l-4.2 7.2h-8.4zM1572.6 557.6l4.2-7.2h8.4l4.2 7.2l-4.2 7.2h-8.4zM1572.6 572.1l4.2-7.2h8.4l4.2 7.2l-4.2 7.2h-8.4zM1572.6 586.6l4.2-7.2h8.4l4.2 7.2l-4.2 7.2h-8.4zM1572.6 601.1l4.2-7.2h8.4l4.2 7.2l-4.2 7.2h-8.4zM1572.6 615.6l4.2-7.2h8.4l4.2 7.2l-4.2 7.2h-8.4zM1572.6 630.1l4.2-7.2h8.4l4.2 7.2l-4.2 7.2h-8.4zM1572.6 644.6l4.2-7.2h8.4l4.2 7.2l-4.2 7.2h-8.4zM1572.6 659.1l4.2-7.2h8.4l4.2 7.2l-4.2 7.2h-8.4zM1572.6 673.5l4.2-7.2h8.4l4.2 7.2l-4.2 7.2h-8.4zM1572.6 688l4.2-7.2h8.4l4.2 7.2l-4.2 7.2h-8.4zM1572.6 702.5l4.2-7.2h8.4l4.2 7.2l-4.2 7.2h-8.4zM1572.6 717l4.2-7.2h8.4l4.2 7.2l-4.2 7.2h-8.4zM1572.6 731.5l4.2-7.2h8.4l4.2 7.2l-4.2 7.2h-8.4zM1572.6 746l4.2-7.2h8.4l4.2 7.2l-4.2 7.2h-8.4zM1572.6 760.5l4.2-7.2h8.4l4.2 7.2l-4.2 7.2h-8.4zM1572.6 775l4.2-7.2h8.4l4.2 7.2l-4.2 7.2h-8.4zM1572.6 789.5l4.2-7.2h8.4l4.2 7.2l-4.2 7.2h-8.4zM1572.6 803.9l4.2-7.2h8.4l4.2 7.2l-4.2 7.2h-8.4zM1572.6 818.4l4.2-7.2h8.4l4.2 7.2l-4.2 7.2h-8.4zM1585.1 231.6l4.2-7.2h8.4l4.2 7.2l-4.2 7.2h-8.4zM1585.1 246.1l4.2-7.2h8.4l4.2 7.2l-4.2 7.2h-8.4zM1585.1 260.6l4.2-7.2h8.4l4.2 7.2l-4.2 7.2h-8.4zM1585.1 275.1l4.2-7.2h8.4l4.2 7.2l-4.2 7.2h-8.4zM1585.1 289.6l4.2-7.2h8.4l4.2 7.2l-4.2 7.2h-8.4zM1585.1 304.1l4.2-7.2h8.4l4.2 7.2l-4.2 7.2h-8.4zM1585.1 318.6l4.2-7.2h8.4l4.2 7.2l-4.2 7.2h-8.4zM1585.1 333.1l4.2-7.2h8.4l4.2 7.2l-4.2 7.2h-8.4zM1585.1 347.6l4.2-7.2h8.4l4.2 7.2l-4.2 7.2h-8.4zM1585.1 362l4.2-7.2h8.4l4.2 7.2l-4.2 7.2h-8.4zM1585.1 376.5l4.2-7.2h8.4l4.2 7.2l-4.2 7.2h-8.4zM1585.1 391l4.2-7.2h8.4l4.2 7.2l-4.2 7.2h-8.4zM1585.1 405.5l4.2-7.2h8.4l4.2 7.2l-4.2 7.2h-8.4zM1585.1 420l4.2-7.2h8.4l4.2 7.2l-4.2 7.2h-8.4zM1585.1 434.5l4.2-7.2h8.4l4.2 7.2l-4.2 7.2h-8.4zM1585.1 449l4.2-7.2h8.4l4.2 7.2l-4.2 7.2h-8.4zM1585.1 463.5l4.2-7.2h8.4l4.2 7.2l-4.2 7.2h-8.4zM1585.1 478l4.2-7.2h8.4l4.2 7.2l-4.2 7.2h-8.4zM1585.1 492.4l4.2-7.2h8.4l4.2 7.2l-4.2 7.2h-8.4zM1585.1 506.9l4.2-7.2h8.4l4.2 7.2l-4.2 7.2h-8.4zM1585.1 521.4l4.2-7.2h8.4l4.2 7.2l-4.2 7.2h-8.4zM1585.1 535.9l4.2-7.2h8.4l4.2 7.2l-4.2 7.2h-8.4zM1585.1 550.4l4.2-7.2h8.4l4.2 7.2l-4.2 7.2h-8.4zM1585.1 564.9l4.2-7.2h8.4l4.2 7.2l-4.2 7.2h-8.4zM1585.1 579.4l4.2-7.2h8.4l4.2 7.2l-4.2 7.2h-8.4zM1585.1 593.9l4.2-7.2h8.4l4.2 7.2l-4.2 7.2h-8.4zM1585.1 608.3l4.2-7.2h8.4l4.2 7.2l-4.2 7.2h-8.4zM1585.1 622.8l4.2-7.2h8.4l4.2 7.2l-4.2 7.2h-8.4zM1585.1 637.3l4.2-7.2h8.4l4.2 7.2l-4.2 7.2h-8.4zM1585.1 651.8l4.2-7.2h8.4l4.2 7.2l-4.2 7.2h-8.4zM1585.1 666.3l4.2-7.2h8.4l4.2 7.2l-4.2 7.2h-8.4zM1585.1 680.8l4.2-7.2h8.4l4.2 7.2l-4.2 7.2h-8.4zM1585.1 695.3l4.2-7.2h8.4l4.2 7.2l-4.2 7.2h-8.4zM1585.1 709.8l4.2-7.2h8.4l4.2 7.2l-4.2 7.2h-8.4zM1585.1 724.3l4.2-7.2h8.4l4.2 7.2l-4.2 7.2h-8.4zM1585.1 738.7l4.2-7.2h8.4l4.2 7.2l-4.2 7.2h-8.4zM1585.1 753.2l4.2-7.2h8.4l4.2 7.2l-4.2 7.2h-8.4zM1585.1 767.7l4.2-7.2h8.4l4.2 7.2l-4.2 7.2h-8.4zM1585.1 782.2l4.2-7.2h8.4l4.2 7.2l-4.2 7.2h-8.4zM1585.1 796.7l4.2-7.2h8.4l4.2 7.2l-4.2 7.2h-8.4zM1585.1 811.2l4.2-7.2h8.4l4.2 7.2l-4.2 7.2h-8.4zM1597.7 238.9l4.2-7.2h8.4l4.2 7.2l-4.2 7.2h-8.4zM1597.7 253.4l4.2-7.2h8.4l4.2 7.2l-4.2 7.2h-8.4zM1597.7 267.9l4.2-7.2h8.4l4.2 7.2l-4.2 7.2h-8.4zM1597.7 282.4l4.2-7.2h8.4l4.2 7.2l-4.2 7.2h-8.4zM1597.7 296.8l4.2-7.2h8.4l4.2 7.2l-4.2 7.2h-8.4zM1597.7 311.3l4.2-7.2h8.4l4.2 7.2l-4.2 7.2h-8.4zM1597.7 325.8l4.2-7.2h8.4l4.2 7.2l-4.2 7.2h-8.4zM1597.7 340.3l4.2-7.2h8.4l4.2 7.2l-4.2 7.2h-8.4zM1597.7 354.8l4.2-7.2h8.4l4.2 7.2l-4.2 7.2h-8.4zM1597.7 369.3l4.2-7.2h8.4l4.2 7.2l-4.2 7.2h-8.4zM1597.7 383.8l4.2-7.2h8.4l4.2 7.2l-4.2 7.2h-8.4zM1597.7 398.3l4.2-7.2h8.4l4.2 7.2l-4.2 7.2h-8.4zM1597.7 412.8l4.2-7.2h8.4l4.2 7.2l-4.2 7.2h-8.4zM1597.7 427.2l4.2-7.2h8.4l4.2 7.2l-4.2 7.2h-8.4zM1597.7 441.7l4.2-7.2h8.4l4.2 7.2l-4.2 7.2h-8.4zM1597.7 456.2l4.2-7.2h8.4l4.2 7.2l-4.2 7.2h-8.4zM1597.7 470.7l4.2-7.2h8.4l4.2 7.2l-4.2 7.2h-8.4zM1597.7 485.2l4.2-7.2h8.4l4.2 7.2l-4.2 7.2h-8.4zM1597.7 499.7l4.2-7.2h8.4l4.2 7.2l-4.2 7.2h-8.4zM1597.7 514.2l4.2-7.2h8.4l4.2 7.2l-4.2 7.2h-8.4zM1597.7 528.7l4.2-7.2h8.4l4.2 7.2l-4.2 7.2h-8.4zM1597.7 543.1l4.2-7.2h8.4l4.2 7.2l-4.2 7.2h-8.4zM1597.7 557.6l4.2-7.2h8.4l4.2 7.2l-4.2 7.2h-8.4zM1597.7 572.1l4.2-7.2h8.4l4.2 7.2l-4.2 7.2h-8.4zM1597.7 586.6l4.2-7.2h8.4l4.2 7.2l-4.2 7.2h-8.4zM1597.7 601.1l4.2-7.2h8.4l4.2 7.2l-4.2 7.2h-8.4zM1597.7 615.6l4.2-7.2h8.4l4.2 7.2l-4.2 7.2h-8.4zM1597.7 630.1l4.2-7.2h8.4l4.2 7.2l-4.2 7.2h-8.4zM1597.7 644.6l4.2-7.2h8.4l4.2 7.2l-4.2 7.2h-8.4zM1597.7 659.1l4.2-7.2h8.4l4.2 7.2l-4.2 7.2h-8.4zM1597.7 673.5l4.2-7.2h8.4l4.2 7.2l-4.2 7.2h-8.4zM1597.7 688l4.2-7.2h8.4l4.2 7.2l-4.2 7.2h-8.4zM1597.7 702.5l4.2-7.2h8.4l4.2 7.2l-4.2 7.2h-8.4zM1597.7 717l4.2-7.2h8.4l4.2 7.2l-4.2 7.2h-8.4zM1597.7 731.5l4.2-7.2h8.4l4.2 7.2l-4.2 7.2h-8.4zM1597.7 746l4.2-7.2h8.4l4.2 7.2l-4.2 7.2h-8.4zM1597.7 760.5l4.2-7.2h8.4l4.2 7.2l-4.2 7.2h-8.4zM1597.7 775l4.2-7.2h8.4l4.2 7.2l-4.2 7.2h-8.4zM1597.7 789.5l4.2-7.2h8.4l4.2 7.2l-4.2 7.2h-8.4zM1597.7 803.9l4.2-7.2h8.4l4.2 7.2l-4.2 7.2h-8.4zM1597.7 818.4l4.2-7.2h8.4l4.2 7.2l-4.2 7.2h-8.4z" fill="#E05A8A" stroke="#1B1E1B" stroke-width="1.4"/></svg>
<div class="t" style="left:766.00px;top:845.00px;font-size:22.5px;font-weight:normal;font-style:normal;color:#111;letter-spacing:0.419px;">hex_grid_with_elevation — Features Total: 2788 ,Filtered: 2788 ,Selected: 0</div>
<svg class="abs" style="left:1806px;top:842px" width="22" height="22" viewBox="0 0 22 22"><rect x="1.5" y="1.5" width="19" height="19" rx="5" fill="none" stroke="#333" stroke-width="2.2"/><path d="M6 6L16 16M16 6L6 16" stroke="#333" stroke-width="3" stroke-linecap="round"/></svg>
<div class="abs" style="left:538px;top:938px;width:1289px;height:252px;background:#B3B3B3;border:2px solid #2D2D2D;border-radius:5px;box-sizing:border-box"></div>
<div class="abs" style="left:544px;top:944px;width:78px;height:36px;background:#727272"></div>
<div class="abs" style="left:628px;top:944px;width:1178px;height:34px;background:#727272"></div>
<div class="abs" style="left:628px;top:977.5px;width:1178px;height:2px;background:#2D2D2D"></div>
<div class="abs" style="left:808px;top:944px;width:2px;height:34px;background:#2D2D2D"></div>
<div class="abs" style="left:1208px;top:944px;width:2px;height:34px;background:#2D2D2D"></div>
<div class="abs" style="left:1408px;top:944px;width:2px;height:34px;background:#2D2D2D"></div>
<div class="abs" style="left:1608px;top:944px;width:2px;height:34px;background:#2D2D2D"></div>
<div class="abs" style="left:1008px;top:944px;width:2px;height:34px;background:#2D2D2D"></div>
<div class="t" style="left:671.30px;top:949.00px;font-size:22px;font-weight:normal;font-style:normal;color:#111;letter-spacing:1.480px;">bottom</div>
<div class="t" style="left:853.70px;top:949.00px;font-size:22px;font-weight:normal;font-style:normal;color:#111;letter-spacing:1.175px;">row_index</div>
<div class="t" style="left:1058.00px;top:949.00px;font-size:22px;font-weight:normal;font-style:normal;color:#111;letter-spacing:0.875px;">col_index</div>
<div class="t" style="left:1250.00px;top:949.00px;font-size:22px;font-weight:normal;font-style:normal;color:#111;letter-spacing:0.914px;">dem_mean</div>
<div class="t" style="left:1459.60px;top:949.00px;font-size:22px;font-weight:normal;font-style:normal;color:#111;letter-spacing:1.200px;">dem_min</div>
<div class="t" style="left:1658.60px;top:949.00px;font-size:22px;font-weight:normal;font-style:normal;color:#111;letter-spacing:0.850px;">dem_max</div>
<div class="abs" style="left:544px;top:984px;width:78px;height:186px;background:#727272"></div>
<div class="abs" style="left:544px;top:1041.5px;width:78px;height:2.5px;background:#2D2D2D"></div>
<div class="abs" style="left:624px;top:980px;width:1183px;height:60px;background:#B3B3B3"></div>
<div class="abs" style="left:624px;top:1040px;width:1183px;height:2px;background:#C0C0C0"></div>
<div class="t" style="left:549.30px;top:1001.30px;font-size:22px;font-weight:normal;font-style:normal;color:#111;letter-spacing:0.000px;">1</div>
<div class="abs" style="left:625px;top:980px;width:182px;height:60px;overflow:hidden">
<div class="t" style="left:-6.96px;top:17.30px;font-size:26px;font-weight:normal;font-style:normal;color:#111;letter-spacing:1.496px;">37.108333333</div>
</div>
<div class="t" style="left:984.70px;top:997.30px;font-size:26px;font-weight:normal;font-style:normal;color:#111;letter-spacing:0.000px;">0</div>
<div class="t" style="left:1184.50px;top:997.30px;font-size:26px;font-weight:normal;font-style:normal;color:#111;letter-spacing:0.000px;">0</div>
<div class="t" style="left:1215.00px;top:997.30px;font-size:26px;font-weight:normal;font-style:normal;color:#111;letter-spacing:0.946px;">2027.142550...</div>
<div class="t" style="left:1543.00px;top:997.30px;font-size:26px;font-weight:normal;font-style:normal;color:#111;letter-spacing:0.100px;">1157</div>
<div class="t" style="left:1740.70px;top:997.30px;font-size:26px;font-weight:normal;font-style:normal;color:#111;letter-spacing:0.200px;">3417</div>
<div class="abs" style="left:544px;top:1101.5px;width:78px;height:2.5px;background:#2D2D2D"></div>
<div class="abs" style="left:624px;top:1040px;width:1183px;height:60px;background:#9F9F9F"></div>
<div class="abs" style="left:624px;top:1100px;width:1183px;height:2px;background:#C0C0C0"></div>
<div class="t" style="left:550.30px;top:1061.30px;font-size:22px;font-weight:normal;font-style:normal;color:#111;letter-spacing:0.000px;">2</div>
<div class="abs" style="left:625px;top:1040px;width:182px;height:60px;overflow:hidden">
<div class="t" style="left:-6.96px;top:17.30px;font-size:26px;font-weight:normal;font-style:normal;color:#111;letter-spacing:1.496px;">36.108333333</div>
</div>
<div class="t" style="left:985.70px;top:1057.30px;font-size:26px;font-weight:normal;font-style:normal;color:#111;letter-spacing:0.000px;">1</div>
<div class="t" style="left:1184.50px;top:1057.30px;font-size:26px;font-weight:normal;font-style:normal;color:#111;letter-spacing:0.000px;">0</div>
<div class="t" style="left:1219.70px;top:1057.30px;font-size:26px;font-weight:normal;font-style:normal;color:#111;letter-spacing:0.585px;">1721.023431...</div>
<div class="t" style="left:1550.70px;top:1057.30px;font-size:26px;font-weight:normal;font-style:normal;color:#111;letter-spacing:2.800px;">836</div>
<div class="t" style="left:1736.30px;top:1057.30px;font-size:26px;font-weight:normal;font-style:normal;color:#111;letter-spacing:1.667px;">2799</div>
<div class="abs" style="left:544px;top:1161.5px;width:78px;height:2.5px;background:#2D2D2D"></div>
<div class="abs" style="left:624px;top:1100px;width:1183px;height:60px;background:#B3B3B3"></div>
<div class="abs" style="left:624px;top:1160px;width:1183px;height:2px;background:#C0C0C0"></div>
<div class="t" style="left:550.30px;top:1121.30px;font-size:22px;font-weight:normal;font-style:normal;color:#111;letter-spacing:0.000px;">3</div>
<div class="abs" style="left:625px;top:1100px;width:182px;height:60px;overflow:hidden">
<div class="t" style="left:-6.96px;top:17.30px;font-size:26px;font-weight:normal;font-style:normal;color:#111;letter-spacing:1.496px;">35.108333333</div>
</div>
<div class="t" style="left:985.70px;top:1117.30px;font-size:26px;font-weight:normal;font-style:normal;color:#111;letter-spacing:0.000px;">2</div>
<div class="t" style="left:1184.50px;top:1117.30px;font-size:26px;font-weight:normal;font-style:normal;color:#111;letter-spacing:0.000px;">0</div>
<div class="t" style="left:1215.30px;top:1117.30px;font-size:26px;font-weight:normal;font-style:normal;color:#111;letter-spacing:0.923px;">1867.740858...</div>
<div class="t" style="left:1549.70px;top:1117.30px;font-size:26px;font-weight:normal;font-style:normal;color:#111;letter-spacing:3.300px;">808</div>
<div class="t" style="left:1738.30px;top:1117.30px;font-size:26px;font-weight:normal;font-style:normal;color:#111;letter-spacing:1.000px;">3733</div>
<div class="abs" style="left:622px;top:984px;width:2px;height:186px;background:#2D2D2D"></div>
<div class="abs" style="left:624px;top:1162px;width:1183px;height:8px;background:#A0A0A0"></div>
<div class="abs" style="left:806px;top:980px;width:1px;height:190px;background:#C0C0C0"></div>
<div class="abs" style="left:1006px;top:980px;width:1px;height:190px;background:#C0C0C0"></div>
<div class="abs" style="left:1206px;top:980px;width:1px;height:190px;background:#C0C0C0"></div>
<div class="abs" style="left:1406px;top:980px;width:1px;height:190px;background:#C0C0C0"></div>
<div class="abs" style="left:1606px;top:980px;width:1px;height:190px;background:#C0C0C0"></div>
<div class="abs" style="left:542px;top:1170px;width:1266px;height:18px;background:#2D2D2D"></div>
<div class="abs" style="left:1130px;top:1172px;width:676px;height:14px;background:#727272;border-radius:4px"></div>
<div class="abs" style="left:1808px;top:942px;width:17px;height:228px;background:#2D2D2D;border-radius:4px 4px 0 0"></div>
<div class="abs" style="left:1810px;top:944px;width:13px;height:26px;background:#727272;border-radius:4px"></div>
<div class="abs" style="left:541px;top:1200.5px;width:265px;height:49px;background:linear-gradient(#A2A2A2,#8C8C8C);border:2px solid #353535;border-radius:7px;box-sizing:border-box"></div>
<div class="t" style="left:585.80px;top:1214.70px;font-size:21px;font-weight:normal;font-style:normal;color:#111;letter-spacing:0.050px;">Show All Features</div>
<svg class="abs" style="left:553px;top:1211px" width="26" height="26" viewBox="0 0 26 26"><rect x="1" y="1" width="24" height="24" fill="#EEF0F2" stroke="#7AA3D4" stroke-width="1.6"/><rect x="1.8" y="1.8" width="22.4" height="5.5" fill="#B9D3F0"/><path d="M4 4.5H7.5M10 4.5H22" stroke="#5B8FCF" stroke-width="2"/><path d="M2 7.5H24" stroke="#7AA3D4" stroke-width="1"/><path d="M4 10.5H7M10 10.5H22M4 14.5H7M10 14.5H22M4 18.5H7M10 18.5H22M4 22H7M10 22H22" stroke="#5B8FCF" stroke-width="1.3"/></svg>
<svg class="abs" style="left:793px;top:1230px" width="10" height="9" viewBox="0 0 10 9"><path d="M0 0h10L5 9z" fill="#b0b0b0"/></svg>
<svg class="abs" style="left:1737px;top:1211px" width="26" height="26" viewBox="0 0 26 26"><rect x="1" y="1" width="24" height="24" fill="#e8f0f8" stroke="#6b9bd2" stroke-width="2"/><path d="M4 8h5M4 18h5" stroke="#333" stroke-width="2"/><rect x="11" y="5" width="11" height="6" fill="#fff" stroke="#6b9bd2" stroke-width="1.5"/><rect x="11" y="15" width="11" height="6" fill="#fff" stroke="#6b9bd2" stroke-width="1.5"/></svg>
<div class="abs" style="left:1777px;top:1201px;width:48px;height:48px;border:2px solid #f2f2f2;border-radius:7px;box-sizing:border-box"></div>
<svg class="abs" style="left:1788px;top:1211px" width="26" height="26" viewBox="0 0 26 26"><rect x="1" y="1" width="24" height="24" fill="#EEF0F2" stroke="#7AA3D4" stroke-width="1.6"/><rect x="1.8" y="1.8" width="22.4" height="5.5" fill="#B9D3F0"/><path d="M4 4.5H7.5M10 4.5H22" stroke="#5B8FCF" stroke-width="2"/><path d="M2 7.5H24" stroke="#7AA3D4" stroke-width="1"/><path d="M4 10.5H7M10 10.5H22M4 14.5H7M10 14.5H22M4 18.5H7M10 18.5H22M4 22H7M10 22H22" stroke="#5B8FCF" stroke-width="1.3"/></svg>
<div class="abs" style="left:501.5px;top:1270px;width:5px;height:40px;overflow:hidden">
<div class="t" style="left:-7.00px;top:7.00px;font-size:22px;font-weight:normal;font-style:normal;color:#111;letter-spacing:0.000px;">c</div>
</div>
<div class="abs" style="left:514.6px;top:1264.8px;width:162.4px;height:42.2px;background:#B3B3B3;border:2px solid #333;border-radius:6px;box-sizing:border-box"></div>
<div class="t" style="left:530.20px;top:1277.00px;font-size:22px;font-weight:normal;font-style:normal;color:#111;letter-spacing:1.309px;">-2.9°,-64.6°</div>
<div class="abs" style="left:748px;top:1270px;width:5px;height:40px;overflow:hidden">
<div class="t" style="left:-7.00px;top:7.00px;font-size:22px;font-weight:normal;font-style:normal;color:#111;letter-spacing:0.000px;">a</div>
</div>
<div class="abs" style="left:760.3px;top:1262.1px;width:173.5px;height:46.8px;background:#B3B3B3;border:2.5px solid #2D2D2D;border-radius:6px;box-sizing:border-box"></div>
<div class="t" style="left:763.00px;top:1277.00px;font-size:22px;font-weight:normal;font-style:normal;color:#111;letter-spacing:0.722px;">1:34651744</div>
<div class="abs" style="left:904px;top:1266px;width:26.3px;height:40px;background:linear-gradient(#4a4a4a,#333);border-radius:3px"></div>
<svg class="abs" style="left:913px;top:1283.5px" width="9" height="7.5" viewBox="0 0 9 7.5"><path d="M0 0h9L4.5 7.5z" fill="#d0d0d0"/></svg>
<div class="t" style="left:1001.80px;top:1277.50px;font-size:22px;font-weight:normal;font-style:normal;color:#111;letter-spacing:0.000px;">r</div>
<div class="abs" style="left:1016.8px;top:1266.5px;width:174.4px;height:38.3px;background:#B3B3B3;border:2px solid #333;border-radius:6px;box-sizing:border-box"></div>
<div class="t" style="left:1021.00px;top:1277.60px;font-size:22px;font-weight:normal;font-style:normal;color:#111;letter-spacing:0.667px;">100%</div>
<div class="abs" style="left:1162.2px;top:1270.5px;width:26px;height:31.8px;background:linear-gradient(#4a4a4a,#333);border-radius:4px"></div>
<svg class="abs" style="left:1169px;top:1276px" width="12" height="22" viewBox="0 0 12 22"><path d="M1 7L6 1L11 7Z M1 15L6 21L11 15Z" fill="#cfcfcf"/></svg>
<div class="abs" style="left:1210.5px;top:1270px;width:6.5px;height:40px;overflow:hidden">
<div class="t" style="left:-5.50px;top:7.50px;font-size:22px;font-weight:normal;font-style:normal;color:#111;letter-spacing:0.000px;">a</div>
</div>
<div class="abs" style="left:1237.2px;top:1266.5px;width:174.4px;height:38.3px;background:#B3B3B3;border:2px solid #333;border-radius:6px;box-sizing:border-box"></div>
<div class="t" style="left:1248.40px;top:1277.60px;font-size:22px;font-weight:normal;font-style:normal;color:#111;letter-spacing:1.500px;">0.0 °</div>
<div class="abs" style="left:1381.9px;top:1270.5px;width:26px;height:31.8px;background:linear-gradient(#4a4a4a,#333);border-radius:4px"></div>
<svg class="abs" style="left:1389px;top:1276px" width="12" height="22" viewBox="0 0 12 22"><path d="M1 7L6 1L11 7Z M1 15L6 21L11 15Z" fill="#cfcfcf"/></svg>
<svg class="abs" style="left:1426px;top:1274px" width="26" height="26" viewBox="0 0 26 26"><rect x="1.2" y="1.2" width="23.6" height="23.6" rx="6" fill="#9a9a9a" stroke="#2a2a2a" stroke-width="2"/><path d="M6 13.5L10.5 18.5L20 6.5" fill="none" stroke="#222" stroke-width="2.6" stroke-linecap="round" stroke-linejoin="round"/></svg>
<div class="t" style="left:1464.60px;top:1277.60px;font-size:22px;font-weight:normal;font-style:normal;color:#111;letter-spacing:0.520px;">Render</div>
<div class="t" style="left:1601.40px;top:1276.50px;font-size:22px;font-weight:normal;font-style:normal;color:#111;letter-spacing:0.637px;">EPSG:4326</div><svg class="abs" style="left:0;top:0" width="1830" height="1310"><line x1="5" y1="79" x2="5" y2="97" stroke="#BDBDBD" stroke-width="3" stroke-linecap="round"/><path d="M26 67.6H44.5L54 77.5V108H26Z" fill="#fff"/><path d="M44.5 67.6V77.5H54Z" fill="#DADADA"/><path d="M85.5 70H100.5L101 75.5H124.4V80H93L85.5 105.3Z" fill="#F5CF40" stroke="#C9A41E" stroke-width="1.4"/><path d="M93 80H130L124.4 105.3H85.5Z" fill="#FDDA55" stroke="#C9A41E" stroke-width="1.4"/><rect x="156.5" y="66.7" width="38.5" height="41" rx="4.5" fill="#6D9BD1" stroke="#3F5F86" stroke-width="1.5"/><rect x="162" y="68.5" width="27.8" height="16.5" rx="1.5" fill="#EDEDED" stroke="#3F5F86" stroke-width="0.8"/><path d="M165.3 72.6H186.6M165.3 77H186.6M165.3 81.1H186.6" stroke="#555" stroke-width="1.3"/><rect x="164" y="92.5" width="24" height="14.5" fill="#E8E8E8" stroke="#3F5F86" stroke-width="0.8"/><rect x="167.2" y="95.8" width="5.6" height="8" fill="#3F5F86"/><path d="M224 69.8H254L264 79V106H224Z" fill="#fff"/><path d="M254 69.8V79H264Z" fill="#DADADA"/><rect x="230" y="75" width="29" height="25" fill="none" stroke="#BCD0F0" stroke-width="1.2"/><path d="M226 70H245.8V81.6H235.7V109.7H226Z" fill="#FDE07A" stroke="#C9A41E" stroke-width="1.5"/><path d="M226.5 82H232M226.5 86.5H232M226.5 91H232M226.5 95.5H232M226.5 100H232M226.5 104.5H232" stroke="#B8920C" stroke-width="1.3"/><rect x="245.8" y="90" width="22" height="22" rx="4" fill="#C8A200"/><rect x="246.8" y="91" width="20" height="10.0" rx="3" fill="#D7BC45" opacity="0.7"/><path d="M256.8 101.0L256.8 93.1M256.8 101.0L249.9 97.0M256.8 101.0L249.9 105.0M256.8 101.0L256.8 108.9M256.8 101.0L263.7 105.0M256.8 101.0L263.7 97.0" stroke="#fff" stroke-width="2.4" stroke-linecap="round"/><circle cx="256.8" cy="101.0" r="4.4" fill="#fff"/><circle cx="256.8" cy="101.0" r="1.98" fill="#C8A200"/><rect x="292" y="69.8" width="40" height="36" fill="#fff"/><path d="M323 69.8L332 78V69.8Z" fill="#727272"/><path d="M323 69.8V78H332Z" fill="#DADADA"/><rect x="296" y="74" width="31" height="27.5" fill="none" stroke="#BCD0F0" stroke-width="1.3"/><path d="M315.5 88.5L333 107" stroke="#2a2a2a" stroke-width="7.5" stroke-linecap="round"/><path d="M315.5 88.5L333 107" stroke="#E3C86A" stroke-width="4.5" stroke-linecap="round"/><circle cx="331.5" cy="105.5" r="1.3" fill="#555"/><circle cx="310.5" cy="83" r="8.5" fill="#2a2a2a"/><circle cx="310.5" cy="83" r="6.8" fill="#DADADA"/><path d="M312 88.5L318 93" stroke="#2a2a2a" stroke-width="4"/><path d="M300.5 79L306 73.5L311.5 80.5L309 83Z" fill="#fff" stroke="#2a2a2a" stroke-width="1.5" stroke-linejoin="round"/><circle cx="369" cy="76.6" r="8.5" fill="#D9703A" stroke="#8A4018" stroke-width="1.3"/><line x1="385" y1="83" x2="398" y2="70.5" stroke="#3F5F86" stroke-width="4.5" stroke-linecap="round"/><line x1="385" y1="83" x2="398" y2="70.5" stroke="#6D9BD1" stroke-width="2.2" stroke-linecap="round"/><rect x="361" y="91" width="16.5" height="16" fill="#8FB28F" stroke="#4E8A4E" stroke-width="1.5"/><text x="382.5" y="106" font-family="Liberation Sans" font-size="23" fill="#333" stroke="#eee" stroke-width="1.2" paint-order="stroke">a</text><line x1="429" y1="80" x2="429" y2="97" stroke="#BDBDBD" stroke-width="3" stroke-linecap="round"/><rect x="433.2" y="57.2" width="63.7" height="63.4" rx="6" fill="none" stroke="#F4F4F4" stroke-width="2"/><path d="M458 110.5L447 93.5C445 90 447.5 87.5 450.5 89.5L456 94V68C456 63.5 462.5 63.5 462.5 68V83V71C462.5 66.5 469 66.5 469 71V84V74C469 69.5 475.5 69.5 475.5 74V85V78.5C475.5 74.5 481.5 74.5 481.5 78.5V96C481.5 101.5 479.5 106 477.5 110.5Z" fill="#A8A8A8" transform="translate(-1.8 1.8)"/><path d="M458 110.5L447 93.5C445 90 447.5 87.5 450.5 89.5L456 94V68C456 63.5 462.5 63.5 462.5 68V83V71C462.5 66.5 469 66.5 469 71V84V74C469 69.5 475.5 69.5 475.5 74V85V78.5C475.5 74.5 481.5 74.5 481.5 78.5V96C481.5 101.5 479.5 106 477.5 110.5Z" fill="#fff" stroke="#111" stroke-width="1.7" stroke-linejoin="round"/><path d="M462.5 83V73M469 84V76M475.5 85V80" stroke="#111" stroke-width="1.4"/><rect x="513" y="68.5" width="26" height="26" fill="#86847A" opacity="0.55"/><path d="M532 65L541.5 74.5H536V80H528V74.5H522.5Z M532 110L541.5 100.5H536V95H528V100.5H522.5Z M510.5 87.5L520 78V83H525V92H520V97Z M554 87.5L544.5 78V83H539.5V92H544.5V97Z" fill="#7E8389" stroke="#6a6a6a" stroke-width="0.8"/><line x1="577.5" y1="109.0" x2="594.4" y2="92.6" stroke="#3a3a3a" stroke-width="6" stroke-linecap="butt"/><line x1="578.6" y1="108.0" x2="587.2" y2="99.6" stroke="#FCE14A" stroke-width="3"/><circle cx="590.1" cy="96.8" r="1.6" fill="#000"/><circle cx="604.8" cy="82.5" r="15.5" fill="#D6D6D6" stroke="#555" stroke-width="2.2"/><path d="M595.5 81.0A9.6 9.6 0 0 1 603.2 73.2" stroke="#fff" stroke-width="2" fill="none" opacity="0.9"/><path d="M604.8 73V92M595.3 82.5H614.3" stroke="#3F5F86" stroke-width="6.2" stroke-linecap="round"/><path d="M604.8 73V92M595.3 82.5H614.3" stroke="#6D9BD1" stroke-width="4.2" stroke-linecap="round"/><line x1="645.4" y1="109.0" x2="662.3" y2="92.6" stroke="#3a3a3a" stroke-width="6" stroke-linecap="butt"/><line x1="646.5" y1="108.0" x2="655.1" y2="99.6" stroke="#FCE14A" stroke-width="3"/><circle cx="658.0" cy="96.8" r="1.6" fill="#000"/><circle cx="672.7" cy="82.5" r="15.5" fill="#D6D6D6" stroke="#555" stroke-width="2.2"/><path d="M663.4 81.0A9.6 9.6 0 0 1 671.2 73.2" stroke="#fff" stroke-width="2" fill="none" opacity="0.9"/><path d="M663 82.5H682.5" stroke="#3F5F86" stroke-width="6.2" stroke-linecap="round"/><path d="M663 82.5H682.5" stroke="#6D9BD1" stroke-width="4.2" stroke-linecap="round"/><line x1="714.8" y1="109.0" x2="729.7" y2="93.5" stroke="#3a3a3a" stroke-width="6" stroke-linecap="butt"/><line x1="715.8" y1="107.9" x2="723.4" y2="100.1" stroke="#FCE14A" stroke-width="3"/><circle cx="725.9" cy="97.4" r="1.6" fill="#000"/><circle cx="739.8" cy="83" r="15.5" fill="#D6D6D6" stroke="#555" stroke-width="2.2"/><path d="M730.5 81.5A9.6 9.6 0 0 1 738.2 73.7" stroke="#fff" stroke-width="2" fill="none" opacity="0.9"/><path d="M719.5 64.5h17l-5 5l6 6l-5 5l-6 -6l-5 5z" fill="#6D9BD1" stroke="#3F5F86" stroke-width="1.5" stroke-linejoin="round"/><path d="M759.5 64.5h-17l5 5l-6 6l5 5l6 -6l5 5z" fill="#6D9BD1" stroke="#3F5F86" stroke-width="1.5" stroke-linejoin="round"/><path d="M759.5 104.5h-17l5 -5l-6 -6l5 -5l6 6l5 -5z" fill="#6D9BD1" stroke="#3F5F86" stroke-width="1.5" stroke-linejoin="round"/><rect x="784" y="68.4" width="16" height="26" fill="#7F7D74"/><line x1="783.0" y1="108.5" x2="799.4" y2="91.7" stroke="#666" stroke-width="6" stroke-linecap="butt"/><line x1="784.0" y1="107.4" x2="792.4" y2="98.9" stroke="#8a8a80" stroke-width="3"/><circle cx="809.9" cy="81" r="16" fill="#8C8C8C" stroke="#6a6a6a" stroke-width="2.2"/><rect x="852.7" y="68.4" width="14" height="26" fill="#EDEDED" stroke="#999" stroke-width="1"/><line x1="851.0" y1="108.5" x2="867.3" y2="91.7" stroke="#3a3a3a" stroke-width="6" stroke-linecap="butt"/><line x1="852.0" y1="107.4" x2="860.4" y2="98.9" stroke="#FCE14A" stroke-width="3"/><circle cx="863.2" cy="96.0" r="1.6" fill="#000"/><circle cx="877.8" cy="81" r="16" fill="#D6D6D6" stroke="#555" stroke-width="2.2"/><path d="M868.2 79.4A9.9 9.9 0 0 1 876.2 71.4" stroke="#fff" stroke-width="2" fill="none" opacity="0.9"/><rect x="920.5" y="68.4" width="14" height="26" fill="#828282"/><line x1="918.5" y1="108.5" x2="934.1" y2="92.4" stroke="#666" stroke-width="6" stroke-linecap="butt"/><line x1="919.5" y1="107.4" x2="927.4" y2="99.3" stroke="#8a8a80" stroke-width="3"/><circle cx="944.2" cy="82" r="15.5" fill="#8C8C8C" stroke="#6a6a6a" stroke-width="2.2"/><text x="944.2" y="89.5" text-anchor="middle" font-family="Liberation Sans" font-weight="bold" font-size="18" fill="#5f5f5f">1:1</text><line x1="986.2" y1="109.0" x2="1002.7" y2="92.1" stroke="#3a3a3a" stroke-width="6" stroke-linecap="butt"/><line x1="987.2" y1="107.9" x2="995.7" y2="99.3" stroke="#FCE14A" stroke-width="3"/><circle cx="998.5" cy="96.4" r="1.6" fill="#000"/><circle cx="1012.8" cy="81.7" r="15.5" fill="#D6D6D6" stroke="#555" stroke-width="2.2"/><path d="M1003.5 80.2A9.6 9.6 0 0 1 1011.2 72.4" stroke="#fff" stroke-width="2" fill="none" opacity="0.9"/><rect x="1010" y="89.5" width="22" height="21.7" rx="2" fill="#6D9BD1" stroke="#2F4766" stroke-width="1.3"/><path d="M1025 93.5L1015 100.3L1025 107" fill="none" stroke="#fff" stroke-width="3.2" stroke-linecap="round"/><line x1="1054.8" y1="109.0" x2="1071.3" y2="92.1" stroke="#666" stroke-width="6" stroke-linecap="butt"/><line x1="1055.8" y1="107.9" x2="1064.3" y2="99.3" stroke="#8a8a80" stroke-width="3"/><circle cx="1081.4" cy="81.7" r="15.5" fill="#8C8C8C" stroke="#6a6a6a" stroke-width="2.2"/><rect x="1078.4" y="89.5" width="21.4" height="21.7" rx="2" fill="#7A7F84" stroke="#5f5f5f" stroke-width="1.3"/><path d="M1085 93.5L1094 100.3L1085 107" fill="none" stroke="#9a9a9a" stroke-width="3.2" stroke-linecap="round"/><path d="M1128.5 67.5H1164V105.5H1128.5" fill="#E3E3E3" stroke="#9A9A9A" stroke-width="1.6"/><rect x="1124.5" y="65.5" width="8" height="42.0" rx="4" fill="#F2F2F2" stroke="#9A9A9A" stroke-width="1.6"/><rect x="1146.3" y="89.8" width="21.5" height="22.2" rx="4" fill="#C8A200"/><rect x="1147.3" y="90.8" width="19.5" height="10.1" rx="3" fill="#D7BC45" opacity="0.7"/><path d="M1157.0 100.9L1157.0 93.2M1157.0 100.9L1150.3 97.0M1157.0 100.9L1150.3 104.8M1157.0 100.9L1157.0 108.6M1157.0 100.9L1163.8 104.8M1157.0 100.9L1163.8 97.0" stroke="#fff" stroke-width="2.4" stroke-linecap="round"/><circle cx="1157.05" cy="100.89999999999999" r="4.3" fill="#fff"/><circle cx="1157.05" cy="100.89999999999999" r="1.9349999999999998" fill="#C8A200"/><path d="M1197 75L1211 72L1230 71.5L1231.5 96L1214 101L1189.5 95Z" fill="#DCDCDC" stroke="#9A9A9A" stroke-width="1.2"/><path d="M1198 84L1212 81.5L1229 80M1193 90L1210 88L1229 87.5M1205 74L1206 99M1217 72L1215 100" stroke="#A8A8A8" stroke-width="1" fill="none"/><rect x="1214.2" y="89.8" width="21.4" height="22.2" rx="4" fill="#C8A200"/><rect x="1215.2" y="90.8" width="19.4" height="10.1" rx="3" fill="#D7BC45" opacity="0.7"/><path d="M1224.9 100.9L1224.9 93.2M1224.9 100.9L1218.2 97.0M1224.9 100.9L1218.2 104.8M1224.9 100.9L1224.9 108.6M1224.9 100.9L1231.6 104.8M1224.9 100.9L1231.6 97.0" stroke="#fff" stroke-width="2.4" stroke-linecap="round"/><circle cx="1224.9" cy="100.89999999999999" r="4.28" fill="#fff"/><circle cx="1224.9" cy="100.89999999999999" r="1.9259999999999997" fill="#C8A200"/><path d="M1270.5 66.5H1289.5V101L1280 107.5L1270.5 101Z" fill="#6D9BD1" stroke="#3F5F86" stroke-width="1.6"/><rect x="1282" y="89.8" width="21.7" height="21.9" rx="4" fill="#C8A200"/><rect x="1283" y="90.8" width="19.7" height="9.95" rx="3" fill="#D7BC45" opacity="0.7"/><path d="M1292.8 100.8L1292.8 92.9M1292.8 100.8L1286.1 96.8M1292.8 100.8L1286.1 104.7M1292.8 100.8L1292.8 108.6M1292.8 100.8L1299.6 104.7M1292.8 100.8L1299.6 96.8" stroke="#fff" stroke-width="2.4" stroke-linecap="round"/><circle cx="1292.85" cy="100.75" r="4.34" fill="#fff"/><circle cx="1292.85" cy="100.75" r="1.9529999999999998" fill="#C8A200"/><path d="M1332.5 67.5H1367.5V105.5H1332.5" fill="#E3E3E3" stroke="#9A9A9A" stroke-width="1.6"/><rect x="1328.5" y="65.5" width="8" height="42.0" rx="4" fill="#F2F2F2" stroke="#9A9A9A" stroke-width="1.6"/><path d="M1350.6 66.5H1359.4V84.5L1355 87.6L1350.6 84.5Z" fill="#6D9BD1" stroke="#3F5F86" stroke-width="1.3"/><circle cx="1415.9" cy="87.6" r="20" fill="#EDEDED" stroke="#333" stroke-width="1.8"/><circle cx="1415.9" cy="71.1" r="1.1" fill="#2F4766"/><circle cx="1424.2" cy="73.3" r="1.1" fill="#4D82C2"/><circle cx="1430.2" cy="79.3" r="1.1" fill="#4D82C2"/><circle cx="1432.4" cy="87.6" r="1.1" fill="#2F4766"/><circle cx="1430.2" cy="95.8" r="1.1" fill="#4D82C2"/><circle cx="1424.2" cy="101.9" r="1.1" fill="#4D82C2"/><circle cx="1415.9" cy="104.1" r="1.1" fill="#2F4766"/><circle cx="1407.7" cy="101.9" r="1.1" fill="#4D82C2"/><circle cx="1401.6" cy="95.8" r="1.1" fill="#4D82C2"/><circle cx="1399.4" cy="87.6" r="1.1" fill="#2F4766"/><circle cx="1401.6" cy="79.3" r="1.1" fill="#4D82C2"/><circle cx="1407.7" cy="73.3" r="1.1" fill="#4D82C2"/><path d="M1415.9 71V87.6L1424.5 94.5" fill="none" stroke="#8A8A8A" stroke-width="2"/><defs><linearGradient id="rg146366" x1="0" y1="0" x2="0" y2="1"><stop offset="0" stop-color="#8DB7E8"/><stop offset="0.5" stop-color="#5B95D6"/><stop offset="1" stop-color="#3C78C4"/></linearGradient></defs><g transform="translate(1463.5 66.2) scale(0.990 0.991)" fill="url(#rg146366)" stroke="#3A6FB0" stroke-width="0.9" stroke-linejoin="round"><path d="M0.5 19.5C2 8 12 1 22 1.5C28 2 32 4 35 6.5L40 1.5V20H22L28.5 13.5C24 10 18 9.5 12 12C7 14.5 4 17 2.5 19.5Z"/><path d="M40.5 24C39 35.5 29 43 19 42.5C13 42 9 40 6 37.5L1 42.5V24H19L12.5 30.5C17 34 23 34.5 29 32C34 29.5 37 27 38.5 24Z"/></g><line x1="1532.7" y1="79" x2="1532.7" y2="97" stroke="#BDBDBD" stroke-width="3" stroke-linecap="round"/><circle cx="1561" cy="81.5" r="16" fill="#6D9BD1" stroke="#4F77A6" stroke-width="1"/><g transform="translate(1561 81.5) scale(1.0)"><circle cx="3" cy="-9.5" r="2.6" fill="#fff"/><path d="M-1.5 -4H4L0.5 8C0 9.5 1 10 3 8.5L3.8 10C1 12.5 -5 13.5 -4.5 9L-1.8 -1H-3.5Z" fill="#fff"/></g><path transform="translate(1566.5 84.5) scale(1.0)" d="M0 0L0 0L22 15L12.5 16L19 26.5L14.5 29L8 18.5L1.5 25Z" fill="#fff" stroke="#111" stroke-width="1.8" stroke-linejoin="round"/><path d="M1616 67.5V108M1656 67.5V108" stroke="#555" stroke-width="1.5"/><rect x="1614.6" y="106" width="43" height="3.5" fill="#E8E8E8" stroke="#555" stroke-width="1"/><path d="M1616 72.7H1656M1616 85H1656M1616 96.9H1656" stroke="#555" stroke-width="1.2"/><circle cx="1630.6" cy="72.7" r="3.6" fill="#F08080" stroke="#B01818" stroke-width="1.5"/><circle cx="1646.7" cy="72.7" r="3.6" fill="#F08080" stroke="#B01818" stroke-width="1.5"/><circle cx="1626.8" cy="85" r="3.6" fill="#A8E0A0" stroke="#4E9A4E" stroke-width="1.5"/><circle cx="1637" cy="85" r="3.6" fill="#A8E0A0" stroke="#4E9A4E" stroke-width="1.5"/><circle cx="1626.8" cy="96.9" r="3.6" fill="#A8D0F0" stroke="#3A6A9A" stroke-width="1.5"/><circle cx="1637" cy="96.9" r="3.6" fill="#A8D0F0" stroke="#3A6A9A" stroke-width="1.5"/><circle cx="1647.3" cy="96.9" r="3.6" fill="#A8D0F0" stroke="#3A6A9A" stroke-width="1.5"/><path d="M1703.7 97.1L1703.7 105.3M1697.3 94.5L1691.5 100.3M1694.7 88.1L1686.5 88.1M1697.3 81.7L1691.5 75.9M1703.7 79.1L1703.7 70.9M1710.1 81.7L1715.9 75.9M1712.7 88.1L1720.9 88.1M1710.1 94.5L1715.9 100.3" stroke="#4F86CF" stroke-width="9.5" stroke-linecap="round"/><circle cx="1703.7" cy="88.1" r="13.5" fill="#4F86CF"/><path d="M1703.7 97.1L1703.7 105.3M1697.3 94.5L1691.5 100.3M1694.7 88.1L1686.5 88.1M1697.3 81.7L1691.5 75.9M1703.7 79.1L1703.7 70.9M1710.1 81.7L1715.9 75.9M1712.7 88.1L1720.9 88.1M1710.1 94.5L1715.9 100.3" stroke="#9BB8DD" stroke-width="5.8" stroke-linecap="round"/><circle cx="1703.7" cy="88.1" r="11.7" fill="#9BB8DD"/><circle cx="1703.7" cy="88.1" r="5.3" fill="#727272" stroke="#4F86CF" stroke-width="2.2"/><path d="M1812.5 85l3.5 2.8l-3.5 2.8M1817.5 85l3.5 2.8l-3.5 2.8" fill="none" stroke="#333" stroke-width="1.3"/><line x1="5" y1="157" x2="5" y2="175" stroke="#BDBDBD" stroke-width="3" stroke-linecap="round"/><path d="M16.2 163.5L39 156.8L47.2 179L24.5 185.5Z" fill="#DF7A3E" stroke="#A0522D" stroke-width="1.2"/><rect x="23" y="149" width="21.5" height="27.5" fill="#F2C832" stroke="#B49A1E" stroke-width="1.2" transform="rotate(-5 33.7 162.7)"/><path d="M37 142.8L63.4 148.5L58 173L31.7 167Z" fill="#6D9BD1" stroke="#3F5F86" stroke-width="1.4"/><rect x="46" y="172" width="17.7" height="17.2" rx="3.5" fill="#5A9A5A"/><path d="M54.85 174.7V186.5M48.7 180.6H61.0" stroke="#fff" stroke-width="3.9"/><circle cx="108.4" cy="160" r="16.5" fill="#A9C8EA" stroke="#4A7AB0" stroke-width="1.2"/><path d="M96 151C98 148 102 149 103 152C104 155 101 157 102 160C103 163 100 166 98 163C96 160 94 156 96 151Z" fill="#2F5A8A"/><path d="M107 148C110 146 114 147 117 149C121 150 124 153 123 156C121 158 118 157 116 159C114 161 111 159 109 157C107 155 105 151 107 148Z" fill="#2F5A8A"/><path d="M106 160C109 159 112 161 112 165C112 169 110 172 108 172C106 169 104 164 106 160Z" fill="#2F5A8A"/><path d="M117 159C119 158 121 160 120 163L117 163Z" fill="#2F5A8A"/><path d="M84.8 156.8L108.4 170V189.2L84.8 174.5Z" fill="#D8AE00" stroke="#111" stroke-width="1.5" stroke-linejoin="round"/><path d="M131.3 156.8L108.4 170V189.2L131.3 174.5Z" fill="#FFF476" stroke="#111" stroke-width="1.5" stroke-linejoin="round"/><path d="M84.8 156.8L93 152M131.3 156.8L123.5 152" stroke="#111" stroke-width="1.5"/><rect x="114.3" y="172" width="17.7" height="17.7" rx="4" fill="#C8A200"/><path d="M117.1 180.8L129.2 180.8M118.9 176.6L127.4 185.1M123.1 174.8L123.1 186.9M127.4 176.6L118.9 185.1" stroke="#fff" stroke-width="3" stroke-linecap="round"/><path d="M157.1 146.9L169.7 176L183.4 146.9L195.5 146.9" fill="none" stroke="#2C4058" stroke-width="2.8"/><circle cx="157.1" cy="146.9" r="3.6" fill="#EEE" stroke="#2C4058" stroke-width="2"/><circle cx="169.7" cy="176" r="3.6" fill="#EEE" stroke="#2C4058" stroke-width="2"/><circle cx="183.4" cy="146.9" r="3.6" fill="#EEE" stroke="#2C4058" stroke-width="2"/><circle cx="195.5" cy="146.9" r="3.6" fill="#EEE" stroke="#2C4058" stroke-width="2"/><rect x="182.2" y="172" width="17.7" height="17.7" rx="4" fill="#C8A200"/><path d="M185.0 180.8L197.1 180.8M186.8 176.6L195.3 185.1M191.0 174.8L191.0 186.9M195.3 176.6L186.8 185.1" stroke="#fff" stroke-width="3" stroke-linecap="round"/><path d="M221 189C226 172 240 152 264.8 142C262 160 250 176 229 178Z" fill="#8FB5E0" stroke="#24466E" stroke-width="1.8"/><path d="M223 186L262 146" stroke="#24466E" stroke-width="1.2"/><path d="M231 173L246 168M234 168L251 162M238 162L255 156M242 157L258 151M246 152L260 147" stroke="#fff" stroke-width="1.4" opacity="0.85"/><rect x="250" y="172" width="17.8" height="17.7" rx="4" fill="#C8A200"/><path d="M252.8 180.8L265.0 180.8M254.6 176.6L263.2 185.1M258.9 174.8L258.9 186.9M263.2 176.6L254.6 185.1" stroke="#fff" stroke-width="3" stroke-linecap="round"/><path d="M301 147.2V154M306.9 147.2V154M312.8 147.2V154M318.7 147.2V154M324.9 147.2V154M301 175V181.9M306.9 175V181.9M312.8 175V181.9" stroke="#2C4A70" stroke-width="1.8"/><rect x="294.5" y="154.3" width="37" height="20.9" rx="2.5" fill="#6D9BD1" stroke="#2C4A70" stroke-width="1.6"/><path d="M297 157.5H329" stroke="#BCD4EF" stroke-width="1.3"/><rect x="318.4" y="172" width="17.7" height="17.7" rx="4" fill="#C8A200"/><path d="M321.2 180.8L333.3 180.8M323.0 176.6L331.5 185.1M327.2 174.8L327.2 186.9M331.5 176.6L323.0 185.1" stroke="#fff" stroke-width="3" stroke-linecap="round"/><rect x="358.7" y="144.4" width="42.5" height="23" fill="#6D9BD1" stroke="#1F3A5C" stroke-width="1.8"/><path d="M381 144.4V167.4M358.7 144.4L381 167.4M381 144.4L358.7 167.4M381 167.4L401.2 144.4" stroke="#1F3A5C" stroke-width="1.6"/><rect x="358.7" y="167.4" width="22.3" height="20" fill="#6D9BD1" stroke="#1F3A5C" stroke-width="1.8"/><path d="M370 167.4V187.4M358.7 177.4H381" stroke="#1F3A5C" stroke-width="1.6"/><rect x="386.3" y="172" width="17.7" height="17.7" rx="4" fill="#C8A200"/><path d="M389.1 180.8L401.2 180.8M390.9 176.6L399.4 185.1M395.2 174.8L395.2 186.9M399.4 176.6L390.9 185.1" stroke="#fff" stroke-width="3" stroke-linecap="round"/><rect x="427" y="144.4" width="42.5" height="43" rx="3" fill="#C5D7EC" stroke="#2C4A70" stroke-width="1.5"/><path d="M430.5 147L440.5 177.5L455 147M455 147L468 147" fill="none" stroke="#2C4A70" stroke-width="2.2"/><circle cx="430.5" cy="147" r="3.2" fill="#EEE" stroke="#2C4A70" stroke-width="1.5"/><circle cx="440.5" cy="177.5" r="3.2" fill="#EEE" stroke="#2C4A70" stroke-width="1.5"/><circle cx="455" cy="147" r="3.2" fill="#EEE" stroke="#2C4A70" stroke-width="1.5"/><circle cx="468" cy="147" r="3.2" fill="#EEE" stroke="#2C4A70" stroke-width="1.5"/><rect x="454.4" y="172" width="17.7" height="17.7" rx="4" fill="#C8A200"/><path d="M457.2 180.8L469.3 180.8M459.0 176.6L467.5 185.1M463.2 174.8L463.2 186.9M467.5 176.6L459.0 185.1" stroke="#fff" stroke-width="3" stroke-linecap="round"/><line x1="497" y1="157" x2="497" y2="175" stroke="#BDBDBD" stroke-width="3" stroke-linecap="round"/><path d="M515.4 175.0L529.1 148.3L535.3 151.5L521.7 178.2Z" fill="#6F6B66" stroke="#605c57" stroke-width="1"/><path d="M529.1 148.3L531.6 143.4L537.8 146.6L535.3 151.5Z" fill="#8a8a8a"/><path d="M514.0 185.5L515.4 175.0L521.7 178.2Z" fill="#8a8a8a"/><path d="M525.7 176.7L541.3 148.4L547.4 151.8L531.9 180.1Z" fill="#6F6B66" stroke="#605c57" stroke-width="1"/><path d="M541.3 148.4L544.1 143.3L550.3 146.7L547.4 151.8Z" fill="#8a8a8a"/><path d="M523.6 187.8L525.7 176.7L531.9 180.1Z" fill="#8a8a8a"/><path d="M553 182L560.5 182L556.8 188.5Z" fill="#9a9a9a"/><path d="M586.7 177.5L602.8 148.4L609.8 152.2L593.7 181.4Z" fill="#E8CF2A" stroke="#8C7A10" stroke-width="1"/><path d="M602.8 148.4L605.7 143.1L612.7 146.9L609.8 152.2Z" fill="#EFEFEF"/><path d="M584.8 189.2L586.7 177.5L593.7 181.4Z" fill="#E0E0E0"/><path d="M594 172L604 152" stroke="#FFF6A0" stroke-width="1.5"/><rect x="648" y="145.5" width="36.5" height="37" rx="4" fill="#7E7E7E" stroke="#6a6a6a" stroke-width="1"/><rect x="653" y="147.5" width="25" height="14" fill="#8E8E8E"/><rect x="655" y="170" width="24" height="12" fill="#8a8a8a"/><path d="M671.6 180.0L680.2 162.2L684.7 164.3L676.1 182.1Z" fill="#6F6B66" stroke="#605c57" stroke-width="1"/><path d="M680.2 162.2L681.7 158.9L686.3 161.1L684.7 164.3Z" fill="#8a8a8a"/><path d="M671.0 187.0L671.6 180.0L676.1 182.1Z" fill="#8a8a8a"/><path d="M721 181L751 151" stroke="#848484" stroke-width="2.6" stroke-dasharray="5 3"/><rect x="717" y="178" width="6" height="6" fill="#848484"/><rect x="748.5" y="147" width="6" height="6" fill="#848484"/><path d="M775.2 163.4H782.5L778.8 170.8Z" fill="#a0a0a0"/><path d="M812 150C818 142 830 146 838 148C846 148 851 152 849 160C848 166 842 168 836 166C826 162 818 170 812 167C805 163 806 156 812 150Z" fill="#7E817D" stroke="#666" stroke-width="1.2"/><rect x="831" y="169" width="20.5" height="20" rx="3" fill="#6f6d66"/><path d="M841.2 171.5V186.5M834.5 175L848 183M834.5 183L848 175" stroke="#9a9a9a" stroke-width="1.6"/><circle cx="841.2" cy="179" r="2.5" fill="#9a9a9a"/><rect x="882" y="148.7" width="11" height="11" fill="#666"/><path d="M884.5 151L890.5 157M890.5 151L884.5 157" stroke="#999" stroke-width="1.3"/><path d="M893 154H913M885 160L878 184" stroke="#6a6a6a" stroke-width="1"/><path d="M893 184L912 163" stroke="#77746b" stroke-width="5"/><path d="M891 165L915 186" stroke="#77746b" stroke-width="5"/><path d="M888 162L901 155" stroke="#8c8c8c" stroke-width="5"/><path d="M935.2 163.4H942.6L938.9 170.8Z" fill="#a0a0a0"/><rect x="969.5" y="147.5" width="38" height="10" fill="#7D7B70" stroke="#6e6c62" stroke-width="1"/><rect x="969.5" y="160.5" width="38" height="10" fill="#7D7B70" stroke="#6e6c62" stroke-width="1"/><rect x="969.5" y="174" width="38" height="10" fill="#7D7B70" stroke="#6e6c62" stroke-width="1"/><path d="M984.2 176.8L1001.6 149.0L1008.0 153.0L990.5 180.8Z" fill="#6F6B66" stroke="#605c57" stroke-width="1"/><path d="M1001.6 149.0L1004.8 144.0L1011.2 148.0L1008.0 153.0Z" fill="#8a8a8a"/><path d="M981.5 188.0L984.2 176.8L990.5 180.8Z" fill="#8a8a8a"/><rect x="1040.5" y="146.5" width="23" height="30" fill="#767465" opacity="0.9"/><rect x="1041" y="150" width="31" height="3.5" fill="#6b5e5e"/><path d="M1042 158H1072L1069 187.5H1045Z" fill="#7D7070" stroke="#6b5e5e" stroke-width="1.5"/><path d="M1050 162V184M1057 162V184M1064 162V184" stroke="#8a8282" stroke-width="2.5"/><path d="M1104 163.5L1127 166M1110 153L1130 170" stroke="#8d8d8d" stroke-width="1.6"/><ellipse cx="1139" cy="158" rx="6" ry="4" fill="none" stroke="#6a5c5c" stroke-width="2" transform="rotate(-30 1139 158)"/><ellipse cx="1138" cy="175" rx="6" ry="4" fill="none" stroke="#6a5c5c" stroke-width="2" transform="rotate(40 1138 175)"/><path d="M1185 146.5H1200L1207 153.5V176H1185Z" fill="#858585"/><path d="M1177 154.5H1192L1199 161.5V185.5H1177Z" fill="#999" stroke="#6e6e6e" stroke-width="1.2"/><path d="M1180 168H1195M1180 172H1192M1180 176H1195M1180 180H1195" stroke="#777" stroke-width="1.2"/><rect x="1246.5" y="146.5" width="27.5" height="37.5" fill="#8a8a8a" stroke="#7a7670" stroke-width="1"/><rect x="1252" y="145.7" width="16" height="5" fill="#8e8e8e"/><path d="M1249.5 152.5H1265L1271 158.5V181H1249.5Z" fill="#9c9c9c" stroke="#666" stroke-width="1.2"/><path d="M1252 163H1267M1252 167H1264M1252 171H1267M1252 175H1267" stroke="#777" stroke-width="1.2"/><path d="M1324.3 162.7l3.5 2.8l-3.5 2.8M1329.3 162.7l3.5 2.8l-3.5 2.8" fill="none" stroke="#333" stroke-width="1.3"/><line x1="1352.8" y1="157" x2="1352.8" y2="175" stroke="#BDBDBD" stroke-width="3" stroke-linecap="round"/><rect x="1370.5" y="150.5" width="39" height="15" fill="#DDE6F2" stroke="#3F5F86" stroke-width="1.8"/><path d="M1376 152V164M1392 152V164M1400 152V164" stroke="#A9C4E6" stroke-width="4"/><rect x="1381" y="146.5" width="11.5" height="23" fill="#6D9BD1" stroke="#3F5F86" stroke-width="1.8"/><path d="M1385 173.7V169" stroke="#3F5F86" stroke-width="1.5"/><circle cx="1455.6" cy="165.6" r="14" fill="none" stroke="#6a6e71" stroke-width="1.6" stroke-dasharray="10 4"/><path d="M1455.6 144.2V187M1434.3 165.6H1477.8" stroke="#6a6e71" stroke-width="2.5"/><line x1="1494.7" y1="159" x2="1494.7" y2="172" stroke="#333" stroke-width="2" stroke-linecap="round"/><rect x="1515" y="149" width="26" height="26" fill="#EFEFEF" stroke="#888" stroke-width="1.5"/><circle cx="1533.8" cy="167.8" r="13.3" fill="none" stroke="#3F5F86" stroke-width="1.8" stroke-dasharray="14 5"/><path d="M1533.8 152.3V183.3M1518.4 167.8H1549.3" stroke="#5B8FCF" stroke-width="3.5" stroke-linecap="round"/><path d="M1553 181.9H1560.4L1556.7 188.5Z" fill="#b5b5b5"/><circle cx="1595.7" cy="160.2" r="12.5" fill="none" stroke="#686c6f" stroke-width="1.4"/><path d="M1595.7 144.5V176M1580 160.2H1611.5" stroke="#686c6f" stroke-width="2.2"/><path d="M1584 187L1597 160L1619 152" stroke="#868686" stroke-width="2.2" stroke-dasharray="3.5 2.5" fill="none"/><path d="M1613.9 173V186.5M1607 179.6H1620.5" stroke="#858585" stroke-width="3" stroke-linecap="round"/><path d="M1678.8 162.7l3.5 2.8l-3.5 2.8M1683.8 162.7l3.5 2.8l-3.5 2.8" fill="none" stroke="#333" stroke-width="1.3"/><line x1="1706.8" y1="158" x2="1706.8" y2="175" stroke="#BDBDBD" stroke-width="3" stroke-linecap="round"/><rect x="1721" y="145" width="42" height="38" fill="#E6E6E6" stroke="#222" stroke-width="1.6" stroke-dasharray="2.5 2"/><rect x="1722.5" y="147" width="27" height="26" fill="#FCE14A" stroke="#C9A41E" stroke-width="1.8"/><path transform="translate(1738 159.7) scale(1.02)" d="M0 0L0 0L22 15L12.5 16L19 26.5L14.5 29L8 18.5L1.5 25Z" fill="#fff" stroke="#111" stroke-width="1.8" stroke-linejoin="round"/><path d="M1781 163.4H1789L1785 170.8Z" fill="#b0b0b0"/><path d="M1812.3 162.7l3.5 2.8l-3.5 2.8M1817.3 162.7l3.5 2.8l-3.5 2.8" fill="none" stroke="#333" stroke-width="1.3"/><rect x="13" y="258.7" width="22" height="22.2" fill="#EFEFEF" stroke="#888" stroke-width="1.3"/><rect x="28.1" y="276.1" width="11.7" height="11.4" rx="3.5" fill="#5A9A5A"/><path d="M33.95 277.9V285.7M29.9 281.8H38.0" stroke="#fff" stroke-width="2.6"/><defs><linearGradient id="rg64257" x1="0" y1="0" x2="0" y2="1"><stop offset="0" stop-color="#8DB7E8"/><stop offset="0.5" stop-color="#5B95D6"/><stop offset="1" stop-color="#3C78C4"/></linearGradient></defs><g transform="translate(64.6 257.2) scale(0.659 0.664)" fill="url(#rg64257)" stroke="#3A6FB0" stroke-width="0.9" stroke-linejoin="round"><path d="M0.5 19.5C2 8 12 1 22 1.5C28 2 32 4 35 6.5L40 1.5V20H22L28.5 13.5C24 10 18 9.5 12 12C7 14.5 4 17 2.5 19.5Z"/><path d="M40.5 24C39 35.5 29 43 19 42.5C13 42 9 40 6 37.5L1 42.5V24H19L12.5 30.5C17 34 23 34.5 29 32C34 29.5 37 27 38.5 24Z"/></g><path d="M117.5 257.5H142.5V263.4L133.5 273.7V287L126.5 283.5V273.7L117.5 263.4Z" fill="#6D9BD1" stroke="#3F5F86" stroke-width="1.4" stroke-linejoin="round"/><rect x="118.5" y="258.5" width="23.0" height="4.7" fill="#FCE14A"/><path d="M170 260V283M170 260H196M170 270H176M170 281H176" stroke="#BDBDBD" stroke-width="1.6" fill="none"/><rect x="176" y="266" width="6" height="6" fill="#F0A020" stroke="#E68A00" stroke-width="0.8"/><rect x="176" y="277" width="6" height="6" fill="#F0A020" stroke="#E68A00" stroke-width="0.8"/><path d="M186 284V268.5H179L189 257.5L198 268.5H192V284Z" fill="#6D9BD1" stroke="#3F5F86" stroke-width="1.6" stroke-linejoin="round"/><circle cx="233.7" cy="271.9" r="12.6" fill="#6D9BD1" stroke="#4F77A6" stroke-width="1.2"/><g transform="translate(233.7 271.9) scale(0.787)"><circle cx="3" cy="-9.5" r="2.6" fill="#fff"/><path d="M-1.5 -4H4L0.5 8C0 9.5 1 10 3 8.5L3.8 10C1 12.5 -5 13.5 -4.5 9L-1.8 -1H-3.5Z" fill="#fff"/></g><path d="M16 846L28 850L24 863L11 857Z" fill="#E33" /><path d="M17.5 841L30 846L27.5 853L15 848Z" fill="#F5DC3C"/><path d="M15 848L27.5 853L25 859L13 854Z" fill="#6F9BD6"/><path d="M22 855L30 848L34 853L27 864Z" fill="#DDB070" stroke="#C08030" stroke-width="1"/><path d="M31 850L40 842" stroke="#D89030" stroke-width="3" stroke-linecap="round"/><path d="M64 851V867H85" stroke="#999" stroke-width="1.2" fill="none"/><rect x="68" y="843" width="20" height="19" fill="#EEE" stroke="#999" stroke-width="1.2"/><rect x="73" y="840" width="16" height="17" fill="#F4F4F4" stroke="#999" stroke-width="1"/><path d="M80 857V838C80 835 84 835 84 838V856" fill="none" stroke="#2F5A8A" stroke-width="1.5"/><rect x="80.5" y="855.5" width="11.5" height="11.5" rx="3.5" fill="#5A9A5A"/><path d="M86.25 857.2V865.3M82.2 861.25H90.3" stroke="#fff" stroke-width="2.5"/><path d="M116 850C124 836 140 838 144 844" stroke="#ccc" stroke-width="1" fill="none"/><path d="M116.5 852C124 842 136 842 143 852C136 861 124 861 116.5 852Z" fill="#EEE" stroke="#ccc" stroke-width="1"/><circle cx="129.5" cy="851" r="7" fill="#5A8FD0" stroke="#2F5A8A" stroke-width="1"/><circle cx="129.5" cy="850" r="3" fill="#111"/><circle cx="128" cy="848.5" r="1" fill="#fff"/><path d="M143 859H151L147 867Z" fill="#a5a5a5"/><path d="M169 837.5H195.5V843.4L186.0 853.7V867L178.5 863.5V853.7L169 843.4Z" fill="#6D9BD1" stroke="#3F5F86" stroke-width="1.4" stroke-linejoin="round"/><rect x="170" y="838.5" width="24.5" height="4.7" fill="#FCE14A"/><path d="M195 859.5H203L199 867Z" fill="#a5a5a5"/><path transform="translate(222 838.3) scale(1.036 1.028)" d="M12.5 3.2C11 0.8 8.5 0.5 6.5 0.8C3.5 1.3 2 3.2 2 5.2C2 7.5 4 8.8 7 8.9C3.5 9 1 11 1 13.5C1 16.5 4 17.8 7 17.8C10 17.8 12.5 16.3 13.5 14" fill="none" stroke="#6B3A8C" stroke-width="2.4" stroke-linecap="round"/><circle transform="translate(222 838.3) scale(1.036 1.028)" cx="12.3" cy="3.3" r="1.6" fill="#6B3A8C"/><path d="M235.5 855H250V859L245 863V868H240.5V863L235.5 859Z" fill="#B5B5B5" stroke="#999" stroke-width="0.8"/><path d="M264.8 849.3H272.9L268.8 856.7Z" fill="#a5a5a5"/><path d="M298 841V864M298 841H324M298 851H304M298 862H304" stroke="#BDBDBD" stroke-width="1.6" fill="none"/><rect x="304" y="847" width="6" height="6" fill="#F0A020" stroke="#E68A00" stroke-width="0.8"/><rect x="304" y="858" width="6" height="6" fill="#F0A020" stroke="#E68A00" stroke-width="0.8"/><path d="M312 838.5V854H306L315.5 865L325 854H319V838.5Z" fill="#6D9BD1" stroke="#3F5F86" stroke-width="1.6" stroke-linejoin="round"/><path d="M350 840V863M350 840H376M350 850H356M350 861H356" stroke="#BDBDBD" stroke-width="1.6" fill="none"/><rect x="356" y="846" width="6" height="6" fill="#F0A020" stroke="#E68A00" stroke-width="0.8"/><rect x="356" y="857" width="6" height="6" fill="#F0A020" stroke="#E68A00" stroke-width="0.8"/><path d="M366 864V848.5H359L369 837.5L378 848.5H372V864Z" fill="#6D9BD1" stroke="#3F5F86" stroke-width="1.6" stroke-linejoin="round"/><rect x="401" y="838.8" width="22" height="22" fill="#EFEFEF" stroke="#888" stroke-width="1.3"/><rect x="416.2" y="856" width="11.6" height="9.6" rx="2" fill="#E84040"/><path d="M418.5 860.8H425.5" stroke="#fff" stroke-width="2.2"/><path d="M555.3 908.5L568.8 888.3L574.2 892.0L560.7 912.1Z" fill="#E8CF2A" stroke="#8C7A10" stroke-width="1"/><path d="M568.8 888.3L571.3 884.7L576.7 888.3L574.2 892.0Z" fill="#EFEFEF"/><path d="M553.5 917.0L555.3 908.5L560.7 912.1Z" fill="#E0E0E0"/><rect x="604" y="889.5" width="25" height="6" fill="#7E7C70" stroke="#706e64" stroke-width="0.8"/><rect x="604" y="900" width="25" height="6" fill="#7E7C70" stroke="#706e64" stroke-width="0.8"/><rect x="604" y="910.5" width="25" height="6" fill="#7E7C70" stroke="#706e64" stroke-width="0.8"/><path d="M612.9 908.4L625.4 889.4L630.0 892.5L617.5 911.5Z" fill="#6F6B66" stroke="#605c57" stroke-width="1"/><path d="M625.4 889.4L627.7 886.0L632.3 889.0L630.0 892.5Z" fill="#8a8a8a"/><path d="M611.0 916.3L612.9 908.4L617.5 911.5Z" fill="#8a8a8a"/><rect x="654" y="887.5" width="28" height="28.5" rx="3" fill="#7E7E7E" stroke="#777560" stroke-width="1"/><rect x="658" y="889.5" width="19" height="10" fill="#8E8E8E"/><rect x="660" y="906" width="18" height="9" fill="#8a8a8a"/><path d="M671.6 911.5L679.2 898.3L683.1 900.5L675.5 913.7Z" fill="#6F6B66" stroke="#605c57" stroke-width="1"/><path d="M679.2 898.3L680.5 895.9L684.5 898.1L683.1 900.5Z" fill="#8a8a8a"/><path d="M671.0 917.0L671.6 911.5L675.5 913.7Z" fill="#8a8a8a"/><defs><linearGradient id="rg706887" x1="0" y1="0" x2="0" y2="1"><stop offset="0" stop-color="#8DB7E8"/><stop offset="0.5" stop-color="#5B95D6"/><stop offset="1" stop-color="#3C78C4"/></linearGradient></defs><g transform="translate(706 887.5) scale(0.683 0.670)" fill="url(#rg706887)" stroke="#3A6FB0" stroke-width="0.9" stroke-linejoin="round"><path d="M0.5 19.5C2 8 12 1 22 1.5C28 2 32 4 35 6.5L40 1.5V20H22L28.5 13.5C24 10 18 9.5 12 12C7 14.5 4 17 2.5 19.5Z"/><path d="M40.5 24C39 35.5 29 43 19 42.5C13 42 9 40 6 37.5L1 42.5V24H19L12.5 30.5C17 34 23 34.5 29 32C34 29.5 37 27 38.5 24Z"/></g><line x1="751" y1="895" x2="751" y2="909" stroke="#333" stroke-width="2" stroke-linecap="round"/><rect x="767" y="889" width="25" height="26" fill="#818181" stroke="#777" stroke-width="1"/><path d="M769 895H790M769 901H790M769 907H790" stroke="#9a9a9a" stroke-width="2"/><rect x="782" y="904" width="16" height="14" rx="2" fill="#757268"/><rect x="820" y="889" width="18" height="20" fill="#79786a"/><path d="M821 892H842M822 897H841L839 916H824Z" fill="#7a6e6e" stroke="#6b5e5e" stroke-width="1.2"/><path d="M828 900V914M832 900V914M836 900V914" stroke="#8a8282" stroke-width="1.6"/><path d="M871 904L886 906M876 896L888 907" stroke="#8d8d8d" stroke-width="1.2"/><ellipse cx="894" cy="900" rx="4" ry="3" fill="none" stroke="#6a5c5c" stroke-width="1.6" transform="rotate(-30 894 900)"/><ellipse cx="893.5" cy="910" rx="4" ry="3" fill="none" stroke="#6a5c5c" stroke-width="1.6" transform="rotate(40 893.5 910)"/><path d="M932 889H942L946 893V908H932Z" fill="#858585"/><path d="M926.5 894.5H936.5L941 899V914.5H926.5Z" fill="#999" stroke="#6e6e6e" stroke-width="1"/><path d="M929 903H938M929 906H937M929 909H938M929 912H938" stroke="#777" stroke-width="0.9"/><rect x="979" y="889.5" width="18.5" height="25" fill="#8a8a8a" stroke="#7a7670" stroke-width="1"/><rect x="983" y="888.5" width="10" height="4" fill="#8e8e8e"/><path d="M981 893H991L995 897V912H981Z" fill="#9c9c9c" stroke="#666" stroke-width="1"/><path d="M983 900H993M983 903H991M983 906H993M983 909H993" stroke="#777" stroke-width="0.9"/><line x1="1019.1" y1="895" x2="1019.1" y2="909" stroke="#333" stroke-width="2" stroke-linecap="round"/><rect x="1043" y="897" width="18" height="17.8" fill="#FCE14A" stroke="#C9A41E" stroke-width="1.5"/><path transform="translate(1036 888.3) scale(1.071 1.028)" d="M12.5 3.2C11 0.8 8.5 0.5 6.5 0.8C3.5 1.3 2 3.2 2 5.2C2 7.5 4 8.8 7 8.9C3.5 9 1 11 1 13.5C1 16.5 4 17.8 7 17.8C10 17.8 12.5 16.3 13.5 14" fill="none" stroke="#6B3A8C" stroke-width="2.4" stroke-linecap="round"/><circle transform="translate(1036 888.3) scale(1.071 1.028)" cx="12.3" cy="3.3" r="1.6" fill="#6B3A8C"/><rect x="1087.3" y="889.5" width="26" height="5.5" fill="#FCE14A" stroke="#C9A41E" stroke-width="1.5"/><rect x="1087.3" y="899.5" width="26" height="5.5" fill="#FCE14A" stroke="#C9A41E" stroke-width="1.5"/><rect x="1087.3" y="909.5" width="26" height="5.5" fill="#FCE14A" stroke="#C9A41E" stroke-width="1.5"/><path d="M1138.8 889.5L1164.3 914.5H1138.8Z" fill="#FCE14A" stroke="#C9A41E" stroke-width="1.5"/><path d="M1140 889.5H1164.3V913Z" fill="#EBEBEB" stroke="#888" stroke-width="1.2"/><rect x="1191.3" y="889.5" width="17.5" height="17" fill="#FCE14A" stroke="#C9A41E" stroke-width="1.5"/><rect x="1205.5" y="903" width="14.5" height="14.8" rx="2" fill="#D81B1B"/><circle cx="1212.8" cy="910.4" r="4.6" fill="none" stroke="#fff" stroke-width="1.6"/><path d="M1209.5 913.5L1216 907" stroke="#fff" stroke-width="1.6"/><path d="M1243 887.5H1269V893.4L1259.6 903.7V917L1252.4 913.5V903.7L1243 893.4Z" fill="#6D9BD1" stroke="#3F5F86" stroke-width="1.4" stroke-linejoin="round"/><rect x="1244" y="888.5" width="24" height="4.7" fill="#FCE14A"/><rect x="1295.3" y="889.5" width="25.2" height="25" fill="#EEF2F8" stroke="#7AA3D4" stroke-width="1.2"/><rect x="1296" y="904" width="24" height="10" fill="#FCE14A" stroke="#C9A41E" stroke-width="1.2"/><path d="M1299 893H1317M1299 898H1317M1299 902H1317" stroke="#9ABADF" stroke-width="1.5"/><path d="M1305 911V898H1301L1308 890L1315 898H1311V911Z" fill="#6D9BD1" stroke="#3F5F86" stroke-width="1.2"/><rect x="1348" y="889.5" width="18.5" height="18.5" fill="#FCE14A" stroke="#C9A41E" stroke-width="1.5"/><path d="M1360 886.8L1365 892.5H1362V897.5H1368V894.5L1375.2 902L1368 909V906.5H1362V911H1365L1360 917L1355 911H1358V906.5H1352V909L1345 902L1352 894.5V897.5H1358V892.5H1355Z" fill="#6D9BD1" stroke="#3F5F86" stroke-width="1.1" stroke-linejoin="round"/><rect x="1398" y="889.5" width="10" height="18" fill="#FCE14A" stroke="#C9A41E" stroke-width="1.2"/><line x1="1398.5" y1="916.5" x2="1409.2" y2="904.6" stroke="#3a3a3a" stroke-width="6" stroke-linecap="butt"/><line x1="1399.5" y1="915.4" x2="1404.5" y2="909.8" stroke="#FCE14A" stroke-width="3"/><circle cx="1406.3" cy="907.8" r="1.6" fill="#000"/><circle cx="1415.5" cy="897.5" r="10.5" fill="#D6D6D6" stroke="#555" stroke-width="2.2"/><path d="M1409.2 896.5A6.5 6.5 0 0 1 1414.5 891.2" stroke="#fff" stroke-width="2" fill="none" opacity="0.9"/><line x1="1443" y1="895" x2="1443" y2="909" stroke="#333" stroke-width="2" stroke-linecap="round"/><rect x="1459" y="889.5" width="25" height="25" fill="#808080"/><rect x="1464" y="889" width="6" height="27" fill="#77756a"/><path d="M1471 894H1483M1471 900H1483M1471 906H1479" stroke="#8e8e8e" stroke-width="1.6"/><rect x="1473.5" y="903.5" width="13.5" height="13" rx="2" fill="#747168"/><path d="M1480 905.5V915M1475.5 908L1484.5 913M1475.5 913L1484.5 908" stroke="#999" stroke-width="1.3"/><rect x="1511" y="889.5" width="25" height="25" fill="#808080"/><rect x="1516" y="888" width="6" height="28" fill="#77706c"/><path d="M1523 894H1535M1523 900H1535M1523 906H1531" stroke="#8e8e8e" stroke-width="1.6"/><rect x="1526" y="904" width="13.5" height="13" rx="2" fill="#7a7470"/><path d="M1529 907L1537 915M1537 907L1529 915" stroke="#999" stroke-width="1.8"/><rect x="1563.5" y="889" width="25" height="25" fill="#E9EEF5" stroke="#7AA3D4" stroke-width="1.5"/><path d="M1566 892H1586M1566 897H1586M1566 901H1586M1566 905H1586M1566 909H1586" stroke="#7AA3D4" stroke-width="1.4"/><path d="M1565.8 907.8L1580.0 888.7L1584.8 892.3L1570.6 911.4Z" fill="#E5791E" stroke="#8a4010" stroke-width="1"/><path d="M1580.0 888.7L1582.6 885.2L1587.4 888.8L1584.8 892.3Z" fill="#EFEFEF"/><path d="M1563.5 916.0L1565.8 907.8L1570.6 911.4Z" fill="#DDD"/><path d="M1615.5 888.5V915M1641.5 888.5V915" stroke="#555" stroke-width="1.2"/><rect x="1614.5" y="913.5" width="28" height="2.5" fill="#E8E8E8" stroke="#555" stroke-width="0.8"/><path d="M1616 891.5H1641M1616 899.5H1641M1616 907H1641" stroke="#555" stroke-width="1"/><circle cx="1624.8" cy="891.5" r="2.4" fill="#F08080" stroke="#B01818" stroke-width="1"/><circle cx="1635.3" cy="891.5" r="2.4" fill="#F08080" stroke="#B01818" stroke-width="1"/><circle cx="1622" cy="899.5" r="2.4" fill="#A8E0A0" stroke="#4E9A4E" stroke-width="1"/><circle cx="1628.8" cy="899.5" r="2.4" fill="#A8E0A0" stroke="#4E9A4E" stroke-width="1"/><circle cx="1622" cy="907" r="2.4" fill="#A8D0F0" stroke="#3A6A9A" stroke-width="1"/><circle cx="1628.8" cy="907" r="2.4" fill="#A8D0F0" stroke="#3A6A9A" stroke-width="1"/><circle cx="1635.4" cy="907" r="2.4" fill="#A8D0F0" stroke="#3A6A9A" stroke-width="1"/><line x1="1659" y1="895" x2="1659" y2="909" stroke="#333" stroke-width="2" stroke-linecap="round"/><rect x="1675.5" y="889.3" width="25" height="6.5" fill="#F5F5F5" stroke="#ccc" stroke-width="0.8"/><path d="M1684 892.5H1697" stroke="#555" stroke-width="2"/><rect x="1675.5" y="898.5" width="25" height="6.5" fill="#B8F0B8" stroke="#5BA05B" stroke-width="0.8"/><path d="M1684 901.7H1697" stroke="#555" stroke-width="2"/><rect x="1675.5" y="907.8" width="25" height="6.5" fill="#F5F5F5" stroke="#ccc" stroke-width="0.8"/><path d="M1678 911H1682" stroke="#A01010" stroke-width="2.5"/><path d="M1684 911H1697" stroke="#F0A0A8" stroke-width="2"/><line x1="1719" y1="895" x2="1719" y2="909" stroke="#333" stroke-width="2" stroke-linecap="round"/><path d="M1751.5 898.5L1757.0 898.5M1749.7 902.7L1753.6 906.6M1745.5 904.5L1745.5 910.0M1741.3 902.7L1737.4 906.6M1739.5 898.5L1734.0 898.5M1741.3 894.3L1737.4 890.4M1745.5 892.5L1745.5 887.0M1749.7 894.3L1753.6 890.4" stroke="#D5D5D5" stroke-width="5" stroke-linecap="round"/><circle cx="1745.5" cy="898.5" r="9.5" fill="#D5D5D5"/><circle cx="1745.5" cy="898.5" r="7.8" fill="#6D9BD1" stroke="#2F5A8A" stroke-width="1.2"/><path d="M1742.5 894V903L1750 898.5Z" fill="#fff"/><path transform="translate(1750.5 902) scale(0.55)" d="M0 0L0 0L22 15L12.5 16L19 26.5L14.5 29L8 18.5L1.5 25Z" fill="#fff" stroke="#111" stroke-width="1.8" stroke-linejoin="round"/><rect x="1777.4" y="879.4" width="48" height="48" rx="6.5" fill="none" stroke="#F4F4F4" stroke-width="2"/><path d="M1792 890V898M1792 890H1812.4V910H1806" stroke="#777" stroke-width="0.8" fill="none"/><rect x="1793" y="892.5" width="19" height="17" fill="#F5F5F5"/><rect x="1788" y="901" width="19.5" height="12.6" fill="#D8E6F5" stroke="#9ABADF" stroke-width="0.8"/><path d="M1790 904H1805M1790 907.5H1805M1790 911H1805M1795 903V913" stroke="#6D9BD1" stroke-width="1.4"/></svg><svg class="abs" style="left:0;top:0" width="1830" height="1310"><defs><clipPath id="bt"><rect x="0" y="308" width="498" height="461"/></clipPath></defs><g clip-path="url(#bt)"><path d="M43.3 317.6H55.3L60.3 321.6H69.3V340.6H43.3Z" fill="#EFEFEF" stroke="#82857F" stroke-width="1.8" stroke-linejoin="round"/><path d="M55.5 349.0L59.5 359.5L70.7 360.1L62.0 367.1L64.9 377.9L55.5 371.8L46.1 377.9L49.0 367.1L40.3 360.1L51.5 359.5Z" fill="#FBEF5C" stroke="#D4A900" stroke-width="1.8" stroke-linejoin="round"/><path d="M47 387H68.5V411.5H47" fill="#E6E6E6" stroke="#A0A0A0" stroke-width="1.3"/><rect x="43.5" y="386" width="6" height="25.5" rx="3" fill="#F4F4F4" stroke="#A0A0A0" stroke-width="1.3"/><path d="M58 386H63V396L60.5 398.5L58 396Z" fill="#6D9BD1" stroke="#3F5F86" stroke-width="1"/><path d="M43.3 425.5H55.3L60.3 429.5H69.3V448.5H43.3Z" fill="#EFEFEF" stroke="#82857F" stroke-width="1.8" stroke-linejoin="round"/><path d="M48.5 437.5L56 430.5L63.5 437.5M50.5 436V445H61.5V436" fill="none" stroke="#222" stroke-width="2"/><path d="M43.3 461.6H55.3L60.3 465.6H69.3V484.6H43.3Z" fill="#EFEFEF" stroke="#82857F" stroke-width="1.8" stroke-linejoin="round"/><g transform="translate(41 492.5) scale(1.0)"><circle cx="15" cy="11" r="10" fill="#A9C8EA" stroke="#4A7AB0" stroke-width="0.8"/><path d="M8 7C10 4 13 8 15 6C17 4 20 5 22 8C23 11 20 12 18 11C16 13 14 16 12 19C10 16 9 12 7 11Z" fill="#2F5A8A"/><path d="M1 11L15 19V30L1 22Z" fill="#D8AE00" stroke="#111" stroke-width="1.2" stroke-linejoin="round"/><path d="M29 11L15 19V30L29 22Z" fill="#FFF476" stroke="#111" stroke-width="1.2" stroke-linejoin="round"/><path d="M1 11L6 8M29 11L24 8" stroke="#111" stroke-width="1.2"/></g><path d="M40.5 559.5C44 548 54 534 70 528C69 541 60 551 47 553Z" fill="#A9C8EA" stroke="#2F5A8A" stroke-width="1.3"/><path d="M46 553L68 531M49 547L60 543M53 541L65 536" stroke="#fff" stroke-width="1" opacity="0.8"/><path d="M43 567C47 562 58 563 62 566C67 563 72 566 71.5 572C71 578 67 581 65 583V590C65 595 58 596 58 590V583C55 584 52 583 51 580C49 584 45 584 43 580C39 576 40 570 43 567Z" fill="#6D9BD1" stroke="#3F5F86" stroke-width="1.8" stroke-linejoin="round"/><path d="M50 579C48 573 51 569 55 571M62 567C59 572 60 580 63 583M66 574C68 578 68 582 70 583" fill="none" stroke="#3F5F86" stroke-width="1.5"/><rect x="41" y="601.5" width="30.5" height="29.5" fill="none" stroke="#3F5F86" stroke-width="2.2" stroke-dasharray="2.6 2.6"/><rect x="45.5" y="605.5" width="21" height="21" fill="#6D9BD1" stroke="#8FA8C4" stroke-width="0.8"/><path d="M40.5 637C52 640 65 648 72 657C62 658 50 659 40.5 664C45 655 45 645 40.5 637Z" fill="#6D9BD1" stroke="#3F5F86" stroke-width="1.6" stroke-linejoin="round"/><path d="M49 641C52 646 52 655 48 660M57 645C60 650 60 655 57 659M64 650C66 653 66 655 64 658" fill="none" stroke="#3F5F86" stroke-width="1.4"/><rect x="41" y="677.8" width="30" height="21" rx="7" fill="#6D9BD1" stroke="#3F5F86" stroke-width="2.5"/><circle cx="55.8" cy="723.5" r="14.6" fill="#C9DBF0" stroke="#6D9BD1" stroke-width="1.6"/><path d="M45 716C47 713 51 713 53 715L52 719L50 721L51 724L49 728L47 727L45 722ZM50 729L53 731L52 736L50 735Z" fill="#1F3A5C"/><path d="M56 713C59 711 64 712 67 715C69 718 67 721 64 720L62 722L63 726L60 733L58 732L57 725L55 722L57 719L55 717Z" fill="#1F3A5C"/><path d="M41.5 723.5H70M44 716H67.5M44 731H67.5M55.8 709V738" stroke="#fff" stroke-width="0.9" opacity="0.85"/><ellipse cx="55.8" cy="723.5" rx="7.5" ry="14.5" fill="none" stroke="#fff" stroke-width="0.9" opacity="0.85"/><path d="M44 753L56 745.5L68 753L56 760Z" fill="#C2D6EE" stroke="#3F5F86" stroke-width="1.5" stroke-linejoin="round"/><path d="M44 753V772H56V760ZM68 753V772H56V760Z" fill="#D8E6F5" stroke="#3F5F86" stroke-width="1.5" stroke-linejoin="round"/></g><rect x="469" y="937.2" width="35" height="34.7" rx="4" fill="#C2C2C2"/><rect x="474.5" y="948" width="23.5" height="12.5" rx="2" fill="#B5B5B5" stroke="#5A5A5A" stroke-width="1.6"/><path d="M478 944V948M483.3 944V948M488.6 944V948M494 944V948M478 960.5V964.5M483.3 960.5V964.5M488.6 960.5V964.5M494 960.5V964.5" stroke="#5A5A5A" stroke-width="1.4"/><rect x="92.0" y="985.5" width="8.8" height="8.6" fill="#2C3E55"/><rect x="100.8" y="985.5" width="8.8" height="8.6" fill="#B0C8E6"/><rect x="109.6" y="985.5" width="8.8" height="8.6" fill="#2C3E55"/><rect x="92.0" y="994.1" width="8.8" height="8.6" fill="#B0C8E6"/><rect x="100.8" y="994.1" width="8.8" height="8.6" fill="#2C3E55"/><rect x="109.6" y="994.1" width="8.8" height="8.6" fill="#B0C8E6"/><rect x="92.0" y="1002.7" width="8.8" height="8.6" fill="#2C3E55"/><rect x="100.8" y="1002.7" width="8.8" height="8.6" fill="#B0C8E6"/><rect x="109.6" y="1002.7" width="8.8" height="8.6" fill="#D6E4F2"/><g transform="rotate(-30 701 1286)"><rect x="692" y="1271" width="18" height="29" rx="9" fill="#C8A8A8" opacity="0.45" transform="translate(2 2)"/><rect x="692" y="1271" width="18" height="29" rx="9" fill="#fff" stroke="#111" stroke-width="2.2"/><path d="M692 1281H710" stroke="#111" stroke-width="1.6"/><path d="M701 1271V1281" stroke="#111" stroke-width="1.6"/><path d="M693 1280C693 1274 696 1272 700 1272V1280Z" fill="#111"/><circle cx="701" cy="1291" r="2.6" fill="none" stroke="#111" stroke-width="1.6"/></g><path d="M710 1276L716 1271M688 1292L692 1289" stroke="#111" stroke-width="1.4" stroke-dasharray="1.5 2"/><path d="M963 1286V1281C963 1271.5 977 1271.5 977 1281V1286" fill="none" stroke="#EDEDED" stroke-width="2.2"/><rect x="958.5" y="1286" width="23.2" height="15.8" rx="2.5" fill="#6A6A6A"/><g stroke="#EEE" fill="none" stroke-width="1.6"><circle cx="1582.4" cy="1286.3" r="11.5" stroke-width="1.2"/><path d="M1570.9 1286.3H1593.9M1572.5 1280H1592.3M1572.5 1292.5H1592.3M1582.4 1274.8V1297.8"/><ellipse cx="1582.4" cy="1286.3" rx="5.5" ry="11.5"/></g><path d="M1582.4 1274.8A11.5 11.5 0 1 1 1582.3 1274.8" fill="#E5E5E5" opacity="0.25"/><ellipse cx="1784" cy="1284.3" rx="15.8" ry="12.7" fill="#666"/><path d="M1790 1294L1797.5 1301.7L1786 1297Z" fill="#666"/><circle cx="1776.1" cy="1284.6" r="2.3" fill="#fff"/><circle cx="1784" cy="1284.6" r="2.3" fill="#fff"/><circle cx="1791.5" cy="1284.6" r="2.3" fill="#fff"/></svg><div class="abs" style="left:1197px;top:923px;width:620px;height:71px;border:6px solid #FF2D6E;border-radius:4px;box-sizing:border-box"></div><div class="abs" style="left:34px;top:877px;width:437px;height:61px;border:5px solid #FF2D6E;border-radius:3px;box-sizing:border-box"></div><svg class="abs" style="left:0;top:0" width="1830" height="1310"><path d="M0 0H4A4 4 0 0 0 0 4Z" fill="#111"/><path d="M1830 0H1822L1830 10Z" fill="#6a2a10"/><path d="M1830 1310H1817L1830 1293Z" fill="#4a1a08"/></svg>
</body></html>
